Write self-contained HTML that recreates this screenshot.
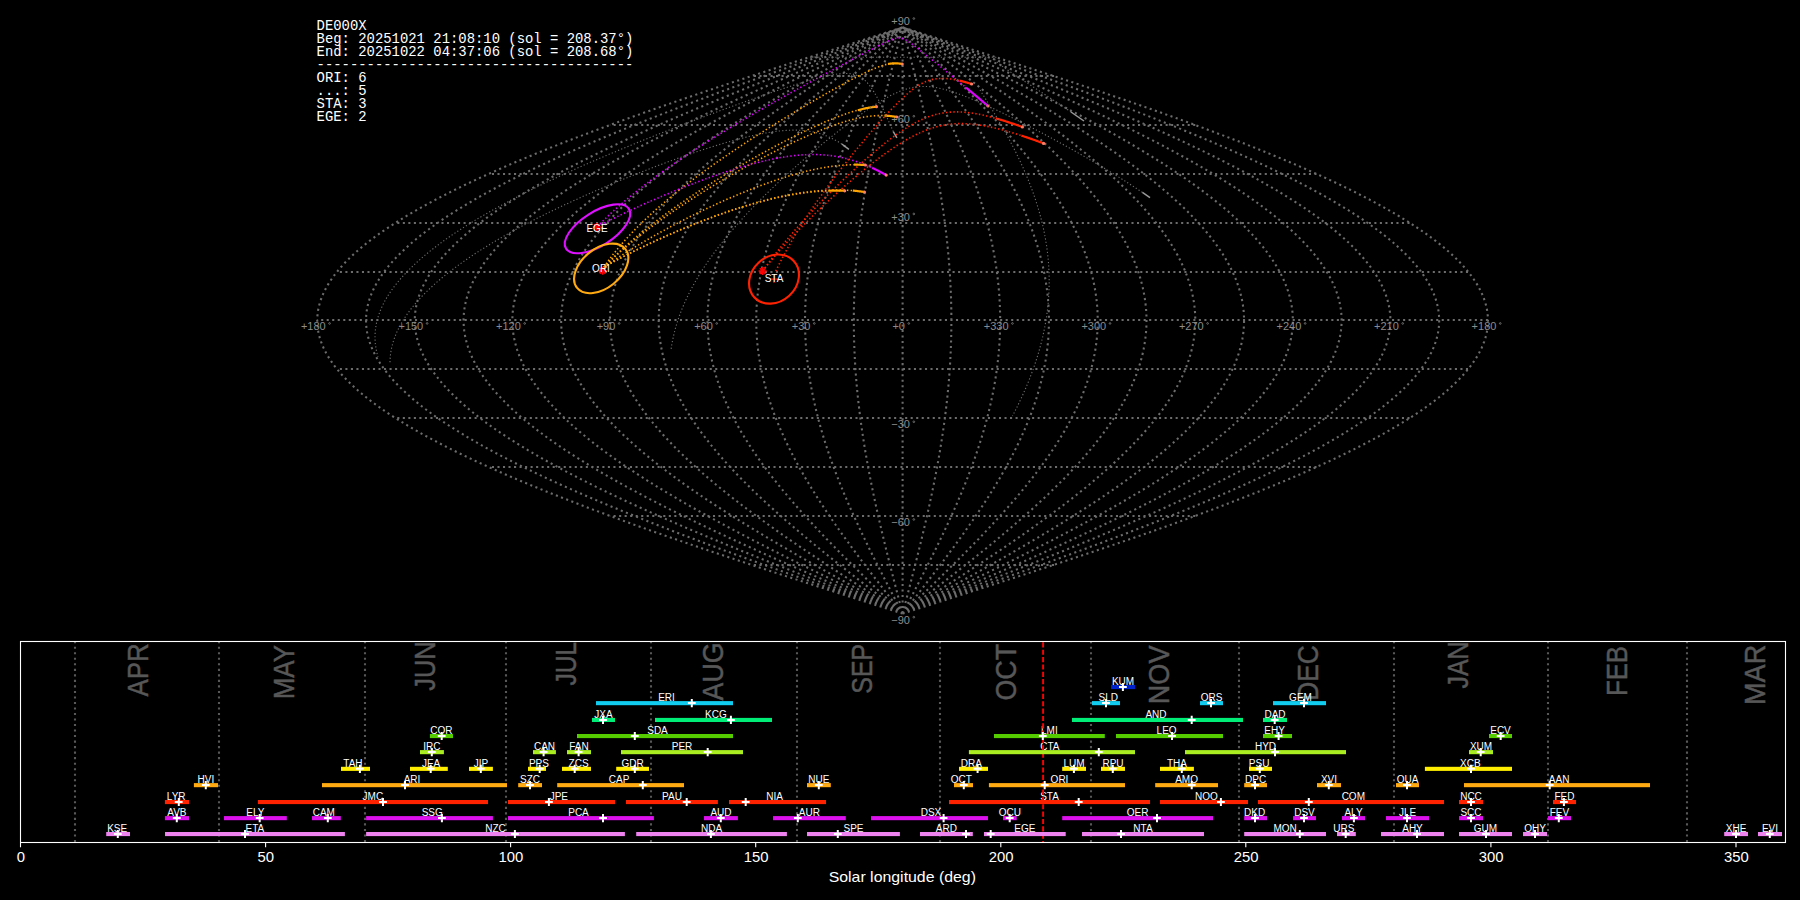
<!DOCTYPE html>
<html><head><meta charset="utf-8"><title>DE000X radiants</title><style>
html,body{margin:0;padding:0;background:#000;width:1800px;height:900px;overflow:hidden}
svg{display:block}
text{font-family:"Liberation Sans",sans-serif}
.hd{font-family:"Liberation Mono",monospace;font-size:13.9px;fill:#fff;white-space:pre}
.gl{font-size:11px;fill:#8c8c8c}
.dg{font-size:6px}
.ml{font-size:10px;fill:#fff;text-anchor:middle}
.mo{font-size:27px;fill:#575757;stroke:#575757;stroke-width:0.45px}
.bl{font-size:10px;fill:#fff;text-anchor:middle}
.tk{font-size:13.9px;fill:#fff;text-anchor:middle}
</style></head>
<body><svg width="1800" height="900" viewBox="0 0 1800 900">
<rect width="1800" height="900" fill="#000"/>
<path d="M1054.10,565.00 L1052.42,565.00 L1050.74,565.00 L1049.05,565.00 L1047.37,565.00 L1045.69,565.00 L1044.00,565.00 L1042.32,565.00 L1040.64,565.00 L1038.95,565.00 L1037.27,565.00 L1035.59,565.00 L1033.90,565.00 L1032.22,565.00 L1030.54,565.00 L1028.85,565.00 L1027.17,565.00 L1025.49,565.00 L1023.80,565.00 L1022.12,565.00 L1020.44,565.00 L1018.75,565.00 L1017.07,565.00 L1015.39,565.00 L1013.70,565.00 L1012.02,565.00 L1010.33,565.00 L1008.65,565.00 L1006.97,565.00 L1005.28,565.00 L1003.60,565.00 L1001.92,565.00 L1000.23,565.00 L998.55,565.00 L996.87,565.00 L995.18,565.00 L993.50,565.00 L991.82,565.00 L990.13,565.00 L988.45,565.00 L986.77,565.00 L985.08,565.00 L983.40,565.00 L981.72,565.00 L980.03,565.00 L978.35,565.00 L976.67,565.00 L974.98,565.00 L973.30,565.00 L971.62,565.00 L969.93,565.00 L968.25,565.00 L966.57,565.00 L964.88,565.00 L963.20,565.00 L961.52,565.00 L959.83,565.00 L958.15,565.00 L956.47,565.00 L954.78,565.00 L953.10,565.00 L951.42,565.00 L949.73,565.00 L948.05,565.00 L946.37,565.00 L944.68,565.00 L943.00,565.00 L941.32,565.00 L939.63,565.00 L937.95,565.00 L936.27,565.00 L934.58,565.00 L932.90,565.00 L931.22,565.00 L929.53,565.00 L927.85,565.00 L926.17,565.00 L924.48,565.00 L922.80,565.00 L921.12,565.00 L919.43,565.00 L917.75,565.00 L916.07,565.00 L914.38,565.00 L912.70,565.00 L911.02,565.00 L909.33,565.00 L907.65,565.00 L905.97,565.00 L904.28,565.00 L902.60,565.00 L900.92,565.00 L899.23,565.00 L897.55,565.00 L895.87,565.00 L894.18,565.00 L892.50,565.00 L890.82,565.00 L889.13,565.00 L887.45,565.00 L885.77,565.00 L884.08,565.00 L882.40,565.00 L880.72,565.00 L879.03,565.00 L877.35,565.00 L875.67,565.00 L873.98,565.00 L872.30,565.00 L870.62,565.00 L868.93,565.00 L867.25,565.00 L865.57,565.00 L863.88,565.00 L862.20,565.00 L860.52,565.00 L858.83,565.00 L857.15,565.00 L855.47,565.00 L853.78,565.00 L852.10,565.00 L850.42,565.00 L848.73,565.00 L847.05,565.00 L845.37,565.00 L843.68,565.00 L842.00,565.00 L840.32,565.00 L838.63,565.00 L836.95,565.00 L835.27,565.00 L833.58,565.00 L831.90,565.00 L830.22,565.00 L828.53,565.00 L826.85,565.00 L825.17,565.00 L823.48,565.00 L821.80,565.00 L820.12,565.00 L818.43,565.00 L816.75,565.00 L815.07,565.00 L813.38,565.00 L811.70,565.00 L810.02,565.00 L808.33,565.00 L806.65,565.00 L804.97,565.00 L803.28,565.00 L801.60,565.00 L799.92,565.00 L798.23,565.00 L796.55,565.00 L794.87,565.00 L793.18,565.00 L791.50,565.00 L789.81,565.00 L788.13,565.00 L786.45,565.00 L784.76,565.00 L783.08,565.00 L781.40,565.00 L779.71,565.00 L778.03,565.00 L776.35,565.00 L774.66,565.00 L772.98,565.00 L771.30,565.00 L769.61,565.00 L767.93,565.00 L766.25,565.00 L764.56,565.00 L762.88,565.00 L761.20,565.00 L759.51,565.00 L757.83,565.00 L756.15,565.00 L754.46,565.00 L752.78,565.00 L751.10,565.00 M1195.28,516.00 L1192.03,516.00 L1188.78,516.00 L1185.52,516.00 L1182.27,516.00 L1179.02,516.00 L1175.77,516.00 L1172.52,516.00 L1169.26,516.00 L1166.01,516.00 L1162.76,516.00 L1159.51,516.00 L1156.26,516.00 L1153.00,516.00 L1149.75,516.00 L1146.50,516.00 L1143.25,516.00 L1140.00,516.00 L1136.74,516.00 L1133.49,516.00 L1130.24,516.00 L1126.99,516.00 L1123.74,516.00 L1120.48,516.00 L1117.23,516.00 L1113.98,516.00 L1110.73,516.00 L1107.48,516.00 L1104.22,516.00 L1100.97,516.00 L1097.72,516.00 L1094.47,516.00 L1091.22,516.00 L1087.96,516.00 L1084.71,516.00 L1081.46,516.00 L1078.21,516.00 L1074.96,516.00 L1071.70,516.00 L1068.45,516.00 L1065.20,516.00 L1061.95,516.00 L1058.70,516.00 L1055.44,516.00 L1052.19,516.00 L1048.94,516.00 L1045.69,516.00 L1042.44,516.00 L1039.18,516.00 L1035.93,516.00 L1032.68,516.00 L1029.43,516.00 L1026.18,516.00 L1022.92,516.00 L1019.67,516.00 L1016.42,516.00 L1013.17,516.00 L1009.92,516.00 L1006.66,516.00 L1003.41,516.00 L1000.16,516.00 L996.91,516.00 L993.66,516.00 L990.40,516.00 L987.15,516.00 L983.90,516.00 L980.65,516.00 L977.40,516.00 L974.14,516.00 L970.89,516.00 L967.64,516.00 L964.39,516.00 L961.14,516.00 L957.88,516.00 L954.63,516.00 L951.38,516.00 L948.13,516.00 L944.88,516.00 L941.62,516.00 L938.37,516.00 L935.12,516.00 L931.87,516.00 L928.62,516.00 L925.36,516.00 L922.11,516.00 L918.86,516.00 L915.61,516.00 L912.36,516.00 L909.10,516.00 L905.85,516.00 L902.60,516.00 L899.35,516.00 L896.10,516.00 L892.84,516.00 L889.59,516.00 L886.34,516.00 L883.09,516.00 L879.84,516.00 L876.58,516.00 L873.33,516.00 L870.08,516.00 L866.83,516.00 L863.58,516.00 L860.32,516.00 L857.07,516.00 L853.82,516.00 L850.57,516.00 L847.32,516.00 L844.06,516.00 L840.81,516.00 L837.56,516.00 L834.31,516.00 L831.06,516.00 L827.80,516.00 L824.55,516.00 L821.30,516.00 L818.05,516.00 L814.80,516.00 L811.54,516.00 L808.29,516.00 L805.04,516.00 L801.79,516.00 L798.54,516.00 L795.28,516.00 L792.03,516.00 L788.78,516.00 L785.53,516.00 L782.28,516.00 L779.02,516.00 L775.77,516.00 L772.52,516.00 L769.27,516.00 L766.02,516.00 L762.76,516.00 L759.51,516.00 L756.26,516.00 L753.01,516.00 L749.76,516.00 L746.50,516.00 L743.25,516.00 L740.00,516.00 L736.75,516.00 L733.50,516.00 L730.24,516.00 L726.99,516.00 L723.74,516.00 L720.49,516.00 L717.24,516.00 L713.98,516.00 L710.73,516.00 L707.48,516.00 L704.23,516.00 L700.98,516.00 L697.72,516.00 L694.47,516.00 L691.22,516.00 L687.97,516.00 L684.72,516.00 L681.46,516.00 L678.21,516.00 L674.96,516.00 L671.71,516.00 L668.46,516.00 L665.20,516.00 L661.95,516.00 L658.70,516.00 L655.45,516.00 L652.20,516.00 L648.94,516.00 L645.69,516.00 L642.44,516.00 L639.19,516.00 L635.94,516.00 L632.68,516.00 L629.43,516.00 L626.18,516.00 L622.93,516.00 L619.68,516.00 L616.42,516.00 L613.17,516.00 L609.92,516.00 M1316.51,467.00 L1311.91,467.00 L1307.31,467.00 L1302.71,467.00 L1298.12,467.00 L1293.52,467.00 L1288.92,467.00 L1284.32,467.00 L1279.72,467.00 L1275.12,467.00 L1270.52,467.00 L1265.92,467.00 L1261.32,467.00 L1256.72,467.00 L1252.13,467.00 L1247.53,467.00 L1242.93,467.00 L1238.33,467.00 L1233.73,467.00 L1229.13,467.00 L1224.53,467.00 L1219.93,467.00 L1215.33,467.00 L1210.73,467.00 L1206.14,467.00 L1201.54,467.00 L1196.94,467.00 L1192.34,467.00 L1187.74,467.00 L1183.14,467.00 L1178.54,467.00 L1173.94,467.00 L1169.34,467.00 L1164.74,467.00 L1160.15,467.00 L1155.55,467.00 L1150.95,467.00 L1146.35,467.00 L1141.75,467.00 L1137.15,467.00 L1132.55,467.00 L1127.95,467.00 L1123.35,467.00 L1118.75,467.00 L1114.16,467.00 L1109.56,467.00 L1104.96,467.00 L1100.36,467.00 L1095.76,467.00 L1091.16,467.00 L1086.56,467.00 L1081.96,467.00 L1077.36,467.00 L1072.76,467.00 L1068.16,467.00 L1063.57,467.00 L1058.97,467.00 L1054.37,467.00 L1049.77,467.00 L1045.17,467.00 L1040.57,467.00 L1035.97,467.00 L1031.37,467.00 L1026.77,467.00 L1022.17,467.00 L1017.58,467.00 L1012.98,467.00 L1008.38,467.00 L1003.78,467.00 L999.18,467.00 L994.58,467.00 L989.98,467.00 L985.38,467.00 L980.78,467.00 L976.18,467.00 L971.59,467.00 L966.99,467.00 L962.39,467.00 L957.79,467.00 L953.19,467.00 L948.59,467.00 L943.99,467.00 L939.39,467.00 L934.79,467.00 L930.19,467.00 L925.60,467.00 L921.00,467.00 L916.40,467.00 L911.80,467.00 L907.20,467.00 L902.60,467.00 L898.00,467.00 L893.40,467.00 L888.80,467.00 L884.20,467.00 L879.60,467.00 L875.01,467.00 L870.41,467.00 L865.81,467.00 L861.21,467.00 L856.61,467.00 L852.01,467.00 L847.41,467.00 L842.81,467.00 L838.21,467.00 L833.61,467.00 L829.02,467.00 L824.42,467.00 L819.82,467.00 L815.22,467.00 L810.62,467.00 L806.02,467.00 L801.42,467.00 L796.82,467.00 L792.22,467.00 L787.62,467.00 L783.03,467.00 L778.43,467.00 L773.83,467.00 L769.23,467.00 L764.63,467.00 L760.03,467.00 L755.43,467.00 L750.83,467.00 L746.23,467.00 L741.63,467.00 L737.04,467.00 L732.44,467.00 L727.84,467.00 L723.24,467.00 L718.64,467.00 L714.04,467.00 L709.44,467.00 L704.84,467.00 L700.24,467.00 L695.64,467.00 L691.04,467.00 L686.45,467.00 L681.85,467.00 L677.25,467.00 L672.65,467.00 L668.05,467.00 L663.45,467.00 L658.85,467.00 L654.25,467.00 L649.65,467.00 L645.05,467.00 L640.46,467.00 L635.86,467.00 L631.26,467.00 L626.66,467.00 L622.06,467.00 L617.46,467.00 L612.86,467.00 L608.26,467.00 L603.66,467.00 L599.06,467.00 L594.47,467.00 L589.87,467.00 L585.27,467.00 L580.67,467.00 L576.07,467.00 L571.47,467.00 L566.87,467.00 L562.27,467.00 L557.67,467.00 L553.07,467.00 L548.48,467.00 L543.88,467.00 L539.28,467.00 L534.68,467.00 L530.08,467.00 L525.48,467.00 L520.88,467.00 L516.28,467.00 L511.68,467.00 L507.08,467.00 L502.49,467.00 L497.89,467.00 L493.29,467.00 L488.69,467.00 M1409.54,418.00 L1403.90,418.00 L1398.27,418.00 L1392.64,418.00 L1387.01,418.00 L1381.37,418.00 L1375.74,418.00 L1370.11,418.00 L1364.48,418.00 L1358.84,418.00 L1353.21,418.00 L1347.58,418.00 L1341.95,418.00 L1336.31,418.00 L1330.68,418.00 L1325.05,418.00 L1319.41,418.00 L1313.78,418.00 L1308.15,418.00 L1302.52,418.00 L1296.88,418.00 L1291.25,418.00 L1285.62,418.00 L1279.99,418.00 L1274.35,418.00 L1268.72,418.00 L1263.09,418.00 L1257.46,418.00 L1251.82,418.00 L1246.19,418.00 L1240.56,418.00 L1234.93,418.00 L1229.29,418.00 L1223.66,418.00 L1218.03,418.00 L1212.39,418.00 L1206.76,418.00 L1201.13,418.00 L1195.50,418.00 L1189.86,418.00 L1184.23,418.00 L1178.60,418.00 L1172.97,418.00 L1167.33,418.00 L1161.70,418.00 L1156.07,418.00 L1150.44,418.00 L1144.80,418.00 L1139.17,418.00 L1133.54,418.00 L1127.91,418.00 L1122.27,418.00 L1116.64,418.00 L1111.01,418.00 L1105.37,418.00 L1099.74,418.00 L1094.11,418.00 L1088.48,418.00 L1082.84,418.00 L1077.21,418.00 L1071.58,418.00 L1065.95,418.00 L1060.31,418.00 L1054.68,418.00 L1049.05,418.00 L1043.42,418.00 L1037.78,418.00 L1032.15,418.00 L1026.52,418.00 L1020.89,418.00 L1015.25,418.00 L1009.62,418.00 L1003.99,418.00 L998.35,418.00 L992.72,418.00 L987.09,418.00 L981.46,418.00 L975.82,418.00 L970.19,418.00 L964.56,418.00 L958.93,418.00 L953.29,418.00 L947.66,418.00 L942.03,418.00 L936.40,418.00 L930.76,418.00 L925.13,418.00 L919.50,418.00 L913.87,418.00 L908.23,418.00 L902.60,418.00 L896.97,418.00 L891.33,418.00 L885.70,418.00 L880.07,418.00 L874.44,418.00 L868.80,418.00 L863.17,418.00 L857.54,418.00 L851.91,418.00 L846.27,418.00 L840.64,418.00 L835.01,418.00 L829.38,418.00 L823.74,418.00 L818.11,418.00 L812.48,418.00 L806.85,418.00 L801.21,418.00 L795.58,418.00 L789.95,418.00 L784.31,418.00 L778.68,418.00 L773.05,418.00 L767.42,418.00 L761.78,418.00 L756.15,418.00 L750.52,418.00 L744.89,418.00 L739.25,418.00 L733.62,418.00 L727.99,418.00 L722.36,418.00 L716.72,418.00 L711.09,418.00 L705.46,418.00 L699.83,418.00 L694.19,418.00 L688.56,418.00 L682.93,418.00 L677.29,418.00 L671.66,418.00 L666.03,418.00 L660.40,418.00 L654.76,418.00 L649.13,418.00 L643.50,418.00 L637.87,418.00 L632.23,418.00 L626.60,418.00 L620.97,418.00 L615.34,418.00 L609.70,418.00 L604.07,418.00 L598.44,418.00 L592.81,418.00 L587.17,418.00 L581.54,418.00 L575.91,418.00 L570.27,418.00 L564.64,418.00 L559.01,418.00 L553.38,418.00 L547.74,418.00 L542.11,418.00 L536.48,418.00 L530.85,418.00 L525.21,418.00 L519.58,418.00 L513.95,418.00 L508.32,418.00 L502.68,418.00 L497.05,418.00 L491.42,418.00 L485.79,418.00 L480.15,418.00 L474.52,418.00 L468.89,418.00 L463.25,418.00 L457.62,418.00 L451.99,418.00 L446.36,418.00 L440.72,418.00 L435.09,418.00 L429.46,418.00 L423.83,418.00 L418.19,418.00 L412.56,418.00 L406.93,418.00 L401.30,418.00 L395.66,418.00 M1468.01,369.00 L1461.73,369.00 L1455.45,369.00 L1449.17,369.00 L1442.88,369.00 L1436.60,369.00 L1430.32,369.00 L1424.04,369.00 L1417.76,369.00 L1411.47,369.00 L1405.19,369.00 L1398.91,369.00 L1392.63,369.00 L1386.34,369.00 L1380.06,369.00 L1373.78,369.00 L1367.50,369.00 L1361.21,369.00 L1354.93,369.00 L1348.65,369.00 L1342.37,369.00 L1336.08,369.00 L1329.80,369.00 L1323.52,369.00 L1317.24,369.00 L1310.95,369.00 L1304.67,369.00 L1298.39,369.00 L1292.11,369.00 L1285.83,369.00 L1279.54,369.00 L1273.26,369.00 L1266.98,369.00 L1260.70,369.00 L1254.41,369.00 L1248.13,369.00 L1241.85,369.00 L1235.57,369.00 L1229.28,369.00 L1223.00,369.00 L1216.72,369.00 L1210.44,369.00 L1204.15,369.00 L1197.87,369.00 L1191.59,369.00 L1185.31,369.00 L1179.02,369.00 L1172.74,369.00 L1166.46,369.00 L1160.18,369.00 L1153.90,369.00 L1147.61,369.00 L1141.33,369.00 L1135.05,369.00 L1128.77,369.00 L1122.48,369.00 L1116.20,369.00 L1109.92,369.00 L1103.64,369.00 L1097.35,369.00 L1091.07,369.00 L1084.79,369.00 L1078.51,369.00 L1072.22,369.00 L1065.94,369.00 L1059.66,369.00 L1053.38,369.00 L1047.09,369.00 L1040.81,369.00 L1034.53,369.00 L1028.25,369.00 L1021.97,369.00 L1015.68,369.00 L1009.40,369.00 L1003.12,369.00 L996.84,369.00 L990.55,369.00 L984.27,369.00 L977.99,369.00 L971.71,369.00 L965.42,369.00 L959.14,369.00 L952.86,369.00 L946.58,369.00 L940.29,369.00 L934.01,369.00 L927.73,369.00 L921.45,369.00 L915.16,369.00 L908.88,369.00 L902.60,369.00 L896.32,369.00 L890.04,369.00 L883.75,369.00 L877.47,369.00 L871.19,369.00 L864.91,369.00 L858.62,369.00 L852.34,369.00 L846.06,369.00 L839.78,369.00 L833.49,369.00 L827.21,369.00 L820.93,369.00 L814.65,369.00 L808.36,369.00 L802.08,369.00 L795.80,369.00 L789.52,369.00 L783.23,369.00 L776.95,369.00 L770.67,369.00 L764.39,369.00 L758.11,369.00 L751.82,369.00 L745.54,369.00 L739.26,369.00 L732.98,369.00 L726.69,369.00 L720.41,369.00 L714.13,369.00 L707.85,369.00 L701.56,369.00 L695.28,369.00 L689.00,369.00 L682.72,369.00 L676.43,369.00 L670.15,369.00 L663.87,369.00 L657.59,369.00 L651.30,369.00 L645.02,369.00 L638.74,369.00 L632.46,369.00 L626.18,369.00 L619.89,369.00 L613.61,369.00 L607.33,369.00 L601.05,369.00 L594.76,369.00 L588.48,369.00 L582.20,369.00 L575.92,369.00 L569.63,369.00 L563.35,369.00 L557.07,369.00 L550.79,369.00 L544.50,369.00 L538.22,369.00 L531.94,369.00 L525.66,369.00 L519.37,369.00 L513.09,369.00 L506.81,369.00 L500.53,369.00 L494.25,369.00 L487.96,369.00 L481.68,369.00 L475.40,369.00 L469.12,369.00 L462.83,369.00 L456.55,369.00 L450.27,369.00 L443.99,369.00 L437.70,369.00 L431.42,369.00 L425.14,369.00 L418.86,369.00 L412.57,369.00 L406.29,369.00 L400.01,369.00 L393.73,369.00 L387.44,369.00 L381.16,369.00 L374.88,369.00 L368.60,369.00 L362.32,369.00 L356.03,369.00 L349.75,369.00 L343.47,369.00 L337.19,369.00 M1487.96,320.00 L1481.46,320.00 L1474.95,320.00 L1468.45,320.00 L1461.94,320.00 L1455.44,320.00 L1448.94,320.00 L1442.43,320.00 L1435.93,320.00 L1429.42,320.00 L1422.92,320.00 L1416.42,320.00 L1409.91,320.00 L1403.41,320.00 L1396.90,320.00 L1390.40,320.00 L1383.90,320.00 L1377.39,320.00 L1370.89,320.00 L1364.38,320.00 L1357.88,320.00 L1351.38,320.00 L1344.87,320.00 L1338.37,320.00 L1331.86,320.00 L1325.36,320.00 L1318.86,320.00 L1312.35,320.00 L1305.85,320.00 L1299.34,320.00 L1292.84,320.00 L1286.34,320.00 L1279.83,320.00 L1273.33,320.00 L1266.82,320.00 L1260.32,320.00 L1253.82,320.00 L1247.31,320.00 L1240.81,320.00 L1234.30,320.00 L1227.80,320.00 L1221.30,320.00 L1214.79,320.00 L1208.29,320.00 L1201.78,320.00 L1195.28,320.00 L1188.78,320.00 L1182.27,320.00 L1175.77,320.00 L1169.26,320.00 L1162.76,320.00 L1156.26,320.00 L1149.75,320.00 L1143.25,320.00 L1136.74,320.00 L1130.24,320.00 L1123.74,320.00 L1117.23,320.00 L1110.73,320.00 L1104.22,320.00 L1097.72,320.00 L1091.22,320.00 L1084.71,320.00 L1078.21,320.00 L1071.70,320.00 L1065.20,320.00 L1058.70,320.00 L1052.19,320.00 L1045.69,320.00 L1039.18,320.00 L1032.68,320.00 L1026.18,320.00 L1019.67,320.00 L1013.17,320.00 L1006.66,320.00 L1000.16,320.00 L993.66,320.00 L987.15,320.00 L980.65,320.00 L974.14,320.00 L967.64,320.00 L961.14,320.00 L954.63,320.00 L948.13,320.00 L941.62,320.00 L935.12,320.00 L928.62,320.00 L922.11,320.00 L915.61,320.00 L909.10,320.00 L902.60,320.00 L896.10,320.00 L889.59,320.00 L883.09,320.00 L876.58,320.00 L870.08,320.00 L863.58,320.00 L857.07,320.00 L850.57,320.00 L844.06,320.00 L837.56,320.00 L831.06,320.00 L824.55,320.00 L818.05,320.00 L811.54,320.00 L805.04,320.00 L798.54,320.00 L792.03,320.00 L785.53,320.00 L779.02,320.00 L772.52,320.00 L766.02,320.00 L759.51,320.00 L753.01,320.00 L746.50,320.00 L740.00,320.00 L733.50,320.00 L726.99,320.00 L720.49,320.00 L713.98,320.00 L707.48,320.00 L700.98,320.00 L694.47,320.00 L687.97,320.00 L681.46,320.00 L674.96,320.00 L668.46,320.00 L661.95,320.00 L655.45,320.00 L648.94,320.00 L642.44,320.00 L635.94,320.00 L629.43,320.00 L622.93,320.00 L616.42,320.00 L609.92,320.00 L603.42,320.00 L596.91,320.00 L590.41,320.00 L583.90,320.00 L577.40,320.00 L570.90,320.00 L564.39,320.00 L557.89,320.00 L551.38,320.00 L544.88,320.00 L538.38,320.00 L531.87,320.00 L525.37,320.00 L518.86,320.00 L512.36,320.00 L505.86,320.00 L499.35,320.00 L492.85,320.00 L486.34,320.00 L479.84,320.00 L473.34,320.00 L466.83,320.00 L460.33,320.00 L453.82,320.00 L447.32,320.00 L440.82,320.00 L434.31,320.00 L427.81,320.00 L421.30,320.00 L414.80,320.00 L408.30,320.00 L401.79,320.00 L395.29,320.00 L388.78,320.00 L382.28,320.00 L375.78,320.00 L369.27,320.00 L362.77,320.00 L356.26,320.00 L349.76,320.00 L343.26,320.00 L336.75,320.00 L330.25,320.00 L323.74,320.00 L317.24,320.00 M1468.01,272.00 L1461.73,272.00 L1455.45,272.00 L1449.17,272.00 L1442.88,272.00 L1436.60,272.00 L1430.32,272.00 L1424.04,272.00 L1417.76,272.00 L1411.47,272.00 L1405.19,272.00 L1398.91,272.00 L1392.63,272.00 L1386.34,272.00 L1380.06,272.00 L1373.78,272.00 L1367.50,272.00 L1361.21,272.00 L1354.93,272.00 L1348.65,272.00 L1342.37,272.00 L1336.08,272.00 L1329.80,272.00 L1323.52,272.00 L1317.24,272.00 L1310.95,272.00 L1304.67,272.00 L1298.39,272.00 L1292.11,272.00 L1285.83,272.00 L1279.54,272.00 L1273.26,272.00 L1266.98,272.00 L1260.70,272.00 L1254.41,272.00 L1248.13,272.00 L1241.85,272.00 L1235.57,272.00 L1229.28,272.00 L1223.00,272.00 L1216.72,272.00 L1210.44,272.00 L1204.15,272.00 L1197.87,272.00 L1191.59,272.00 L1185.31,272.00 L1179.02,272.00 L1172.74,272.00 L1166.46,272.00 L1160.18,272.00 L1153.90,272.00 L1147.61,272.00 L1141.33,272.00 L1135.05,272.00 L1128.77,272.00 L1122.48,272.00 L1116.20,272.00 L1109.92,272.00 L1103.64,272.00 L1097.35,272.00 L1091.07,272.00 L1084.79,272.00 L1078.51,272.00 L1072.22,272.00 L1065.94,272.00 L1059.66,272.00 L1053.38,272.00 L1047.09,272.00 L1040.81,272.00 L1034.53,272.00 L1028.25,272.00 L1021.97,272.00 L1015.68,272.00 L1009.40,272.00 L1003.12,272.00 L996.84,272.00 L990.55,272.00 L984.27,272.00 L977.99,272.00 L971.71,272.00 L965.42,272.00 L959.14,272.00 L952.86,272.00 L946.58,272.00 L940.29,272.00 L934.01,272.00 L927.73,272.00 L921.45,272.00 L915.16,272.00 L908.88,272.00 L902.60,272.00 L896.32,272.00 L890.04,272.00 L883.75,272.00 L877.47,272.00 L871.19,272.00 L864.91,272.00 L858.62,272.00 L852.34,272.00 L846.06,272.00 L839.78,272.00 L833.49,272.00 L827.21,272.00 L820.93,272.00 L814.65,272.00 L808.36,272.00 L802.08,272.00 L795.80,272.00 L789.52,272.00 L783.23,272.00 L776.95,272.00 L770.67,272.00 L764.39,272.00 L758.11,272.00 L751.82,272.00 L745.54,272.00 L739.26,272.00 L732.98,272.00 L726.69,272.00 L720.41,272.00 L714.13,272.00 L707.85,272.00 L701.56,272.00 L695.28,272.00 L689.00,272.00 L682.72,272.00 L676.43,272.00 L670.15,272.00 L663.87,272.00 L657.59,272.00 L651.30,272.00 L645.02,272.00 L638.74,272.00 L632.46,272.00 L626.18,272.00 L619.89,272.00 L613.61,272.00 L607.33,272.00 L601.05,272.00 L594.76,272.00 L588.48,272.00 L582.20,272.00 L575.92,272.00 L569.63,272.00 L563.35,272.00 L557.07,272.00 L550.79,272.00 L544.50,272.00 L538.22,272.00 L531.94,272.00 L525.66,272.00 L519.37,272.00 L513.09,272.00 L506.81,272.00 L500.53,272.00 L494.25,272.00 L487.96,272.00 L481.68,272.00 L475.40,272.00 L469.12,272.00 L462.83,272.00 L456.55,272.00 L450.27,272.00 L443.99,272.00 L437.70,272.00 L431.42,272.00 L425.14,272.00 L418.86,272.00 L412.57,272.00 L406.29,272.00 L400.01,272.00 L393.73,272.00 L387.44,272.00 L381.16,272.00 L374.88,272.00 L368.60,272.00 L362.32,272.00 L356.03,272.00 L349.75,272.00 L343.47,272.00 L337.19,272.00 M1409.54,223.00 L1403.90,223.00 L1398.27,223.00 L1392.64,223.00 L1387.01,223.00 L1381.37,223.00 L1375.74,223.00 L1370.11,223.00 L1364.48,223.00 L1358.84,223.00 L1353.21,223.00 L1347.58,223.00 L1341.95,223.00 L1336.31,223.00 L1330.68,223.00 L1325.05,223.00 L1319.41,223.00 L1313.78,223.00 L1308.15,223.00 L1302.52,223.00 L1296.88,223.00 L1291.25,223.00 L1285.62,223.00 L1279.99,223.00 L1274.35,223.00 L1268.72,223.00 L1263.09,223.00 L1257.46,223.00 L1251.82,223.00 L1246.19,223.00 L1240.56,223.00 L1234.93,223.00 L1229.29,223.00 L1223.66,223.00 L1218.03,223.00 L1212.39,223.00 L1206.76,223.00 L1201.13,223.00 L1195.50,223.00 L1189.86,223.00 L1184.23,223.00 L1178.60,223.00 L1172.97,223.00 L1167.33,223.00 L1161.70,223.00 L1156.07,223.00 L1150.44,223.00 L1144.80,223.00 L1139.17,223.00 L1133.54,223.00 L1127.91,223.00 L1122.27,223.00 L1116.64,223.00 L1111.01,223.00 L1105.37,223.00 L1099.74,223.00 L1094.11,223.00 L1088.48,223.00 L1082.84,223.00 L1077.21,223.00 L1071.58,223.00 L1065.95,223.00 L1060.31,223.00 L1054.68,223.00 L1049.05,223.00 L1043.42,223.00 L1037.78,223.00 L1032.15,223.00 L1026.52,223.00 L1020.89,223.00 L1015.25,223.00 L1009.62,223.00 L1003.99,223.00 L998.35,223.00 L992.72,223.00 L987.09,223.00 L981.46,223.00 L975.82,223.00 L970.19,223.00 L964.56,223.00 L958.93,223.00 L953.29,223.00 L947.66,223.00 L942.03,223.00 L936.40,223.00 L930.76,223.00 L925.13,223.00 L919.50,223.00 L913.87,223.00 L908.23,223.00 L902.60,223.00 L896.97,223.00 L891.33,223.00 L885.70,223.00 L880.07,223.00 L874.44,223.00 L868.80,223.00 L863.17,223.00 L857.54,223.00 L851.91,223.00 L846.27,223.00 L840.64,223.00 L835.01,223.00 L829.38,223.00 L823.74,223.00 L818.11,223.00 L812.48,223.00 L806.85,223.00 L801.21,223.00 L795.58,223.00 L789.95,223.00 L784.31,223.00 L778.68,223.00 L773.05,223.00 L767.42,223.00 L761.78,223.00 L756.15,223.00 L750.52,223.00 L744.89,223.00 L739.25,223.00 L733.62,223.00 L727.99,223.00 L722.36,223.00 L716.72,223.00 L711.09,223.00 L705.46,223.00 L699.83,223.00 L694.19,223.00 L688.56,223.00 L682.93,223.00 L677.29,223.00 L671.66,223.00 L666.03,223.00 L660.40,223.00 L654.76,223.00 L649.13,223.00 L643.50,223.00 L637.87,223.00 L632.23,223.00 L626.60,223.00 L620.97,223.00 L615.34,223.00 L609.70,223.00 L604.07,223.00 L598.44,223.00 L592.81,223.00 L587.17,223.00 L581.54,223.00 L575.91,223.00 L570.27,223.00 L564.64,223.00 L559.01,223.00 L553.38,223.00 L547.74,223.00 L542.11,223.00 L536.48,223.00 L530.85,223.00 L525.21,223.00 L519.58,223.00 L513.95,223.00 L508.32,223.00 L502.68,223.00 L497.05,223.00 L491.42,223.00 L485.79,223.00 L480.15,223.00 L474.52,223.00 L468.89,223.00 L463.25,223.00 L457.62,223.00 L451.99,223.00 L446.36,223.00 L440.72,223.00 L435.09,223.00 L429.46,223.00 L423.83,223.00 L418.19,223.00 L412.56,223.00 L406.93,223.00 L401.30,223.00 L395.66,223.00 M1316.51,174.00 L1311.91,174.00 L1307.31,174.00 L1302.71,174.00 L1298.12,174.00 L1293.52,174.00 L1288.92,174.00 L1284.32,174.00 L1279.72,174.00 L1275.12,174.00 L1270.52,174.00 L1265.92,174.00 L1261.32,174.00 L1256.72,174.00 L1252.13,174.00 L1247.53,174.00 L1242.93,174.00 L1238.33,174.00 L1233.73,174.00 L1229.13,174.00 L1224.53,174.00 L1219.93,174.00 L1215.33,174.00 L1210.73,174.00 L1206.14,174.00 L1201.54,174.00 L1196.94,174.00 L1192.34,174.00 L1187.74,174.00 L1183.14,174.00 L1178.54,174.00 L1173.94,174.00 L1169.34,174.00 L1164.74,174.00 L1160.15,174.00 L1155.55,174.00 L1150.95,174.00 L1146.35,174.00 L1141.75,174.00 L1137.15,174.00 L1132.55,174.00 L1127.95,174.00 L1123.35,174.00 L1118.75,174.00 L1114.16,174.00 L1109.56,174.00 L1104.96,174.00 L1100.36,174.00 L1095.76,174.00 L1091.16,174.00 L1086.56,174.00 L1081.96,174.00 L1077.36,174.00 L1072.76,174.00 L1068.16,174.00 L1063.57,174.00 L1058.97,174.00 L1054.37,174.00 L1049.77,174.00 L1045.17,174.00 L1040.57,174.00 L1035.97,174.00 L1031.37,174.00 L1026.77,174.00 L1022.17,174.00 L1017.58,174.00 L1012.98,174.00 L1008.38,174.00 L1003.78,174.00 L999.18,174.00 L994.58,174.00 L989.98,174.00 L985.38,174.00 L980.78,174.00 L976.18,174.00 L971.59,174.00 L966.99,174.00 L962.39,174.00 L957.79,174.00 L953.19,174.00 L948.59,174.00 L943.99,174.00 L939.39,174.00 L934.79,174.00 L930.19,174.00 L925.60,174.00 L921.00,174.00 L916.40,174.00 L911.80,174.00 L907.20,174.00 L902.60,174.00 L898.00,174.00 L893.40,174.00 L888.80,174.00 L884.20,174.00 L879.60,174.00 L875.01,174.00 L870.41,174.00 L865.81,174.00 L861.21,174.00 L856.61,174.00 L852.01,174.00 L847.41,174.00 L842.81,174.00 L838.21,174.00 L833.61,174.00 L829.02,174.00 L824.42,174.00 L819.82,174.00 L815.22,174.00 L810.62,174.00 L806.02,174.00 L801.42,174.00 L796.82,174.00 L792.22,174.00 L787.62,174.00 L783.03,174.00 L778.43,174.00 L773.83,174.00 L769.23,174.00 L764.63,174.00 L760.03,174.00 L755.43,174.00 L750.83,174.00 L746.23,174.00 L741.63,174.00 L737.04,174.00 L732.44,174.00 L727.84,174.00 L723.24,174.00 L718.64,174.00 L714.04,174.00 L709.44,174.00 L704.84,174.00 L700.24,174.00 L695.64,174.00 L691.04,174.00 L686.45,174.00 L681.85,174.00 L677.25,174.00 L672.65,174.00 L668.05,174.00 L663.45,174.00 L658.85,174.00 L654.25,174.00 L649.65,174.00 L645.05,174.00 L640.46,174.00 L635.86,174.00 L631.26,174.00 L626.66,174.00 L622.06,174.00 L617.46,174.00 L612.86,174.00 L608.26,174.00 L603.66,174.00 L599.06,174.00 L594.47,174.00 L589.87,174.00 L585.27,174.00 L580.67,174.00 L576.07,174.00 L571.47,174.00 L566.87,174.00 L562.27,174.00 L557.67,174.00 L553.07,174.00 L548.48,174.00 L543.88,174.00 L539.28,174.00 L534.68,174.00 L530.08,174.00 L525.48,174.00 L520.88,174.00 L516.28,174.00 L511.68,174.00 L507.08,174.00 L502.49,174.00 L497.89,174.00 L493.29,174.00 L488.69,174.00 M1195.28,125.00 L1192.03,125.00 L1188.78,125.00 L1185.52,125.00 L1182.27,125.00 L1179.02,125.00 L1175.77,125.00 L1172.52,125.00 L1169.26,125.00 L1166.01,125.00 L1162.76,125.00 L1159.51,125.00 L1156.26,125.00 L1153.00,125.00 L1149.75,125.00 L1146.50,125.00 L1143.25,125.00 L1140.00,125.00 L1136.74,125.00 L1133.49,125.00 L1130.24,125.00 L1126.99,125.00 L1123.74,125.00 L1120.48,125.00 L1117.23,125.00 L1113.98,125.00 L1110.73,125.00 L1107.48,125.00 L1104.22,125.00 L1100.97,125.00 L1097.72,125.00 L1094.47,125.00 L1091.22,125.00 L1087.96,125.00 L1084.71,125.00 L1081.46,125.00 L1078.21,125.00 L1074.96,125.00 L1071.70,125.00 L1068.45,125.00 L1065.20,125.00 L1061.95,125.00 L1058.70,125.00 L1055.44,125.00 L1052.19,125.00 L1048.94,125.00 L1045.69,125.00 L1042.44,125.00 L1039.18,125.00 L1035.93,125.00 L1032.68,125.00 L1029.43,125.00 L1026.18,125.00 L1022.92,125.00 L1019.67,125.00 L1016.42,125.00 L1013.17,125.00 L1009.92,125.00 L1006.66,125.00 L1003.41,125.00 L1000.16,125.00 L996.91,125.00 L993.66,125.00 L990.40,125.00 L987.15,125.00 L983.90,125.00 L980.65,125.00 L977.40,125.00 L974.14,125.00 L970.89,125.00 L967.64,125.00 L964.39,125.00 L961.14,125.00 L957.88,125.00 L954.63,125.00 L951.38,125.00 L948.13,125.00 L944.88,125.00 L941.62,125.00 L938.37,125.00 L935.12,125.00 L931.87,125.00 L928.62,125.00 L925.36,125.00 L922.11,125.00 L918.86,125.00 L915.61,125.00 L912.36,125.00 L909.10,125.00 L905.85,125.00 L902.60,125.00 L899.35,125.00 L896.10,125.00 L892.84,125.00 L889.59,125.00 L886.34,125.00 L883.09,125.00 L879.84,125.00 L876.58,125.00 L873.33,125.00 L870.08,125.00 L866.83,125.00 L863.58,125.00 L860.32,125.00 L857.07,125.00 L853.82,125.00 L850.57,125.00 L847.32,125.00 L844.06,125.00 L840.81,125.00 L837.56,125.00 L834.31,125.00 L831.06,125.00 L827.80,125.00 L824.55,125.00 L821.30,125.00 L818.05,125.00 L814.80,125.00 L811.54,125.00 L808.29,125.00 L805.04,125.00 L801.79,125.00 L798.54,125.00 L795.28,125.00 L792.03,125.00 L788.78,125.00 L785.53,125.00 L782.28,125.00 L779.02,125.00 L775.77,125.00 L772.52,125.00 L769.27,125.00 L766.02,125.00 L762.76,125.00 L759.51,125.00 L756.26,125.00 L753.01,125.00 L749.76,125.00 L746.50,125.00 L743.25,125.00 L740.00,125.00 L736.75,125.00 L733.50,125.00 L730.24,125.00 L726.99,125.00 L723.74,125.00 L720.49,125.00 L717.24,125.00 L713.98,125.00 L710.73,125.00 L707.48,125.00 L704.23,125.00 L700.98,125.00 L697.72,125.00 L694.47,125.00 L691.22,125.00 L687.97,125.00 L684.72,125.00 L681.46,125.00 L678.21,125.00 L674.96,125.00 L671.71,125.00 L668.46,125.00 L665.20,125.00 L661.95,125.00 L658.70,125.00 L655.45,125.00 L652.20,125.00 L648.94,125.00 L645.69,125.00 L642.44,125.00 L639.19,125.00 L635.94,125.00 L632.68,125.00 L629.43,125.00 L626.18,125.00 L622.93,125.00 L619.68,125.00 L616.42,125.00 L613.17,125.00 L609.92,125.00 M1054.10,76.00 L1052.42,76.00 L1050.74,76.00 L1049.05,76.00 L1047.37,76.00 L1045.69,76.00 L1044.00,76.00 L1042.32,76.00 L1040.64,76.00 L1038.95,76.00 L1037.27,76.00 L1035.59,76.00 L1033.90,76.00 L1032.22,76.00 L1030.54,76.00 L1028.85,76.00 L1027.17,76.00 L1025.49,76.00 L1023.80,76.00 L1022.12,76.00 L1020.44,76.00 L1018.75,76.00 L1017.07,76.00 L1015.39,76.00 L1013.70,76.00 L1012.02,76.00 L1010.33,76.00 L1008.65,76.00 L1006.97,76.00 L1005.28,76.00 L1003.60,76.00 L1001.92,76.00 L1000.23,76.00 L998.55,76.00 L996.87,76.00 L995.18,76.00 L993.50,76.00 L991.82,76.00 L990.13,76.00 L988.45,76.00 L986.77,76.00 L985.08,76.00 L983.40,76.00 L981.72,76.00 L980.03,76.00 L978.35,76.00 L976.67,76.00 L974.98,76.00 L973.30,76.00 L971.62,76.00 L969.93,76.00 L968.25,76.00 L966.57,76.00 L964.88,76.00 L963.20,76.00 L961.52,76.00 L959.83,76.00 L958.15,76.00 L956.47,76.00 L954.78,76.00 L953.10,76.00 L951.42,76.00 L949.73,76.00 L948.05,76.00 L946.37,76.00 L944.68,76.00 L943.00,76.00 L941.32,76.00 L939.63,76.00 L937.95,76.00 L936.27,76.00 L934.58,76.00 L932.90,76.00 L931.22,76.00 L929.53,76.00 L927.85,76.00 L926.17,76.00 L924.48,76.00 L922.80,76.00 L921.12,76.00 L919.43,76.00 L917.75,76.00 L916.07,76.00 L914.38,76.00 L912.70,76.00 L911.02,76.00 L909.33,76.00 L907.65,76.00 L905.97,76.00 L904.28,76.00 L902.60,76.00 L900.92,76.00 L899.23,76.00 L897.55,76.00 L895.87,76.00 L894.18,76.00 L892.50,76.00 L890.82,76.00 L889.13,76.00 L887.45,76.00 L885.77,76.00 L884.08,76.00 L882.40,76.00 L880.72,76.00 L879.03,76.00 L877.35,76.00 L875.67,76.00 L873.98,76.00 L872.30,76.00 L870.62,76.00 L868.93,76.00 L867.25,76.00 L865.57,76.00 L863.88,76.00 L862.20,76.00 L860.52,76.00 L858.83,76.00 L857.15,76.00 L855.47,76.00 L853.78,76.00 L852.10,76.00 L850.42,76.00 L848.73,76.00 L847.05,76.00 L845.37,76.00 L843.68,76.00 L842.00,76.00 L840.32,76.00 L838.63,76.00 L836.95,76.00 L835.27,76.00 L833.58,76.00 L831.90,76.00 L830.22,76.00 L828.53,76.00 L826.85,76.00 L825.17,76.00 L823.48,76.00 L821.80,76.00 L820.12,76.00 L818.43,76.00 L816.75,76.00 L815.07,76.00 L813.38,76.00 L811.70,76.00 L810.02,76.00 L808.33,76.00 L806.65,76.00 L804.97,76.00 L803.28,76.00 L801.60,76.00 L799.92,76.00 L798.23,76.00 L796.55,76.00 L794.87,76.00 L793.18,76.00 L791.50,76.00 L789.81,76.00 L788.13,76.00 L786.45,76.00 L784.76,76.00 L783.08,76.00 L781.40,76.00 L779.71,76.00 L778.03,76.00 L776.35,76.00 L774.66,76.00 L772.98,76.00 L771.30,76.00 L769.61,76.00 L767.93,76.00 L766.25,76.00 L764.56,76.00 L762.88,76.00 L761.20,76.00 L759.51,76.00 L757.83,76.00 L756.15,76.00 L754.46,76.00 L752.78,76.00 L751.10,76.00 M902.60,613.58 L907.71,611.95 L912.82,610.32 L917.92,608.69 L923.03,607.07 L928.13,605.44 L933.24,603.81 L938.34,602.18 L943.43,600.55 L948.53,598.92 L953.62,597.30 L958.70,595.67 L963.79,594.04 L968.86,592.41 L973.94,590.78 L979.00,589.15 L984.07,587.52 L989.12,585.90 L994.17,584.27 L999.21,582.64 L1004.25,581.01 L1009.27,579.38 L1014.29,577.75 L1019.30,576.12 L1024.30,574.50 L1029.30,572.87 L1034.28,571.24 L1039.25,569.61 L1044.21,567.98 L1049.16,566.35 L1054.10,564.73 L1059.03,563.10 L1063.95,561.47 L1068.85,559.84 L1073.74,558.21 L1078.62,556.58 L1083.49,554.95 L1088.34,553.33 L1093.17,551.70 L1098.00,550.07 L1102.80,548.44 L1107.60,546.81 L1112.37,545.18 L1117.14,543.55 L1121.88,541.93 L1126.61,540.30 L1131.32,538.67 L1136.01,537.04 L1140.69,535.41 L1145.34,533.78 L1149.98,532.15 L1154.60,530.53 L1159.20,528.90 L1163.79,527.27 L1168.35,525.64 L1172.89,524.01 L1177.41,522.38 L1181.91,520.76 L1186.39,519.13 L1190.85,517.50 L1195.28,515.87 L1199.69,514.24 L1204.08,512.61 L1208.45,510.98 L1212.79,509.36 L1217.11,507.73 L1221.41,506.10 L1225.68,504.47 L1229.93,502.84 L1234.15,501.21 L1238.35,499.59 L1242.52,497.96 L1246.67,496.33 L1250.79,494.70 L1254.88,493.07 L1258.94,491.44 L1262.98,489.81 L1267.00,488.19 L1270.98,486.56 L1274.93,484.93 L1278.86,483.30 L1282.76,481.67 L1286.63,480.04 L1290.47,478.41 L1294.28,476.79 L1298.06,475.16 L1301.81,473.53 L1305.54,471.90 L1309.23,470.27 L1312.88,468.64 L1316.51,467.01 L1320.11,465.39 L1323.67,463.76 L1327.21,462.13 L1330.71,460.50 L1334.17,458.87 L1337.61,457.24 L1341.01,455.62 L1344.38,453.99 L1347.71,452.36 L1351.01,450.73 L1354.28,449.10 L1357.51,447.47 L1360.71,445.84 L1363.87,444.22 L1367.00,442.59 L1370.09,440.96 L1373.15,439.33 L1376.17,437.70 L1379.15,436.07 L1382.10,434.44 L1385.01,432.82 L1387.89,431.19 L1390.72,429.56 L1393.52,427.93 L1396.29,426.30 L1399.01,424.67 L1401.70,423.05 L1404.35,421.42 L1406.96,419.79 L1409.54,418.16 L1412.07,416.53 L1414.57,414.90 L1417.02,413.27 L1419.44,411.65 L1421.82,410.02 L1424.16,408.39 L1426.46,406.76 L1428.72,405.13 L1430.94,403.50 L1433.12,401.88 L1435.25,400.25 L1437.35,398.62 L1439.41,396.99 L1441.43,395.36 L1443.40,393.73 L1445.34,392.10 L1447.23,390.48 L1449.08,388.85 L1450.89,387.22 L1452.66,385.59 L1454.38,383.96 L1456.07,382.33 L1457.71,380.70 L1459.31,379.08 L1460.87,377.45 L1462.38,375.82 L1463.85,374.19 L1465.28,372.56 L1466.67,370.93 L1468.01,369.31 L1469.31,367.68 L1470.57,366.05 L1471.79,364.42 L1472.96,362.79 L1474.08,361.16 L1475.17,359.53 L1476.21,357.91 L1477.21,356.28 L1478.16,354.65 L1479.07,353.02 L1479.93,351.39 L1480.75,349.76 L1481.53,348.13 L1482.26,346.51 L1482.95,344.88 L1483.60,343.25 L1484.20,341.62 L1484.75,339.99 L1485.27,338.36 L1485.73,336.74 L1486.16,335.11 L1486.53,333.48 L1486.87,331.85 L1487.16,330.22 L1487.40,328.59 L1487.60,326.96 L1487.76,325.34 L1487.87,323.71 L1487.94,322.08 L1487.96,320.45 L1487.94,318.82 L1487.87,317.19 L1487.76,315.56 L1487.60,313.94 L1487.40,312.31 L1487.16,310.68 L1486.87,309.05 L1486.53,307.42 L1486.16,305.79 L1485.73,304.16 L1485.27,302.54 L1484.75,300.91 L1484.20,299.28 L1483.60,297.65 L1482.95,296.02 L1482.26,294.39 L1481.53,292.77 L1480.75,291.14 L1479.93,289.51 L1479.07,287.88 L1478.16,286.25 L1477.21,284.62 L1476.21,282.99 L1475.17,281.37 L1474.08,279.74 L1472.96,278.11 L1471.79,276.48 L1470.57,274.85 L1469.31,273.22 L1468.01,271.59 L1466.67,269.97 L1465.28,268.34 L1463.85,266.71 L1462.38,265.08 L1460.87,263.45 L1459.31,261.82 L1457.71,260.20 L1456.07,258.57 L1454.38,256.94 L1452.66,255.31 L1450.89,253.68 L1449.08,252.05 L1447.23,250.42 L1445.34,248.80 L1443.40,247.17 L1441.43,245.54 L1439.41,243.91 L1437.35,242.28 L1435.25,240.65 L1433.12,239.02 L1430.94,237.40 L1428.72,235.77 L1426.46,234.14 L1424.16,232.51 L1421.82,230.88 L1419.44,229.25 L1417.02,227.63 L1414.57,226.00 L1412.07,224.37 L1409.54,222.74 L1406.96,221.11 L1404.35,219.48 L1401.70,217.85 L1399.01,216.23 L1396.29,214.60 L1393.52,212.97 L1390.72,211.34 L1387.89,209.71 L1385.01,208.08 L1382.10,206.45 L1379.15,204.83 L1376.17,203.20 L1373.15,201.57 L1370.09,199.94 L1367.00,198.31 L1363.87,196.68 L1360.71,195.06 L1357.51,193.43 L1354.28,191.80 L1351.01,190.17 L1347.71,188.54 L1344.38,186.91 L1341.01,185.28 L1337.61,183.66 L1334.17,182.03 L1330.71,180.40 L1327.21,178.77 L1323.67,177.14 L1320.11,175.51 L1316.51,173.88 L1312.88,172.26 L1309.23,170.63 L1305.54,169.00 L1301.81,167.37 L1298.06,165.74 L1294.28,164.11 L1290.47,162.49 L1286.63,160.86 L1282.76,159.23 L1278.86,157.60 L1274.93,155.97 L1270.98,154.34 L1267.00,152.71 L1262.98,151.09 L1258.94,149.46 L1254.88,147.83 L1250.79,146.20 L1246.67,144.57 L1242.52,142.94 L1238.35,141.31 L1234.15,139.69 L1229.93,138.06 L1225.68,136.43 L1221.41,134.80 L1217.11,133.17 L1212.79,131.54 L1208.45,129.92 L1204.08,128.29 L1199.69,126.66 L1195.28,125.03 L1190.85,123.40 L1186.39,121.77 L1181.91,120.14 L1177.41,118.52 L1172.89,116.89 L1168.35,115.26 L1163.79,113.63 L1159.20,112.00 L1154.60,110.37 L1149.98,108.74 L1145.34,107.12 L1140.69,105.49 L1136.01,103.86 L1131.32,102.23 L1126.61,100.60 L1121.88,98.97 L1117.14,97.35 L1112.37,95.72 L1107.60,94.09 L1102.80,92.46 L1098.00,90.83 L1093.17,89.20 L1088.34,87.57 L1083.49,85.95 L1078.62,84.32 L1073.74,82.69 L1068.85,81.06 L1063.95,79.43 L1059.03,77.80 L1054.10,76.17 L1049.16,74.55 L1044.21,72.92 L1039.25,71.29 L1034.28,69.66 L1029.30,68.03 L1024.30,66.40 L1019.30,64.78 L1014.29,63.15 L1009.27,61.52 L1004.25,59.89 L999.21,58.26 L994.17,56.63 L989.12,55.00 L984.07,53.38 L979.00,51.75 L973.94,50.12 L968.86,48.49 L963.79,46.86 L958.70,45.23 L953.62,43.60 L948.53,41.98 L943.43,40.35 L938.34,38.72 L933.24,37.09 L928.13,35.46 L923.03,33.83 L917.92,32.21 L912.82,30.58 L907.71,28.95 L902.60,27.32 M902.60,613.58 L907.28,611.95 L911.96,610.32 L916.65,608.69 L921.33,607.07 L926.01,605.44 L930.68,603.81 L935.36,602.18 L940.03,600.55 L944.70,598.92 L949.37,597.30 L954.03,595.67 L958.69,594.04 L963.34,592.41 L967.99,590.78 L972.64,589.15 L977.28,587.52 L981.91,585.90 L986.54,584.27 L991.16,582.64 L995.78,581.01 L1000.38,579.38 L1004.98,577.75 L1009.58,576.12 L1014.16,574.50 L1018.74,572.87 L1023.30,571.24 L1027.86,569.61 L1032.41,567.98 L1036.95,566.35 L1041.48,564.73 L1045.99,563.10 L1050.50,561.47 L1055.00,559.84 L1059.48,558.21 L1063.95,556.58 L1068.41,554.95 L1072.86,553.33 L1077.29,551.70 L1081.71,550.07 L1086.12,548.44 L1090.51,546.81 L1094.89,545.18 L1099.26,543.55 L1103.61,541.93 L1107.94,540.30 L1112.26,538.67 L1116.56,537.04 L1120.85,535.41 L1125.12,533.78 L1129.37,532.15 L1133.60,530.53 L1137.82,528.90 L1142.02,527.27 L1146.20,525.64 L1150.37,524.01 L1154.51,522.38 L1158.63,520.76 L1162.74,519.13 L1166.82,517.50 L1170.89,515.87 L1174.93,514.24 L1178.96,512.61 L1182.96,510.98 L1186.94,509.36 L1190.90,507.73 L1194.84,506.10 L1198.76,504.47 L1202.65,502.84 L1206.52,501.21 L1210.37,499.59 L1214.19,497.96 L1217.99,496.33 L1221.77,494.70 L1225.52,493.07 L1229.25,491.44 L1232.95,489.81 L1236.63,488.19 L1240.28,486.56 L1243.91,484.93 L1247.51,483.30 L1251.08,481.67 L1254.63,480.04 L1258.15,478.41 L1261.64,476.79 L1265.11,475.16 L1268.55,473.53 L1271.96,471.90 L1275.34,470.27 L1278.69,468.64 L1282.02,467.01 L1285.32,465.39 L1288.58,463.76 L1291.82,462.13 L1295.03,460.50 L1298.21,458.87 L1301.36,457.24 L1304.47,455.62 L1307.56,453.99 L1310.62,452.36 L1313.64,450.73 L1316.64,449.10 L1319.60,447.47 L1322.53,445.84 L1325.43,444.22 L1328.30,442.59 L1331.13,440.96 L1333.93,439.33 L1336.70,437.70 L1339.44,436.07 L1342.14,434.44 L1344.81,432.82 L1347.44,431.19 L1350.05,429.56 L1352.61,427.93 L1355.15,426.30 L1357.65,424.67 L1360.11,423.05 L1362.54,421.42 L1364.93,419.79 L1367.29,418.16 L1369.62,416.53 L1371.90,414.90 L1374.16,413.27 L1376.37,411.65 L1378.55,410.02 L1380.70,408.39 L1382.80,406.76 L1384.87,405.13 L1386.91,403.50 L1388.91,401.88 L1390.87,400.25 L1392.79,398.62 L1394.68,396.99 L1396.52,395.36 L1398.34,393.73 L1400.11,392.10 L1401.84,390.48 L1403.54,388.85 L1405.20,387.22 L1406.82,385.59 L1408.40,383.96 L1409.95,382.33 L1411.45,380.70 L1412.92,379.08 L1414.35,377.45 L1415.73,375.82 L1417.08,374.19 L1418.39,372.56 L1419.66,370.93 L1420.90,369.31 L1422.09,367.68 L1423.24,366.05 L1424.35,364.42 L1425.43,362.79 L1426.46,361.16 L1427.45,359.53 L1428.41,357.91 L1429.32,356.28 L1430.19,354.65 L1431.03,353.02 L1431.82,351.39 L1432.57,349.76 L1433.29,348.13 L1433.96,346.51 L1434.59,344.88 L1435.18,343.25 L1435.73,341.62 L1436.24,339.99 L1436.71,338.36 L1437.14,336.74 L1437.53,335.11 L1437.87,333.48 L1438.18,331.85 L1438.44,330.22 L1438.67,328.59 L1438.85,326.96 L1439.00,325.34 L1439.10,323.71 L1439.16,322.08 L1439.18,320.45 L1439.16,318.82 L1439.10,317.19 L1439.00,315.56 L1438.85,313.94 L1438.67,312.31 L1438.44,310.68 L1438.18,309.05 L1437.87,307.42 L1437.53,305.79 L1437.14,304.16 L1436.71,302.54 L1436.24,300.91 L1435.73,299.28 L1435.18,297.65 L1434.59,296.02 L1433.96,294.39 L1433.29,292.77 L1432.57,291.14 L1431.82,289.51 L1431.03,287.88 L1430.19,286.25 L1429.32,284.62 L1428.41,282.99 L1427.45,281.37 L1426.46,279.74 L1425.43,278.11 L1424.35,276.48 L1423.24,274.85 L1422.09,273.22 L1420.90,271.59 L1419.66,269.97 L1418.39,268.34 L1417.08,266.71 L1415.73,265.08 L1414.35,263.45 L1412.92,261.82 L1411.45,260.20 L1409.95,258.57 L1408.40,256.94 L1406.82,255.31 L1405.20,253.68 L1403.54,252.05 L1401.84,250.42 L1400.11,248.80 L1398.34,247.17 L1396.52,245.54 L1394.68,243.91 L1392.79,242.28 L1390.87,240.65 L1388.91,239.02 L1386.91,237.40 L1384.87,235.77 L1382.80,234.14 L1380.70,232.51 L1378.55,230.88 L1376.37,229.25 L1374.16,227.63 L1371.90,226.00 L1369.62,224.37 L1367.29,222.74 L1364.93,221.11 L1362.54,219.48 L1360.11,217.85 L1357.65,216.23 L1355.15,214.60 L1352.61,212.97 L1350.05,211.34 L1347.44,209.71 L1344.81,208.08 L1342.14,206.45 L1339.44,204.83 L1336.70,203.20 L1333.93,201.57 L1331.13,199.94 L1328.30,198.31 L1325.43,196.68 L1322.53,195.06 L1319.60,193.43 L1316.64,191.80 L1313.64,190.17 L1310.62,188.54 L1307.56,186.91 L1304.47,185.28 L1301.36,183.66 L1298.21,182.03 L1295.03,180.40 L1291.82,178.77 L1288.58,177.14 L1285.32,175.51 L1282.02,173.88 L1278.69,172.26 L1275.34,170.63 L1271.96,169.00 L1268.55,167.37 L1265.11,165.74 L1261.64,164.11 L1258.15,162.49 L1254.63,160.86 L1251.08,159.23 L1247.51,157.60 L1243.91,155.97 L1240.28,154.34 L1236.63,152.71 L1232.95,151.09 L1229.25,149.46 L1225.52,147.83 L1221.77,146.20 L1217.99,144.57 L1214.19,142.94 L1210.37,141.31 L1206.52,139.69 L1202.65,138.06 L1198.76,136.43 L1194.84,134.80 L1190.90,133.17 L1186.94,131.54 L1182.96,129.92 L1178.96,128.29 L1174.93,126.66 L1170.89,125.03 L1166.82,123.40 L1162.74,121.77 L1158.63,120.14 L1154.51,118.52 L1150.37,116.89 L1146.20,115.26 L1142.02,113.63 L1137.82,112.00 L1133.60,110.37 L1129.37,108.74 L1125.12,107.12 L1120.85,105.49 L1116.56,103.86 L1112.26,102.23 L1107.94,100.60 L1103.61,98.97 L1099.26,97.35 L1094.89,95.72 L1090.51,94.09 L1086.12,92.46 L1081.71,90.83 L1077.29,89.20 L1072.86,87.57 L1068.41,85.95 L1063.95,84.32 L1059.48,82.69 L1055.00,81.06 L1050.50,79.43 L1045.99,77.80 L1041.48,76.17 L1036.95,74.55 L1032.41,72.92 L1027.86,71.29 L1023.30,69.66 L1018.74,68.03 L1014.16,66.40 L1009.58,64.78 L1004.98,63.15 L1000.38,61.52 L995.78,59.89 L991.16,58.26 L986.54,56.63 L981.91,55.00 L977.28,53.38 L972.64,51.75 L967.99,50.12 L963.34,48.49 L958.69,46.86 L954.03,45.23 L949.37,43.60 L944.70,41.98 L940.03,40.35 L935.36,38.72 L930.68,37.09 L926.01,35.46 L921.33,33.83 L916.65,32.21 L911.96,30.58 L907.28,28.95 L902.60,27.32 M902.60,613.58 L906.86,611.95 L911.11,610.32 L915.37,608.69 L919.62,607.07 L923.88,605.44 L928.13,603.81 L932.38,602.18 L936.63,600.55 L940.87,598.92 L945.11,597.30 L949.35,595.67 L953.59,594.04 L957.82,592.41 L962.05,590.78 L966.27,589.15 L970.49,587.52 L974.70,585.90 L978.91,584.27 L983.11,582.64 L987.31,581.01 L991.49,579.38 L995.68,577.75 L999.85,576.12 L1004.02,574.50 L1008.18,572.87 L1012.33,571.24 L1016.47,569.61 L1020.61,567.98 L1024.74,566.35 L1028.85,564.73 L1032.96,563.10 L1037.06,561.47 L1041.14,559.84 L1045.22,558.21 L1049.28,556.58 L1053.34,554.95 L1057.38,553.33 L1061.41,551.70 L1065.43,550.07 L1069.44,548.44 L1073.43,546.81 L1077.41,545.18 L1081.38,543.55 L1085.33,541.93 L1089.27,540.30 L1093.20,538.67 L1097.11,537.04 L1101.01,535.41 L1104.89,533.78 L1108.75,532.15 L1112.60,530.53 L1116.44,528.90 L1120.26,527.27 L1124.06,525.64 L1127.84,524.01 L1131.61,522.38 L1135.36,520.76 L1139.09,519.13 L1142.80,517.50 L1146.50,515.87 L1150.18,514.24 L1153.84,512.61 L1157.47,510.98 L1161.09,509.36 L1164.69,507.73 L1168.27,506.10 L1171.83,504.47 L1175.37,502.84 L1178.89,501.21 L1182.39,499.59 L1185.87,497.96 L1189.32,496.33 L1192.75,494.70 L1196.17,493.07 L1199.55,491.44 L1202.92,489.81 L1206.26,488.19 L1209.58,486.56 L1212.88,484.93 L1216.15,483.30 L1219.40,481.67 L1222.63,480.04 L1225.83,478.41 L1229.00,476.79 L1232.15,475.16 L1235.28,473.53 L1238.38,471.90 L1241.45,470.27 L1244.50,468.64 L1247.53,467.01 L1250.52,465.39 L1253.49,463.76 L1256.44,462.13 L1259.35,460.50 L1262.24,458.87 L1265.11,457.24 L1267.94,455.62 L1270.75,453.99 L1273.53,452.36 L1276.28,450.73 L1279.00,449.10 L1281.69,447.47 L1284.36,445.84 L1286.99,444.22 L1289.60,442.59 L1292.17,440.96 L1294.72,439.33 L1297.24,437.70 L1299.73,436.07 L1302.18,434.44 L1304.61,432.82 L1307.00,431.19 L1309.37,429.56 L1311.70,427.93 L1314.01,426.30 L1316.28,424.67 L1318.52,423.05 L1320.73,421.42 L1322.90,419.79 L1325.05,418.16 L1327.16,416.53 L1329.24,414.90 L1331.29,413.27 L1333.30,411.65 L1335.28,410.02 L1337.23,408.39 L1339.15,406.76 L1341.03,405.13 L1342.88,403.50 L1344.70,401.88 L1346.48,400.25 L1348.23,398.62 L1349.94,396.99 L1351.62,395.36 L1353.27,393.73 L1354.88,392.10 L1356.46,390.48 L1358.00,388.85 L1359.51,387.22 L1360.98,385.59 L1362.42,383.96 L1363.82,382.33 L1365.19,380.70 L1366.53,379.08 L1367.82,377.45 L1369.09,375.82 L1370.31,374.19 L1371.50,372.56 L1372.66,370.93 L1373.78,369.31 L1374.86,367.68 L1375.91,366.05 L1376.92,364.42 L1377.90,362.79 L1378.84,361.16 L1379.74,359.53 L1380.61,357.91 L1381.44,356.28 L1382.23,354.65 L1382.99,353.02 L1383.71,351.39 L1384.39,349.76 L1385.04,348.13 L1385.65,346.51 L1386.23,344.88 L1386.76,343.25 L1387.26,341.62 L1387.73,339.99 L1388.15,338.36 L1388.54,336.74 L1388.90,335.11 L1389.21,333.48 L1389.49,331.85 L1389.73,330.22 L1389.94,328.59 L1390.10,326.96 L1390.23,325.34 L1390.33,323.71 L1390.38,322.08 L1390.40,320.45 L1390.38,318.82 L1390.33,317.19 L1390.23,315.56 L1390.10,313.94 L1389.94,312.31 L1389.73,310.68 L1389.49,309.05 L1389.21,307.42 L1388.90,305.79 L1388.54,304.16 L1388.15,302.54 L1387.73,300.91 L1387.26,299.28 L1386.76,297.65 L1386.23,296.02 L1385.65,294.39 L1385.04,292.77 L1384.39,291.14 L1383.71,289.51 L1382.99,287.88 L1382.23,286.25 L1381.44,284.62 L1380.61,282.99 L1379.74,281.37 L1378.84,279.74 L1377.90,278.11 L1376.92,276.48 L1375.91,274.85 L1374.86,273.22 L1373.78,271.59 L1372.66,269.97 L1371.50,268.34 L1370.31,266.71 L1369.09,265.08 L1367.82,263.45 L1366.53,261.82 L1365.19,260.20 L1363.82,258.57 L1362.42,256.94 L1360.98,255.31 L1359.51,253.68 L1358.00,252.05 L1356.46,250.42 L1354.88,248.80 L1353.27,247.17 L1351.62,245.54 L1349.94,243.91 L1348.23,242.28 L1346.48,240.65 L1344.70,239.02 L1342.88,237.40 L1341.03,235.77 L1339.15,234.14 L1337.23,232.51 L1335.28,230.88 L1333.30,229.25 L1331.29,227.63 L1329.24,226.00 L1327.16,224.37 L1325.05,222.74 L1322.90,221.11 L1320.73,219.48 L1318.52,217.85 L1316.28,216.23 L1314.01,214.60 L1311.70,212.97 L1309.37,211.34 L1307.00,209.71 L1304.61,208.08 L1302.18,206.45 L1299.73,204.83 L1297.24,203.20 L1294.72,201.57 L1292.17,199.94 L1289.60,198.31 L1286.99,196.68 L1284.36,195.06 L1281.69,193.43 L1279.00,191.80 L1276.28,190.17 L1273.53,188.54 L1270.75,186.91 L1267.94,185.28 L1265.11,183.66 L1262.24,182.03 L1259.35,180.40 L1256.44,178.77 L1253.49,177.14 L1250.52,175.51 L1247.53,173.88 L1244.50,172.26 L1241.45,170.63 L1238.38,169.00 L1235.28,167.37 L1232.15,165.74 L1229.00,164.11 L1225.83,162.49 L1222.63,160.86 L1219.40,159.23 L1216.15,157.60 L1212.88,155.97 L1209.58,154.34 L1206.26,152.71 L1202.92,151.09 L1199.55,149.46 L1196.17,147.83 L1192.75,146.20 L1189.32,144.57 L1185.87,142.94 L1182.39,141.31 L1178.89,139.69 L1175.37,138.06 L1171.83,136.43 L1168.27,134.80 L1164.69,133.17 L1161.09,131.54 L1157.47,129.92 L1153.84,128.29 L1150.18,126.66 L1146.50,125.03 L1142.80,123.40 L1139.09,121.77 L1135.36,120.14 L1131.61,118.52 L1127.84,116.89 L1124.06,115.26 L1120.26,113.63 L1116.44,112.00 L1112.60,110.37 L1108.75,108.74 L1104.89,107.12 L1101.01,105.49 L1097.11,103.86 L1093.20,102.23 L1089.27,100.60 L1085.33,98.97 L1081.38,97.35 L1077.41,95.72 L1073.43,94.09 L1069.44,92.46 L1065.43,90.83 L1061.41,89.20 L1057.38,87.57 L1053.34,85.95 L1049.28,84.32 L1045.22,82.69 L1041.14,81.06 L1037.06,79.43 L1032.96,77.80 L1028.85,76.17 L1024.74,74.55 L1020.61,72.92 L1016.47,71.29 L1012.33,69.66 L1008.18,68.03 L1004.02,66.40 L999.85,64.78 L995.68,63.15 L991.49,61.52 L987.31,59.89 L983.11,58.26 L978.91,56.63 L974.70,55.00 L970.49,53.38 L966.27,51.75 L962.05,50.12 L957.82,48.49 L953.59,46.86 L949.35,45.23 L945.11,43.60 L940.87,41.98 L936.63,40.35 L932.38,38.72 L928.13,37.09 L923.88,35.46 L919.62,33.83 L915.37,32.21 L911.11,30.58 L906.86,28.95 L902.60,27.32 M902.60,613.58 L906.43,611.95 L910.26,610.32 L914.09,608.69 L917.92,607.07 L921.75,605.44 L925.58,603.81 L929.40,602.18 L933.22,600.55 L937.05,598.92 L940.86,597.30 L944.68,595.67 L948.49,594.04 L952.30,592.41 L956.10,590.78 L959.90,589.15 L963.70,587.52 L967.49,585.90 L971.28,584.27 L975.06,582.64 L978.84,581.01 L982.61,579.38 L986.37,577.75 L990.13,576.12 L993.88,574.50 L997.62,572.87 L1001.36,571.24 L1005.09,569.61 L1008.81,567.98 L1012.52,566.35 L1016.23,564.73 L1019.92,563.10 L1023.61,561.47 L1027.29,559.84 L1030.96,558.21 L1034.62,556.58 L1038.26,554.95 L1041.90,553.33 L1045.53,551.70 L1049.15,550.07 L1052.75,548.44 L1056.35,546.81 L1059.93,545.18 L1063.50,543.55 L1067.06,541.93 L1070.61,540.30 L1074.14,538.67 L1077.66,537.04 L1081.17,535.41 L1084.66,533.78 L1088.14,532.15 L1091.60,530.53 L1095.05,528.90 L1098.49,527.27 L1101.91,525.64 L1105.32,524.01 L1108.71,522.38 L1112.08,520.76 L1115.44,519.13 L1118.78,517.50 L1122.11,515.87 L1125.42,514.24 L1128.71,512.61 L1131.99,510.98 L1135.25,509.36 L1138.49,507.73 L1141.71,506.10 L1144.91,504.47 L1148.10,502.84 L1151.26,501.21 L1154.41,499.59 L1157.54,497.96 L1160.65,496.33 L1163.74,494.70 L1166.81,493.07 L1169.86,491.44 L1172.89,489.81 L1175.90,488.19 L1178.88,486.56 L1181.85,484.93 L1184.80,483.30 L1187.72,481.67 L1190.62,480.04 L1193.50,478.41 L1196.36,476.79 L1199.20,475.16 L1202.01,473.53 L1204.80,471.90 L1207.57,470.27 L1210.31,468.64 L1213.03,467.01 L1215.73,465.39 L1218.40,463.76 L1221.05,462.13 L1223.68,460.50 L1226.28,458.87 L1228.86,457.24 L1231.41,455.62 L1233.93,453.99 L1236.43,452.36 L1238.91,450.73 L1241.36,449.10 L1243.78,447.47 L1246.18,445.84 L1248.55,444.22 L1250.90,442.59 L1253.22,440.96 L1255.51,439.33 L1257.77,437.70 L1260.01,436.07 L1262.22,434.44 L1264.41,432.82 L1266.56,431.19 L1268.69,429.56 L1270.79,427.93 L1272.87,426.30 L1274.91,424.67 L1276.93,423.05 L1278.91,421.42 L1280.87,419.79 L1282.80,418.16 L1284.70,416.53 L1286.58,414.90 L1288.42,413.27 L1290.23,411.65 L1292.02,410.02 L1293.77,408.39 L1295.49,406.76 L1297.19,405.13 L1298.85,403.50 L1300.49,401.88 L1302.09,400.25 L1303.66,398.62 L1305.21,396.99 L1306.72,395.36 L1308.20,393.73 L1309.65,392.10 L1311.07,390.48 L1312.46,388.85 L1313.82,387.22 L1315.14,385.59 L1316.44,383.96 L1317.70,382.33 L1318.93,380.70 L1320.13,379.08 L1321.30,377.45 L1322.44,375.82 L1323.54,374.19 L1324.61,372.56 L1325.65,370.93 L1326.66,369.31 L1327.64,367.68 L1328.58,366.05 L1329.49,364.42 L1330.37,362.79 L1331.21,361.16 L1332.03,359.53 L1332.81,357.91 L1333.55,356.28 L1334.27,354.65 L1334.95,353.02 L1335.60,351.39 L1336.21,349.76 L1336.80,348.13 L1337.35,346.51 L1337.86,344.88 L1338.35,343.25 L1338.80,341.62 L1339.22,339.99 L1339.60,338.36 L1339.95,336.74 L1340.27,335.11 L1340.55,333.48 L1340.80,331.85 L1341.02,330.22 L1341.20,328.59 L1341.35,326.96 L1341.47,325.34 L1341.55,323.71 L1341.60,322.08 L1341.62,320.45 L1341.60,318.82 L1341.55,317.19 L1341.47,315.56 L1341.35,313.94 L1341.20,312.31 L1341.02,310.68 L1340.80,309.05 L1340.55,307.42 L1340.27,305.79 L1339.95,304.16 L1339.60,302.54 L1339.22,300.91 L1338.80,299.28 L1338.35,297.65 L1337.86,296.02 L1337.35,294.39 L1336.80,292.77 L1336.21,291.14 L1335.60,289.51 L1334.95,287.88 L1334.27,286.25 L1333.55,284.62 L1332.81,282.99 L1332.03,281.37 L1331.21,279.74 L1330.37,278.11 L1329.49,276.48 L1328.58,274.85 L1327.64,273.22 L1326.66,271.59 L1325.65,269.97 L1324.61,268.34 L1323.54,266.71 L1322.44,265.08 L1321.30,263.45 L1320.13,261.82 L1318.93,260.20 L1317.70,258.57 L1316.44,256.94 L1315.14,255.31 L1313.82,253.68 L1312.46,252.05 L1311.07,250.42 L1309.65,248.80 L1308.20,247.17 L1306.72,245.54 L1305.21,243.91 L1303.66,242.28 L1302.09,240.65 L1300.49,239.02 L1298.85,237.40 L1297.19,235.77 L1295.49,234.14 L1293.77,232.51 L1292.02,230.88 L1290.23,229.25 L1288.42,227.63 L1286.58,226.00 L1284.70,224.37 L1282.80,222.74 L1280.87,221.11 L1278.91,219.48 L1276.93,217.85 L1274.91,216.23 L1272.87,214.60 L1270.79,212.97 L1268.69,211.34 L1266.56,209.71 L1264.41,208.08 L1262.22,206.45 L1260.01,204.83 L1257.77,203.20 L1255.51,201.57 L1253.22,199.94 L1250.90,198.31 L1248.55,196.68 L1246.18,195.06 L1243.78,193.43 L1241.36,191.80 L1238.91,190.17 L1236.43,188.54 L1233.93,186.91 L1231.41,185.28 L1228.86,183.66 L1226.28,182.03 L1223.68,180.40 L1221.05,178.77 L1218.40,177.14 L1215.73,175.51 L1213.03,173.88 L1210.31,172.26 L1207.57,170.63 L1204.80,169.00 L1202.01,167.37 L1199.20,165.74 L1196.36,164.11 L1193.50,162.49 L1190.62,160.86 L1187.72,159.23 L1184.80,157.60 L1181.85,155.97 L1178.88,154.34 L1175.90,152.71 L1172.89,151.09 L1169.86,149.46 L1166.81,147.83 L1163.74,146.20 L1160.65,144.57 L1157.54,142.94 L1154.41,141.31 L1151.26,139.69 L1148.10,138.06 L1144.91,136.43 L1141.71,134.80 L1138.49,133.17 L1135.25,131.54 L1131.99,129.92 L1128.71,128.29 L1125.42,126.66 L1122.11,125.03 L1118.78,123.40 L1115.44,121.77 L1112.08,120.14 L1108.71,118.52 L1105.32,116.89 L1101.91,115.26 L1098.49,113.63 L1095.05,112.00 L1091.60,110.37 L1088.14,108.74 L1084.66,107.12 L1081.17,105.49 L1077.66,103.86 L1074.14,102.23 L1070.61,100.60 L1067.06,98.97 L1063.50,97.35 L1059.93,95.72 L1056.35,94.09 L1052.75,92.46 L1049.15,90.83 L1045.53,89.20 L1041.90,87.57 L1038.26,85.95 L1034.62,84.32 L1030.96,82.69 L1027.29,81.06 L1023.61,79.43 L1019.92,77.80 L1016.23,76.17 L1012.52,74.55 L1008.81,72.92 L1005.09,71.29 L1001.36,69.66 L997.62,68.03 L993.88,66.40 L990.13,64.78 L986.37,63.15 L982.61,61.52 L978.84,59.89 L975.06,58.26 L971.28,56.63 L967.49,55.00 L963.70,53.38 L959.90,51.75 L956.10,50.12 L952.30,48.49 L948.49,46.86 L944.68,45.23 L940.86,43.60 L937.05,41.98 L933.22,40.35 L929.40,38.72 L925.58,37.09 L921.75,35.46 L917.92,33.83 L914.09,32.21 L910.26,30.58 L906.43,28.95 L902.60,27.32 M902.60,613.58 L906.01,611.95 L909.41,610.32 L912.82,608.69 L916.22,607.07 L919.62,605.44 L923.02,603.81 L926.42,602.18 L929.82,600.55 L933.22,598.92 L936.61,597.30 L940.00,595.67 L943.39,594.04 L946.78,592.41 L950.16,590.78 L953.54,589.15 L956.91,587.52 L960.28,585.90 L963.65,584.27 L967.01,582.64 L970.36,581.01 L973.72,579.38 L977.06,577.75 L980.40,576.12 L983.74,574.50 L987.06,572.87 L990.38,571.24 L993.70,569.61 L997.01,567.98 L1000.31,566.35 L1003.60,564.73 L1006.89,563.10 L1010.16,561.47 L1013.43,559.84 L1016.70,558.21 L1019.95,556.58 L1023.19,554.95 L1026.42,553.33 L1029.65,551.70 L1032.86,550.07 L1036.07,548.44 L1039.26,546.81 L1042.45,545.18 L1045.62,543.55 L1048.79,541.93 L1051.94,540.30 L1055.08,538.67 L1058.21,537.04 L1061.32,535.41 L1064.43,533.78 L1067.52,532.15 L1070.60,530.53 L1073.67,528.90 L1076.72,527.27 L1079.77,525.64 L1082.79,524.01 L1085.81,522.38 L1088.81,520.76 L1091.79,519.13 L1094.76,517.50 L1097.72,515.87 L1100.66,514.24 L1103.59,512.61 L1106.50,510.98 L1109.40,509.36 L1112.28,507.73 L1115.14,506.10 L1117.99,504.47 L1120.82,502.84 L1123.63,501.21 L1126.43,499.59 L1129.21,497.96 L1131.98,496.33 L1134.72,494.70 L1137.45,493.07 L1140.16,491.44 L1142.86,489.81 L1145.53,488.19 L1148.19,486.56 L1150.82,484.93 L1153.44,483.30 L1156.04,481.67 L1158.62,480.04 L1161.18,478.41 L1163.72,476.79 L1166.24,475.16 L1168.74,473.53 L1171.22,471.90 L1173.68,470.27 L1176.12,468.64 L1178.54,467.01 L1180.94,465.39 L1183.32,463.76 L1185.67,462.13 L1188.00,460.50 L1190.32,458.87 L1192.60,457.24 L1194.87,455.62 L1197.12,453.99 L1199.34,452.36 L1201.54,450.73 L1203.72,449.10 L1205.87,447.47 L1208.01,445.84 L1210.11,444.22 L1212.20,442.59 L1214.26,440.96 L1216.30,439.33 L1218.31,437.70 L1220.30,436.07 L1222.27,434.44 L1224.21,432.82 L1226.12,431.19 L1228.02,429.56 L1229.88,427.93 L1231.73,426.30 L1233.54,424.67 L1235.33,423.05 L1237.10,421.42 L1238.84,419.79 L1240.56,418.16 L1242.25,416.53 L1243.91,414.90 L1245.55,413.27 L1247.16,411.65 L1248.75,410.02 L1250.31,408.39 L1251.84,406.76 L1253.35,405.13 L1254.82,403.50 L1256.28,401.88 L1257.70,400.25 L1259.10,398.62 L1260.47,396.99 L1261.82,395.36 L1263.13,393.73 L1264.42,392.10 L1265.69,390.48 L1266.92,388.85 L1268.13,387.22 L1269.31,385.59 L1270.46,383.96 L1271.58,382.33 L1272.67,380.70 L1273.74,379.08 L1274.78,377.45 L1275.79,375.82 L1276.77,374.19 L1277.72,372.56 L1278.65,370.93 L1279.54,369.31 L1280.41,367.68 L1281.25,366.05 L1282.06,364.42 L1282.84,362.79 L1283.59,361.16 L1284.31,359.53 L1285.01,357.91 L1285.67,356.28 L1286.31,354.65 L1286.91,353.02 L1287.49,351.39 L1288.04,349.76 L1288.55,348.13 L1289.04,346.51 L1289.50,344.88 L1289.93,343.25 L1290.33,341.62 L1290.70,339.99 L1291.04,338.36 L1291.36,336.74 L1291.64,335.11 L1291.89,333.48 L1292.11,331.85 L1292.31,330.22 L1292.47,328.59 L1292.60,326.96 L1292.71,325.34 L1292.78,323.71 L1292.83,322.08 L1292.84,320.45 L1292.83,318.82 L1292.78,317.19 L1292.71,315.56 L1292.60,313.94 L1292.47,312.31 L1292.31,310.68 L1292.11,309.05 L1291.89,307.42 L1291.64,305.79 L1291.36,304.16 L1291.04,302.54 L1290.70,300.91 L1290.33,299.28 L1289.93,297.65 L1289.50,296.02 L1289.04,294.39 L1288.55,292.77 L1288.04,291.14 L1287.49,289.51 L1286.91,287.88 L1286.31,286.25 L1285.67,284.62 L1285.01,282.99 L1284.31,281.37 L1283.59,279.74 L1282.84,278.11 L1282.06,276.48 L1281.25,274.85 L1280.41,273.22 L1279.54,271.59 L1278.65,269.97 L1277.72,268.34 L1276.77,266.71 L1275.79,265.08 L1274.78,263.45 L1273.74,261.82 L1272.67,260.20 L1271.58,258.57 L1270.46,256.94 L1269.31,255.31 L1268.13,253.68 L1266.92,252.05 L1265.69,250.42 L1264.42,248.80 L1263.13,247.17 L1261.82,245.54 L1260.47,243.91 L1259.10,242.28 L1257.70,240.65 L1256.28,239.02 L1254.82,237.40 L1253.35,235.77 L1251.84,234.14 L1250.31,232.51 L1248.75,230.88 L1247.16,229.25 L1245.55,227.63 L1243.91,226.00 L1242.25,224.37 L1240.56,222.74 L1238.84,221.11 L1237.10,219.48 L1235.33,217.85 L1233.54,216.23 L1231.73,214.60 L1229.88,212.97 L1228.02,211.34 L1226.12,209.71 L1224.21,208.08 L1222.27,206.45 L1220.30,204.83 L1218.31,203.20 L1216.30,201.57 L1214.26,199.94 L1212.20,198.31 L1210.11,196.68 L1208.01,195.06 L1205.87,193.43 L1203.72,191.80 L1201.54,190.17 L1199.34,188.54 L1197.12,186.91 L1194.87,185.28 L1192.60,183.66 L1190.32,182.03 L1188.00,180.40 L1185.67,178.77 L1183.32,177.14 L1180.94,175.51 L1178.54,173.88 L1176.12,172.26 L1173.68,170.63 L1171.22,169.00 L1168.74,167.37 L1166.24,165.74 L1163.72,164.11 L1161.18,162.49 L1158.62,160.86 L1156.04,159.23 L1153.44,157.60 L1150.82,155.97 L1148.19,154.34 L1145.53,152.71 L1142.86,151.09 L1140.16,149.46 L1137.45,147.83 L1134.72,146.20 L1131.98,144.57 L1129.21,142.94 L1126.43,141.31 L1123.63,139.69 L1120.82,138.06 L1117.99,136.43 L1115.14,134.80 L1112.28,133.17 L1109.40,131.54 L1106.50,129.92 L1103.59,128.29 L1100.66,126.66 L1097.72,125.03 L1094.76,123.40 L1091.79,121.77 L1088.81,120.14 L1085.81,118.52 L1082.79,116.89 L1079.77,115.26 L1076.72,113.63 L1073.67,112.00 L1070.60,110.37 L1067.52,108.74 L1064.43,107.12 L1061.32,105.49 L1058.21,103.86 L1055.08,102.23 L1051.94,100.60 L1048.79,98.97 L1045.62,97.35 L1042.45,95.72 L1039.26,94.09 L1036.07,92.46 L1032.86,90.83 L1029.65,89.20 L1026.42,87.57 L1023.19,85.95 L1019.95,84.32 L1016.70,82.69 L1013.43,81.06 L1010.16,79.43 L1006.89,77.80 L1003.60,76.17 L1000.31,74.55 L997.01,72.92 L993.70,71.29 L990.38,69.66 L987.06,68.03 L983.74,66.40 L980.40,64.78 L977.06,63.15 L973.72,61.52 L970.36,59.89 L967.01,58.26 L963.65,56.63 L960.28,55.00 L956.91,53.38 L953.54,51.75 L950.16,50.12 L946.78,48.49 L943.39,46.86 L940.00,45.23 L936.61,43.60 L933.22,41.98 L929.82,40.35 L926.42,38.72 L923.02,37.09 L919.62,35.46 L916.22,33.83 L912.82,32.21 L909.41,30.58 L906.01,28.95 L902.60,27.32 M902.60,613.58 L905.58,611.95 L908.56,610.32 L911.54,608.69 L914.52,607.07 L917.49,605.44 L920.47,603.81 L923.45,602.18 L926.42,600.55 L929.39,598.92 L932.36,597.30 L935.33,595.67 L938.29,594.04 L941.25,592.41 L944.21,590.78 L947.17,589.15 L950.12,587.52 L953.07,585.90 L956.02,584.27 L958.96,582.64 L961.89,581.01 L964.83,579.38 L967.75,577.75 L970.68,576.12 L973.59,574.50 L976.51,572.87 L979.41,571.24 L982.31,569.61 L985.21,567.98 L988.09,566.35 L990.98,564.73 L993.85,563.10 L996.72,561.47 L999.58,559.84 L1002.43,558.21 L1005.28,556.58 L1008.12,554.95 L1010.95,553.33 L1013.77,551.70 L1016.58,550.07 L1019.39,548.44 L1022.18,546.81 L1024.97,545.18 L1027.75,543.55 L1030.51,541.93 L1033.27,540.30 L1036.02,538.67 L1038.76,537.04 L1041.48,535.41 L1044.20,533.78 L1046.91,532.15 L1049.60,530.53 L1052.29,528.90 L1054.96,527.27 L1057.62,525.64 L1060.27,524.01 L1062.91,522.38 L1065.53,520.76 L1068.14,519.13 L1070.74,517.50 L1073.33,515.87 L1075.90,514.24 L1078.46,512.61 L1081.01,510.98 L1083.55,509.36 L1086.07,507.73 L1088.57,506.10 L1091.06,504.47 L1093.54,502.84 L1096.01,501.21 L1098.45,499.59 L1100.89,497.96 L1103.31,496.33 L1105.71,494.70 L1108.10,493.07 L1110.47,491.44 L1112.82,489.81 L1115.16,488.19 L1117.49,486.56 L1119.80,484.93 L1122.09,483.30 L1124.36,481.67 L1126.62,480.04 L1128.86,478.41 L1131.08,476.79 L1133.29,475.16 L1135.48,473.53 L1137.65,471.90 L1139.80,470.27 L1141.93,468.64 L1144.05,467.01 L1146.15,465.39 L1148.23,463.76 L1150.29,462.13 L1152.33,460.50 L1154.35,458.87 L1156.35,457.24 L1158.34,455.62 L1160.30,453.99 L1162.25,452.36 L1164.17,450.73 L1166.08,449.10 L1167.96,447.47 L1169.83,445.84 L1171.67,444.22 L1173.50,442.59 L1175.30,440.96 L1177.08,439.33 L1178.85,437.70 L1180.59,436.07 L1182.31,434.44 L1184.01,432.82 L1185.68,431.19 L1187.34,429.56 L1188.97,427.93 L1190.58,426.30 L1192.17,424.67 L1193.74,423.05 L1195.29,421.42 L1196.81,419.79 L1198.31,418.16 L1199.79,416.53 L1201.25,414.90 L1202.68,413.27 L1204.09,411.65 L1205.48,410.02 L1206.84,408.39 L1208.18,406.76 L1209.50,405.13 L1210.80,403.50 L1212.07,401.88 L1213.32,400.25 L1214.54,398.62 L1215.74,396.99 L1216.92,395.36 L1218.07,393.73 L1219.20,392.10 L1220.30,390.48 L1221.38,388.85 L1222.44,387.22 L1223.47,385.59 L1224.47,383.96 L1225.46,382.33 L1226.41,380.70 L1227.35,379.08 L1228.26,377.45 L1229.14,375.82 L1230.00,374.19 L1230.83,372.56 L1231.64,370.93 L1232.43,369.31 L1233.18,367.68 L1233.92,366.05 L1234.63,364.42 L1235.31,362.79 L1235.97,361.16 L1236.60,359.53 L1237.21,357.91 L1237.79,356.28 L1238.34,354.65 L1238.87,353.02 L1239.38,351.39 L1239.86,349.76 L1240.31,348.13 L1240.74,346.51 L1241.14,344.88 L1241.51,343.25 L1241.87,341.62 L1242.19,339.99 L1242.49,338.36 L1242.76,336.74 L1243.01,335.11 L1243.23,333.48 L1243.42,331.85 L1243.59,330.22 L1243.74,328.59 L1243.85,326.96 L1243.94,325.34 L1244.01,323.71 L1244.05,322.08 L1244.06,320.45 L1244.05,318.82 L1244.01,317.19 L1243.94,315.56 L1243.85,313.94 L1243.74,312.31 L1243.59,310.68 L1243.42,309.05 L1243.23,307.42 L1243.01,305.79 L1242.76,304.16 L1242.49,302.54 L1242.19,300.91 L1241.87,299.28 L1241.51,297.65 L1241.14,296.02 L1240.74,294.39 L1240.31,292.77 L1239.86,291.14 L1239.38,289.51 L1238.87,287.88 L1238.34,286.25 L1237.79,284.62 L1237.21,282.99 L1236.60,281.37 L1235.97,279.74 L1235.31,278.11 L1234.63,276.48 L1233.92,274.85 L1233.18,273.22 L1232.43,271.59 L1231.64,269.97 L1230.83,268.34 L1230.00,266.71 L1229.14,265.08 L1228.26,263.45 L1227.35,261.82 L1226.41,260.20 L1225.46,258.57 L1224.47,256.94 L1223.47,255.31 L1222.44,253.68 L1221.38,252.05 L1220.30,250.42 L1219.20,248.80 L1218.07,247.17 L1216.92,245.54 L1215.74,243.91 L1214.54,242.28 L1213.32,240.65 L1212.07,239.02 L1210.80,237.40 L1209.50,235.77 L1208.18,234.14 L1206.84,232.51 L1205.48,230.88 L1204.09,229.25 L1202.68,227.63 L1201.25,226.00 L1199.79,224.37 L1198.31,222.74 L1196.81,221.11 L1195.29,219.48 L1193.74,217.85 L1192.17,216.23 L1190.58,214.60 L1188.97,212.97 L1187.34,211.34 L1185.68,209.71 L1184.01,208.08 L1182.31,206.45 L1180.59,204.83 L1178.85,203.20 L1177.08,201.57 L1175.30,199.94 L1173.50,198.31 L1171.67,196.68 L1169.83,195.06 L1167.96,193.43 L1166.08,191.80 L1164.17,190.17 L1162.25,188.54 L1160.30,186.91 L1158.34,185.28 L1156.35,183.66 L1154.35,182.03 L1152.33,180.40 L1150.29,178.77 L1148.23,177.14 L1146.15,175.51 L1144.05,173.88 L1141.93,172.26 L1139.80,170.63 L1137.65,169.00 L1135.48,167.37 L1133.29,165.74 L1131.08,164.11 L1128.86,162.49 L1126.62,160.86 L1124.36,159.23 L1122.09,157.60 L1119.80,155.97 L1117.49,154.34 L1115.16,152.71 L1112.82,151.09 L1110.47,149.46 L1108.10,147.83 L1105.71,146.20 L1103.31,144.57 L1100.89,142.94 L1098.45,141.31 L1096.01,139.69 L1093.54,138.06 L1091.06,136.43 L1088.57,134.80 L1086.07,133.17 L1083.55,131.54 L1081.01,129.92 L1078.46,128.29 L1075.90,126.66 L1073.33,125.03 L1070.74,123.40 L1068.14,121.77 L1065.53,120.14 L1062.91,118.52 L1060.27,116.89 L1057.62,115.26 L1054.96,113.63 L1052.29,112.00 L1049.60,110.37 L1046.91,108.74 L1044.20,107.12 L1041.48,105.49 L1038.76,103.86 L1036.02,102.23 L1033.27,100.60 L1030.51,98.97 L1027.75,97.35 L1024.97,95.72 L1022.18,94.09 L1019.39,92.46 L1016.58,90.83 L1013.77,89.20 L1010.95,87.57 L1008.12,85.95 L1005.28,84.32 L1002.43,82.69 L999.58,81.06 L996.72,79.43 L993.85,77.80 L990.98,76.17 L988.09,74.55 L985.21,72.92 L982.31,71.29 L979.41,69.66 L976.51,68.03 L973.59,66.40 L970.68,64.78 L967.75,63.15 L964.83,61.52 L961.89,59.89 L958.96,58.26 L956.02,56.63 L953.07,55.00 L950.12,53.38 L947.17,51.75 L944.21,50.12 L941.25,48.49 L938.29,46.86 L935.33,45.23 L932.36,43.60 L929.39,41.98 L926.42,40.35 L923.45,38.72 L920.47,37.09 L917.49,35.46 L914.52,33.83 L911.54,32.21 L908.56,30.58 L905.58,28.95 L902.60,27.32 M902.60,613.58 L905.15,611.95 L907.71,610.32 L910.26,608.69 L912.81,607.07 L915.37,605.44 L917.92,603.81 L920.47,602.18 L923.02,600.55 L925.56,598.92 L928.11,597.30 L930.65,595.67 L933.19,594.04 L935.73,592.41 L938.27,590.78 L940.80,589.15 L943.33,587.52 L945.86,585.90 L948.39,584.27 L950.91,582.64 L953.42,581.01 L955.94,579.38 L958.45,577.75 L960.95,576.12 L963.45,574.50 L965.95,572.87 L968.44,571.24 L970.92,569.61 L973.41,567.98 L975.88,566.35 L978.35,564.73 L980.82,563.10 L983.27,561.47 L985.73,559.84 L988.17,558.21 L990.61,556.58 L993.04,554.95 L995.47,553.33 L997.89,551.70 L1000.30,550.07 L1002.70,548.44 L1005.10,546.81 L1007.49,545.18 L1009.87,543.55 L1012.24,541.93 L1014.60,540.30 L1016.96,538.67 L1019.31,537.04 L1021.64,535.41 L1023.97,533.78 L1026.29,532.15 L1028.60,530.53 L1030.90,528.90 L1033.19,527.27 L1035.47,525.64 L1037.74,524.01 L1040.00,522.38 L1042.25,520.76 L1044.49,519.13 L1046.72,517.50 L1048.94,515.87 L1051.15,514.24 L1053.34,512.61 L1055.52,510.98 L1057.70,509.36 L1059.86,507.73 L1062.00,506.10 L1064.14,504.47 L1066.26,502.84 L1068.38,501.21 L1070.47,499.59 L1072.56,497.96 L1074.63,496.33 L1076.69,494.70 L1078.74,493.07 L1080.77,491.44 L1082.79,489.81 L1084.80,488.19 L1086.79,486.56 L1088.77,484.93 L1090.73,483.30 L1092.68,481.67 L1094.62,480.04 L1096.54,478.41 L1098.44,476.79 L1100.33,475.16 L1102.21,473.53 L1104.07,471.90 L1105.91,470.27 L1107.74,468.64 L1109.56,467.01 L1111.35,465.39 L1113.14,463.76 L1114.90,462.13 L1116.65,460.50 L1118.39,458.87 L1120.10,457.24 L1121.80,455.62 L1123.49,453.99 L1125.16,452.36 L1126.81,450.73 L1128.44,449.10 L1130.06,447.47 L1131.65,445.84 L1133.23,444.22 L1134.80,442.59 L1136.34,440.96 L1137.87,439.33 L1139.38,437.70 L1140.88,436.07 L1142.35,434.44 L1143.81,432.82 L1145.24,431.19 L1146.66,429.56 L1148.06,427.93 L1149.44,426.30 L1150.81,424.67 L1152.15,423.05 L1153.48,421.42 L1154.78,419.79 L1156.07,418.16 L1157.34,416.53 L1158.58,414.90 L1159.81,413.27 L1161.02,411.65 L1162.21,410.02 L1163.38,408.39 L1164.53,406.76 L1165.66,405.13 L1166.77,403.50 L1167.86,401.88 L1168.93,400.25 L1169.98,398.62 L1171.01,396.99 L1172.01,395.36 L1173.00,393.73 L1173.97,392.10 L1174.91,390.48 L1175.84,388.85 L1176.75,387.22 L1177.63,385.59 L1178.49,383.96 L1179.33,382.33 L1180.16,380.70 L1180.96,379.08 L1181.73,377.45 L1182.49,375.82 L1183.23,374.19 L1183.94,372.56 L1184.64,370.93 L1185.31,369.31 L1185.96,367.68 L1186.59,366.05 L1187.19,364.42 L1187.78,362.79 L1188.34,361.16 L1188.88,359.53 L1189.40,357.91 L1189.90,356.28 L1190.38,354.65 L1190.83,353.02 L1191.27,351.39 L1191.68,349.76 L1192.07,348.13 L1192.43,346.51 L1192.78,344.88 L1193.10,343.25 L1193.40,341.62 L1193.68,339.99 L1193.93,338.36 L1194.17,336.74 L1194.38,335.11 L1194.57,333.48 L1194.73,331.85 L1194.88,330.22 L1195.00,328.59 L1195.10,326.96 L1195.18,325.34 L1195.24,323.71 L1195.27,322.08 L1195.28,320.45 L1195.27,318.82 L1195.24,317.19 L1195.18,315.56 L1195.10,313.94 L1195.00,312.31 L1194.88,310.68 L1194.73,309.05 L1194.57,307.42 L1194.38,305.79 L1194.17,304.16 L1193.93,302.54 L1193.68,300.91 L1193.40,299.28 L1193.10,297.65 L1192.78,296.02 L1192.43,294.39 L1192.07,292.77 L1191.68,291.14 L1191.27,289.51 L1190.83,287.88 L1190.38,286.25 L1189.90,284.62 L1189.40,282.99 L1188.88,281.37 L1188.34,279.74 L1187.78,278.11 L1187.19,276.48 L1186.59,274.85 L1185.96,273.22 L1185.31,271.59 L1184.64,269.97 L1183.94,268.34 L1183.23,266.71 L1182.49,265.08 L1181.73,263.45 L1180.96,261.82 L1180.16,260.20 L1179.33,258.57 L1178.49,256.94 L1177.63,255.31 L1176.75,253.68 L1175.84,252.05 L1174.91,250.42 L1173.97,248.80 L1173.00,247.17 L1172.01,245.54 L1171.01,243.91 L1169.98,242.28 L1168.93,240.65 L1167.86,239.02 L1166.77,237.40 L1165.66,235.77 L1164.53,234.14 L1163.38,232.51 L1162.21,230.88 L1161.02,229.25 L1159.81,227.63 L1158.58,226.00 L1157.34,224.37 L1156.07,222.74 L1154.78,221.11 L1153.48,219.48 L1152.15,217.85 L1150.81,216.23 L1149.44,214.60 L1148.06,212.97 L1146.66,211.34 L1145.24,209.71 L1143.81,208.08 L1142.35,206.45 L1140.88,204.83 L1139.38,203.20 L1137.87,201.57 L1136.34,199.94 L1134.80,198.31 L1133.23,196.68 L1131.65,195.06 L1130.06,193.43 L1128.44,191.80 L1126.81,190.17 L1125.16,188.54 L1123.49,186.91 L1121.80,185.28 L1120.10,183.66 L1118.39,182.03 L1116.65,180.40 L1114.90,178.77 L1113.14,177.14 L1111.35,175.51 L1109.56,173.88 L1107.74,172.26 L1105.91,170.63 L1104.07,169.00 L1102.21,167.37 L1100.33,165.74 L1098.44,164.11 L1096.54,162.49 L1094.62,160.86 L1092.68,159.23 L1090.73,157.60 L1088.77,155.97 L1086.79,154.34 L1084.80,152.71 L1082.79,151.09 L1080.77,149.46 L1078.74,147.83 L1076.69,146.20 L1074.63,144.57 L1072.56,142.94 L1070.47,141.31 L1068.38,139.69 L1066.26,138.06 L1064.14,136.43 L1062.00,134.80 L1059.86,133.17 L1057.70,131.54 L1055.52,129.92 L1053.34,128.29 L1051.15,126.66 L1048.94,125.03 L1046.72,123.40 L1044.49,121.77 L1042.25,120.14 L1040.00,118.52 L1037.74,116.89 L1035.47,115.26 L1033.19,113.63 L1030.90,112.00 L1028.60,110.37 L1026.29,108.74 L1023.97,107.12 L1021.64,105.49 L1019.31,103.86 L1016.96,102.23 L1014.60,100.60 L1012.24,98.97 L1009.87,97.35 L1007.49,95.72 L1005.10,94.09 L1002.70,92.46 L1000.30,90.83 L997.89,89.20 L995.47,87.57 L993.04,85.95 L990.61,84.32 L988.17,82.69 L985.73,81.06 L983.27,79.43 L980.82,77.80 L978.35,76.17 L975.88,74.55 L973.41,72.92 L970.92,71.29 L968.44,69.66 L965.95,68.03 L963.45,66.40 L960.95,64.78 L958.45,63.15 L955.94,61.52 L953.42,59.89 L950.91,58.26 L948.39,56.63 L945.86,55.00 L943.33,53.38 L940.80,51.75 L938.27,50.12 L935.73,48.49 L933.19,46.86 L930.65,45.23 L928.11,43.60 L925.56,41.98 L923.02,40.35 L920.47,38.72 L917.92,37.09 L915.37,35.46 L912.81,33.83 L910.26,32.21 L907.71,30.58 L905.15,28.95 L902.60,27.32 M902.60,613.58 L904.73,611.95 L906.86,610.32 L908.98,608.69 L911.11,607.07 L913.24,605.44 L915.36,603.81 L917.49,602.18 L919.61,600.55 L921.74,598.92 L923.86,597.30 L925.98,595.67 L928.09,594.04 L930.21,592.41 L932.32,590.78 L934.44,589.15 L936.54,587.52 L938.65,585.90 L940.75,584.27 L942.86,582.64 L944.95,581.01 L947.05,579.38 L949.14,577.75 L951.23,576.12 L953.31,574.50 L955.39,572.87 L957.47,571.24 L959.54,569.61 L961.60,567.98 L963.67,566.35 L965.73,564.73 L967.78,563.10 L969.83,561.47 L971.87,559.84 L973.91,558.21 L975.94,556.58 L977.97,554.95 L979.99,553.33 L982.01,551.70 L984.02,550.07 L986.02,548.44 L988.02,546.81 L990.01,545.18 L991.99,543.55 L993.97,541.93 L995.94,540.30 L997.90,538.67 L999.85,537.04 L1001.80,535.41 L1003.74,533.78 L1005.68,532.15 L1007.60,530.53 L1009.52,528.90 L1011.43,527.27 L1013.33,525.64 L1015.22,524.01 L1017.10,522.38 L1018.98,520.76 L1020.85,519.13 L1022.70,517.50 L1024.55,515.87 L1026.39,514.24 L1028.22,512.61 L1030.04,510.98 L1031.85,509.36 L1033.65,507.73 L1035.44,506.10 L1037.22,504.47 L1038.99,502.84 L1040.75,501.21 L1042.50,499.59 L1044.23,497.96 L1045.96,496.33 L1047.68,494.70 L1049.38,493.07 L1051.08,491.44 L1052.76,489.81 L1054.43,488.19 L1056.09,486.56 L1057.74,484.93 L1059.38,483.30 L1061.00,481.67 L1062.61,480.04 L1064.21,478.41 L1065.80,476.79 L1067.38,475.16 L1068.94,473.53 L1070.49,471.90 L1072.03,470.27 L1073.55,468.64 L1075.06,467.01 L1076.56,465.39 L1078.05,463.76 L1079.52,462.13 L1080.98,460.50 L1082.42,458.87 L1083.85,457.24 L1085.27,455.62 L1086.67,453.99 L1088.06,452.36 L1089.44,450.73 L1090.80,449.10 L1092.15,447.47 L1093.48,445.84 L1094.80,444.22 L1096.10,442.59 L1097.39,440.96 L1098.66,439.33 L1099.92,437.70 L1101.16,436.07 L1102.39,434.44 L1103.60,432.82 L1104.80,431.19 L1105.98,429.56 L1107.15,427.93 L1108.30,426.30 L1109.44,424.67 L1110.56,423.05 L1111.66,421.42 L1112.75,419.79 L1113.82,418.16 L1114.88,416.53 L1115.92,414.90 L1116.94,413.27 L1117.95,411.65 L1118.94,410.02 L1119.92,408.39 L1120.87,406.76 L1121.82,405.13 L1122.74,403.50 L1123.65,401.88 L1124.54,400.25 L1125.41,398.62 L1126.27,396.99 L1127.11,395.36 L1127.93,393.73 L1128.74,392.10 L1129.53,390.48 L1130.30,388.85 L1131.05,387.22 L1131.79,385.59 L1132.51,383.96 L1133.21,382.33 L1133.90,380.70 L1134.56,379.08 L1135.21,377.45 L1135.84,375.82 L1136.46,374.19 L1137.05,372.56 L1137.63,370.93 L1138.19,369.31 L1138.73,367.68 L1139.26,366.05 L1139.76,364.42 L1140.25,362.79 L1140.72,361.16 L1141.17,359.53 L1141.60,357.91 L1142.02,356.28 L1142.42,354.65 L1142.79,353.02 L1143.16,351.39 L1143.50,349.76 L1143.82,348.13 L1144.13,346.51 L1144.41,344.88 L1144.68,343.25 L1144.93,341.62 L1145.16,339.99 L1145.38,338.36 L1145.57,336.74 L1145.75,335.11 L1145.91,333.48 L1146.05,331.85 L1146.17,330.22 L1146.27,328.59 L1146.35,326.96 L1146.42,325.34 L1146.46,323.71 L1146.49,322.08 L1146.50,320.45 L1146.49,318.82 L1146.46,317.19 L1146.42,315.56 L1146.35,313.94 L1146.27,312.31 L1146.17,310.68 L1146.05,309.05 L1145.91,307.42 L1145.75,305.79 L1145.57,304.16 L1145.38,302.54 L1145.16,300.91 L1144.93,299.28 L1144.68,297.65 L1144.41,296.02 L1144.13,294.39 L1143.82,292.77 L1143.50,291.14 L1143.16,289.51 L1142.79,287.88 L1142.42,286.25 L1142.02,284.62 L1141.60,282.99 L1141.17,281.37 L1140.72,279.74 L1140.25,278.11 L1139.76,276.48 L1139.26,274.85 L1138.73,273.22 L1138.19,271.59 L1137.63,269.97 L1137.05,268.34 L1136.46,266.71 L1135.84,265.08 L1135.21,263.45 L1134.56,261.82 L1133.90,260.20 L1133.21,258.57 L1132.51,256.94 L1131.79,255.31 L1131.05,253.68 L1130.30,252.05 L1129.53,250.42 L1128.74,248.80 L1127.93,247.17 L1127.11,245.54 L1126.27,243.91 L1125.41,242.28 L1124.54,240.65 L1123.65,239.02 L1122.74,237.40 L1121.82,235.77 L1120.87,234.14 L1119.92,232.51 L1118.94,230.88 L1117.95,229.25 L1116.94,227.63 L1115.92,226.00 L1114.88,224.37 L1113.82,222.74 L1112.75,221.11 L1111.66,219.48 L1110.56,217.85 L1109.44,216.23 L1108.30,214.60 L1107.15,212.97 L1105.98,211.34 L1104.80,209.71 L1103.60,208.08 L1102.39,206.45 L1101.16,204.83 L1099.92,203.20 L1098.66,201.57 L1097.39,199.94 L1096.10,198.31 L1094.80,196.68 L1093.48,195.06 L1092.15,193.43 L1090.80,191.80 L1089.44,190.17 L1088.06,188.54 L1086.67,186.91 L1085.27,185.28 L1083.85,183.66 L1082.42,182.03 L1080.98,180.40 L1079.52,178.77 L1078.05,177.14 L1076.56,175.51 L1075.06,173.88 L1073.55,172.26 L1072.03,170.63 L1070.49,169.00 L1068.94,167.37 L1067.38,165.74 L1065.80,164.11 L1064.21,162.49 L1062.61,160.86 L1061.00,159.23 L1059.38,157.60 L1057.74,155.97 L1056.09,154.34 L1054.43,152.71 L1052.76,151.09 L1051.08,149.46 L1049.38,147.83 L1047.68,146.20 L1045.96,144.57 L1044.23,142.94 L1042.50,141.31 L1040.75,139.69 L1038.99,138.06 L1037.22,136.43 L1035.44,134.80 L1033.65,133.17 L1031.85,131.54 L1030.04,129.92 L1028.22,128.29 L1026.39,126.66 L1024.55,125.03 L1022.70,123.40 L1020.85,121.77 L1018.98,120.14 L1017.10,118.52 L1015.22,116.89 L1013.33,115.26 L1011.43,113.63 L1009.52,112.00 L1007.60,110.37 L1005.68,108.74 L1003.74,107.12 L1001.80,105.49 L999.85,103.86 L997.90,102.23 L995.94,100.60 L993.97,98.97 L991.99,97.35 L990.01,95.72 L988.02,94.09 L986.02,92.46 L984.02,90.83 L982.01,89.20 L979.99,87.57 L977.97,85.95 L975.94,84.32 L973.91,82.69 L971.87,81.06 L969.83,79.43 L967.78,77.80 L965.73,76.17 L963.67,74.55 L961.60,72.92 L959.54,71.29 L957.47,69.66 L955.39,68.03 L953.31,66.40 L951.23,64.78 L949.14,63.15 L947.05,61.52 L944.95,59.89 L942.86,58.26 L940.75,56.63 L938.65,55.00 L936.54,53.38 L934.44,51.75 L932.32,50.12 L930.21,48.49 L928.09,46.86 L925.98,45.23 L923.86,43.60 L921.74,41.98 L919.61,40.35 L917.49,38.72 L915.36,37.09 L913.24,35.46 L911.11,33.83 L908.98,32.21 L906.86,30.58 L904.73,28.95 L902.60,27.32 M902.60,613.58 L904.30,611.95 L906.01,610.32 L907.71,608.69 L909.41,607.07 L911.11,605.44 L912.81,603.81 L914.51,602.18 L916.21,600.55 L917.91,598.92 L919.61,597.30 L921.30,595.67 L923.00,594.04 L924.69,592.41 L926.38,590.78 L928.07,589.15 L929.76,587.52 L931.44,585.90 L933.12,584.27 L934.80,582.64 L936.48,581.01 L938.16,579.38 L939.83,577.75 L941.50,576.12 L943.17,574.50 L944.83,572.87 L946.49,571.24 L948.15,569.61 L949.80,567.98 L951.45,566.35 L953.10,564.73 L954.74,563.10 L956.38,561.47 L958.02,559.84 L959.65,558.21 L961.27,556.58 L962.90,554.95 L964.51,553.33 L966.12,551.70 L967.73,550.07 L969.33,548.44 L970.93,546.81 L972.52,545.18 L974.11,543.55 L975.69,541.93 L977.27,540.30 L978.84,538.67 L980.40,537.04 L981.96,535.41 L983.51,533.78 L985.06,532.15 L986.60,530.53 L988.13,528.90 L989.66,527.27 L991.18,525.64 L992.70,524.01 L994.20,522.38 L995.70,520.76 L997.20,519.13 L998.68,517.50 L1000.16,515.87 L1001.63,514.24 L1003.09,512.61 L1004.55,510.98 L1006.00,509.36 L1007.44,507.73 L1008.87,506.10 L1010.29,504.47 L1011.71,502.84 L1013.12,501.21 L1014.52,499.59 L1015.91,497.96 L1017.29,496.33 L1018.66,494.70 L1020.03,493.07 L1021.38,491.44 L1022.73,489.81 L1024.07,488.19 L1025.39,486.56 L1026.71,484.93 L1028.02,483.30 L1029.32,481.67 L1030.61,480.04 L1031.89,478.41 L1033.16,476.79 L1034.42,475.16 L1035.67,473.53 L1036.91,471.90 L1038.14,470.27 L1039.36,468.64 L1040.57,467.01 L1041.77,465.39 L1042.96,463.76 L1044.14,462.13 L1045.30,460.50 L1046.46,458.87 L1047.60,457.24 L1048.74,455.62 L1049.86,453.99 L1050.97,452.36 L1052.07,450.73 L1053.16,449.10 L1054.24,447.47 L1055.30,445.84 L1056.36,444.22 L1057.40,442.59 L1058.43,440.96 L1059.45,439.33 L1060.46,437.70 L1061.45,436.07 L1062.43,434.44 L1063.40,432.82 L1064.36,431.19 L1065.31,429.56 L1066.24,427.93 L1067.16,426.30 L1068.07,424.67 L1068.97,423.05 L1069.85,421.42 L1070.72,419.79 L1071.58,418.16 L1072.42,416.53 L1073.26,414.90 L1074.07,413.27 L1074.88,411.65 L1075.67,410.02 L1076.45,408.39 L1077.22,406.76 L1077.97,405.13 L1078.71,403.50 L1079.44,401.88 L1080.15,400.25 L1080.85,398.62 L1081.54,396.99 L1082.21,395.36 L1082.87,393.73 L1083.51,392.10 L1084.14,390.48 L1084.76,388.85 L1085.36,387.22 L1085.95,385.59 L1086.53,383.96 L1087.09,382.33 L1087.64,380.70 L1088.17,379.08 L1088.69,377.45 L1089.19,375.82 L1089.68,374.19 L1090.16,372.56 L1090.62,370.93 L1091.07,369.31 L1091.50,367.68 L1091.92,366.05 L1092.33,364.42 L1092.72,362.79 L1093.09,361.16 L1093.46,359.53 L1093.80,357.91 L1094.14,356.28 L1094.45,354.65 L1094.76,353.02 L1095.04,351.39 L1095.32,349.76 L1095.58,348.13 L1095.82,346.51 L1096.05,344.88 L1096.27,343.25 L1096.47,341.62 L1096.65,339.99 L1096.82,338.36 L1096.98,336.74 L1097.12,335.11 L1097.24,333.48 L1097.36,331.85 L1097.45,330.22 L1097.53,328.59 L1097.60,326.96 L1097.65,325.34 L1097.69,323.71 L1097.71,322.08 L1097.72,320.45 L1097.71,318.82 L1097.69,317.19 L1097.65,315.56 L1097.60,313.94 L1097.53,312.31 L1097.45,310.68 L1097.36,309.05 L1097.24,307.42 L1097.12,305.79 L1096.98,304.16 L1096.82,302.54 L1096.65,300.91 L1096.47,299.28 L1096.27,297.65 L1096.05,296.02 L1095.82,294.39 L1095.58,292.77 L1095.32,291.14 L1095.04,289.51 L1094.76,287.88 L1094.45,286.25 L1094.14,284.62 L1093.80,282.99 L1093.46,281.37 L1093.09,279.74 L1092.72,278.11 L1092.33,276.48 L1091.92,274.85 L1091.50,273.22 L1091.07,271.59 L1090.62,269.97 L1090.16,268.34 L1089.68,266.71 L1089.19,265.08 L1088.69,263.45 L1088.17,261.82 L1087.64,260.20 L1087.09,258.57 L1086.53,256.94 L1085.95,255.31 L1085.36,253.68 L1084.76,252.05 L1084.14,250.42 L1083.51,248.80 L1082.87,247.17 L1082.21,245.54 L1081.54,243.91 L1080.85,242.28 L1080.15,240.65 L1079.44,239.02 L1078.71,237.40 L1077.97,235.77 L1077.22,234.14 L1076.45,232.51 L1075.67,230.88 L1074.88,229.25 L1074.07,227.63 L1073.26,226.00 L1072.42,224.37 L1071.58,222.74 L1070.72,221.11 L1069.85,219.48 L1068.97,217.85 L1068.07,216.23 L1067.16,214.60 L1066.24,212.97 L1065.31,211.34 L1064.36,209.71 L1063.40,208.08 L1062.43,206.45 L1061.45,204.83 L1060.46,203.20 L1059.45,201.57 L1058.43,199.94 L1057.40,198.31 L1056.36,196.68 L1055.30,195.06 L1054.24,193.43 L1053.16,191.80 L1052.07,190.17 L1050.97,188.54 L1049.86,186.91 L1048.74,185.28 L1047.60,183.66 L1046.46,182.03 L1045.30,180.40 L1044.14,178.77 L1042.96,177.14 L1041.77,175.51 L1040.57,173.88 L1039.36,172.26 L1038.14,170.63 L1036.91,169.00 L1035.67,167.37 L1034.42,165.74 L1033.16,164.11 L1031.89,162.49 L1030.61,160.86 L1029.32,159.23 L1028.02,157.60 L1026.71,155.97 L1025.39,154.34 L1024.07,152.71 L1022.73,151.09 L1021.38,149.46 L1020.03,147.83 L1018.66,146.20 L1017.29,144.57 L1015.91,142.94 L1014.52,141.31 L1013.12,139.69 L1011.71,138.06 L1010.29,136.43 L1008.87,134.80 L1007.44,133.17 L1006.00,131.54 L1004.55,129.92 L1003.09,128.29 L1001.63,126.66 L1000.16,125.03 L998.68,123.40 L997.20,121.77 L995.70,120.14 L994.20,118.52 L992.70,116.89 L991.18,115.26 L989.66,113.63 L988.13,112.00 L986.60,110.37 L985.06,108.74 L983.51,107.12 L981.96,105.49 L980.40,103.86 L978.84,102.23 L977.27,100.60 L975.69,98.97 L974.11,97.35 L972.52,95.72 L970.93,94.09 L969.33,92.46 L967.73,90.83 L966.12,89.20 L964.51,87.57 L962.90,85.95 L961.27,84.32 L959.65,82.69 L958.02,81.06 L956.38,79.43 L954.74,77.80 L953.10,76.17 L951.45,74.55 L949.80,72.92 L948.15,71.29 L946.49,69.66 L944.83,68.03 L943.17,66.40 L941.50,64.78 L939.83,63.15 L938.16,61.52 L936.48,59.89 L934.80,58.26 L933.12,56.63 L931.44,55.00 L929.76,53.38 L928.07,51.75 L926.38,50.12 L924.69,48.49 L923.00,46.86 L921.30,45.23 L919.61,43.60 L917.91,41.98 L916.21,40.35 L914.51,38.72 L912.81,37.09 L911.11,35.46 L909.41,33.83 L907.71,32.21 L906.01,30.58 L904.30,28.95 L902.60,27.32 M902.60,613.58 L903.88,611.95 L905.15,610.32 L906.43,608.69 L907.71,607.07 L908.98,605.44 L910.26,603.81 L911.53,602.18 L912.81,600.55 L914.08,598.92 L915.35,597.30 L916.63,595.67 L917.90,594.04 L919.17,592.41 L920.43,590.78 L921.70,589.15 L922.97,587.52 L924.23,585.90 L925.49,584.27 L926.75,582.64 L928.01,581.01 L929.27,579.38 L930.52,577.75 L931.78,576.12 L933.03,574.50 L934.27,572.87 L935.52,571.24 L936.76,569.61 L938.00,567.98 L939.24,566.35 L940.48,564.73 L941.71,563.10 L942.94,561.47 L944.16,559.84 L945.39,558.21 L946.61,556.58 L947.82,554.95 L949.03,553.33 L950.24,551.70 L951.45,550.07 L952.65,548.44 L953.85,546.81 L955.04,545.18 L956.23,543.55 L957.42,541.93 L958.60,540.30 L959.78,538.67 L960.95,537.04 L962.12,535.41 L963.29,533.78 L964.45,532.15 L965.60,530.53 L966.75,528.90 L967.90,527.27 L969.04,525.64 L970.17,524.01 L971.30,522.38 L972.43,520.76 L973.55,519.13 L974.66,517.50 L975.77,515.87 L976.87,514.24 L977.97,512.61 L979.06,510.98 L980.15,509.36 L981.23,507.73 L982.30,506.10 L983.37,504.47 L984.43,502.84 L985.49,501.21 L986.54,499.59 L987.58,497.96 L988.62,496.33 L989.65,494.70 L990.67,493.07 L991.69,491.44 L992.70,489.81 L993.70,488.19 L994.69,486.56 L995.68,484.93 L996.67,483.30 L997.64,481.67 L998.61,480.04 L999.57,478.41 L1000.52,476.79 L1001.47,475.16 L1002.40,473.53 L1003.33,471.90 L1004.26,470.27 L1005.17,468.64 L1006.08,467.01 L1006.98,465.39 L1007.87,463.76 L1008.75,462.13 L1009.63,460.50 L1010.49,458.87 L1011.35,457.24 L1012.20,455.62 L1013.04,453.99 L1013.88,452.36 L1014.70,450.73 L1015.52,449.10 L1016.33,447.47 L1017.13,445.84 L1017.92,444.22 L1018.70,442.59 L1019.47,440.96 L1020.24,439.33 L1020.99,437.70 L1021.74,436.07 L1022.47,434.44 L1023.20,432.82 L1023.92,431.19 L1024.63,429.56 L1025.33,427.93 L1026.02,426.30 L1026.70,424.67 L1027.38,423.05 L1028.04,421.42 L1028.69,419.79 L1029.33,418.16 L1029.97,416.53 L1030.59,414.90 L1031.21,413.27 L1031.81,411.65 L1032.41,410.02 L1032.99,408.39 L1033.56,406.76 L1034.13,405.13 L1034.68,403.50 L1035.23,401.88 L1035.76,400.25 L1036.29,398.62 L1036.80,396.99 L1037.31,395.36 L1037.80,393.73 L1038.28,392.10 L1038.76,390.48 L1039.22,388.85 L1039.67,387.22 L1040.11,385.59 L1040.55,383.96 L1040.97,382.33 L1041.38,380.70 L1041.78,379.08 L1042.17,377.45 L1042.55,375.82 L1042.91,374.19 L1043.27,372.56 L1043.62,370.93 L1043.95,369.31 L1044.28,367.68 L1044.59,366.05 L1044.90,364.42 L1045.19,362.79 L1045.47,361.16 L1045.74,359.53 L1046.00,357.91 L1046.25,356.28 L1046.49,354.65 L1046.72,353.02 L1046.93,351.39 L1047.14,349.76 L1047.33,348.13 L1047.52,346.51 L1047.69,344.88 L1047.85,343.25 L1048.00,341.62 L1048.14,339.99 L1048.27,338.36 L1048.38,336.74 L1048.49,335.11 L1048.58,333.48 L1048.67,331.85 L1048.74,330.22 L1048.80,328.59 L1048.85,326.96 L1048.89,325.34 L1048.92,323.71 L1048.93,322.08 L1048.94,320.45 L1048.93,318.82 L1048.92,317.19 L1048.89,315.56 L1048.85,313.94 L1048.80,312.31 L1048.74,310.68 L1048.67,309.05 L1048.58,307.42 L1048.49,305.79 L1048.38,304.16 L1048.27,302.54 L1048.14,300.91 L1048.00,299.28 L1047.85,297.65 L1047.69,296.02 L1047.52,294.39 L1047.33,292.77 L1047.14,291.14 L1046.93,289.51 L1046.72,287.88 L1046.49,286.25 L1046.25,284.62 L1046.00,282.99 L1045.74,281.37 L1045.47,279.74 L1045.19,278.11 L1044.90,276.48 L1044.59,274.85 L1044.28,273.22 L1043.95,271.59 L1043.62,269.97 L1043.27,268.34 L1042.91,266.71 L1042.55,265.08 L1042.17,263.45 L1041.78,261.82 L1041.38,260.20 L1040.97,258.57 L1040.55,256.94 L1040.11,255.31 L1039.67,253.68 L1039.22,252.05 L1038.76,250.42 L1038.28,248.80 L1037.80,247.17 L1037.31,245.54 L1036.80,243.91 L1036.29,242.28 L1035.76,240.65 L1035.23,239.02 L1034.68,237.40 L1034.13,235.77 L1033.56,234.14 L1032.99,232.51 L1032.41,230.88 L1031.81,229.25 L1031.21,227.63 L1030.59,226.00 L1029.97,224.37 L1029.33,222.74 L1028.69,221.11 L1028.04,219.48 L1027.38,217.85 L1026.70,216.23 L1026.02,214.60 L1025.33,212.97 L1024.63,211.34 L1023.92,209.71 L1023.20,208.08 L1022.47,206.45 L1021.74,204.83 L1020.99,203.20 L1020.24,201.57 L1019.47,199.94 L1018.70,198.31 L1017.92,196.68 L1017.13,195.06 L1016.33,193.43 L1015.52,191.80 L1014.70,190.17 L1013.88,188.54 L1013.04,186.91 L1012.20,185.28 L1011.35,183.66 L1010.49,182.03 L1009.63,180.40 L1008.75,178.77 L1007.87,177.14 L1006.98,175.51 L1006.08,173.88 L1005.17,172.26 L1004.26,170.63 L1003.33,169.00 L1002.40,167.37 L1001.47,165.74 L1000.52,164.11 L999.57,162.49 L998.61,160.86 L997.64,159.23 L996.67,157.60 L995.68,155.97 L994.69,154.34 L993.70,152.71 L992.70,151.09 L991.69,149.46 L990.67,147.83 L989.65,146.20 L988.62,144.57 L987.58,142.94 L986.54,141.31 L985.49,139.69 L984.43,138.06 L983.37,136.43 L982.30,134.80 L981.23,133.17 L980.15,131.54 L979.06,129.92 L977.97,128.29 L976.87,126.66 L975.77,125.03 L974.66,123.40 L973.55,121.77 L972.43,120.14 L971.30,118.52 L970.17,116.89 L969.04,115.26 L967.90,113.63 L966.75,112.00 L965.60,110.37 L964.45,108.74 L963.29,107.12 L962.12,105.49 L960.95,103.86 L959.78,102.23 L958.60,100.60 L957.42,98.97 L956.23,97.35 L955.04,95.72 L953.85,94.09 L952.65,92.46 L951.45,90.83 L950.24,89.20 L949.03,87.57 L947.82,85.95 L946.61,84.32 L945.39,82.69 L944.16,81.06 L942.94,79.43 L941.71,77.80 L940.48,76.17 L939.24,74.55 L938.00,72.92 L936.76,71.29 L935.52,69.66 L934.27,68.03 L933.03,66.40 L931.78,64.78 L930.52,63.15 L929.27,61.52 L928.01,59.89 L926.75,58.26 L925.49,56.63 L924.23,55.00 L922.97,53.38 L921.70,51.75 L920.43,50.12 L919.17,48.49 L917.90,46.86 L916.63,45.23 L915.35,43.60 L914.08,41.98 L912.81,40.35 L911.53,38.72 L910.26,37.09 L908.98,35.46 L907.71,33.83 L906.43,32.21 L905.15,30.58 L903.88,28.95 L902.60,27.32 M902.60,613.58 L903.45,611.95 L904.30,610.32 L905.15,608.69 L906.00,607.07 L906.86,605.44 L907.71,603.81 L908.56,602.18 L909.41,600.55 L910.25,598.92 L911.10,597.30 L911.95,595.67 L912.80,594.04 L913.64,592.41 L914.49,590.78 L915.33,589.15 L916.18,587.52 L917.02,585.90 L917.86,584.27 L918.70,582.64 L919.54,581.01 L920.38,579.38 L921.22,577.75 L922.05,576.12 L922.88,574.50 L923.72,572.87 L924.55,571.24 L925.37,569.61 L926.20,567.98 L927.03,566.35 L927.85,564.73 L928.67,563.10 L929.49,561.47 L930.31,559.84 L931.12,558.21 L931.94,556.58 L932.75,554.95 L933.56,553.33 L934.36,551.70 L935.17,550.07 L935.97,548.44 L936.77,546.81 L937.56,545.18 L938.36,543.55 L939.15,541.93 L939.93,540.30 L940.72,538.67 L941.50,537.04 L942.28,535.41 L943.06,533.78 L943.83,532.15 L944.60,530.53 L945.37,528.90 L946.13,527.27 L946.89,525.64 L947.65,524.01 L948.40,522.38 L949.15,520.76 L949.90,519.13 L950.64,517.50 L951.38,515.87 L952.12,514.24 L952.85,512.61 L953.57,510.98 L954.30,509.36 L955.02,507.73 L955.73,506.10 L956.45,504.47 L957.15,502.84 L957.86,501.21 L958.56,499.59 L959.25,497.96 L959.94,496.33 L960.63,494.70 L961.31,493.07 L961.99,491.44 L962.66,489.81 L963.33,488.19 L964.00,486.56 L964.66,484.93 L965.31,483.30 L965.96,481.67 L966.61,480.04 L967.25,478.41 L967.88,476.79 L968.51,475.16 L969.14,473.53 L969.76,471.90 L970.37,470.27 L970.98,468.64 L971.59,467.01 L972.18,465.39 L972.78,463.76 L973.37,462.13 L973.95,460.50 L974.53,458.87 L975.10,457.24 L975.67,455.62 L976.23,453.99 L976.79,452.36 L977.34,450.73 L977.88,449.10 L978.42,447.47 L978.95,445.84 L979.48,444.22 L980.00,442.59 L980.51,440.96 L981.02,439.33 L981.53,437.70 L982.03,436.07 L982.52,434.44 L983.00,432.82 L983.48,431.19 L983.95,429.56 L984.42,427.93 L984.88,426.30 L985.34,424.67 L985.78,423.05 L986.23,421.42 L986.66,419.79 L987.09,418.16 L987.51,416.53 L987.93,414.90 L988.34,413.27 L988.74,411.65 L989.14,410.02 L989.53,408.39 L989.91,406.76 L990.29,405.13 L990.66,403.50 L991.02,401.88 L991.38,400.25 L991.73,398.62 L992.07,396.99 L992.40,395.36 L992.73,393.73 L993.06,392.10 L993.37,390.48 L993.68,388.85 L993.98,387.22 L994.28,385.59 L994.56,383.96 L994.84,382.33 L995.12,380.70 L995.39,379.08 L995.64,377.45 L995.90,375.82 L996.14,374.19 L996.38,372.56 L996.61,370.93 L996.84,369.31 L997.05,367.68 L997.26,366.05 L997.46,364.42 L997.66,362.79 L997.85,361.16 L998.03,359.53 L998.20,357.91 L998.37,356.28 L998.53,354.65 L998.68,353.02 L998.82,351.39 L998.96,349.76 L999.09,348.13 L999.21,346.51 L999.33,344.88 L999.43,343.25 L999.53,341.62 L999.63,339.99 L999.71,338.36 L999.79,336.74 L999.86,335.11 L999.92,333.48 L999.98,331.85 L1000.03,330.22 L1000.07,328.59 L1000.10,326.96 L1000.13,325.34 L1000.15,323.71 L1000.16,322.08 L1000.16,320.45 L1000.16,318.82 L1000.15,317.19 L1000.13,315.56 L1000.10,313.94 L1000.07,312.31 L1000.03,310.68 L999.98,309.05 L999.92,307.42 L999.86,305.79 L999.79,304.16 L999.71,302.54 L999.63,300.91 L999.53,299.28 L999.43,297.65 L999.33,296.02 L999.21,294.39 L999.09,292.77 L998.96,291.14 L998.82,289.51 L998.68,287.88 L998.53,286.25 L998.37,284.62 L998.20,282.99 L998.03,281.37 L997.85,279.74 L997.66,278.11 L997.46,276.48 L997.26,274.85 L997.05,273.22 L996.84,271.59 L996.61,269.97 L996.38,268.34 L996.14,266.71 L995.90,265.08 L995.64,263.45 L995.39,261.82 L995.12,260.20 L994.84,258.57 L994.56,256.94 L994.28,255.31 L993.98,253.68 L993.68,252.05 L993.37,250.42 L993.06,248.80 L992.73,247.17 L992.40,245.54 L992.07,243.91 L991.73,242.28 L991.38,240.65 L991.02,239.02 L990.66,237.40 L990.29,235.77 L989.91,234.14 L989.53,232.51 L989.14,230.88 L988.74,229.25 L988.34,227.63 L987.93,226.00 L987.51,224.37 L987.09,222.74 L986.66,221.11 L986.23,219.48 L985.78,217.85 L985.34,216.23 L984.88,214.60 L984.42,212.97 L983.95,211.34 L983.48,209.71 L983.00,208.08 L982.52,206.45 L982.03,204.83 L981.53,203.20 L981.02,201.57 L980.51,199.94 L980.00,198.31 L979.48,196.68 L978.95,195.06 L978.42,193.43 L977.88,191.80 L977.34,190.17 L976.79,188.54 L976.23,186.91 L975.67,185.28 L975.10,183.66 L974.53,182.03 L973.95,180.40 L973.37,178.77 L972.78,177.14 L972.18,175.51 L971.59,173.88 L970.98,172.26 L970.37,170.63 L969.76,169.00 L969.14,167.37 L968.51,165.74 L967.88,164.11 L967.25,162.49 L966.61,160.86 L965.96,159.23 L965.31,157.60 L964.66,155.97 L964.00,154.34 L963.33,152.71 L962.66,151.09 L961.99,149.46 L961.31,147.83 L960.63,146.20 L959.94,144.57 L959.25,142.94 L958.56,141.31 L957.86,139.69 L957.15,138.06 L956.45,136.43 L955.73,134.80 L955.02,133.17 L954.30,131.54 L953.57,129.92 L952.85,128.29 L952.12,126.66 L951.38,125.03 L950.64,123.40 L949.90,121.77 L949.15,120.14 L948.40,118.52 L947.65,116.89 L946.89,115.26 L946.13,113.63 L945.37,112.00 L944.60,110.37 L943.83,108.74 L943.06,107.12 L942.28,105.49 L941.50,103.86 L940.72,102.23 L939.93,100.60 L939.15,98.97 L938.36,97.35 L937.56,95.72 L936.77,94.09 L935.97,92.46 L935.17,90.83 L934.36,89.20 L933.56,87.57 L932.75,85.95 L931.94,84.32 L931.12,82.69 L930.31,81.06 L929.49,79.43 L928.67,77.80 L927.85,76.17 L927.03,74.55 L926.20,72.92 L925.37,71.29 L924.55,69.66 L923.72,68.03 L922.88,66.40 L922.05,64.78 L921.22,63.15 L920.38,61.52 L919.54,59.89 L918.70,58.26 L917.86,56.63 L917.02,55.00 L916.18,53.38 L915.33,51.75 L914.49,50.12 L913.64,48.49 L912.80,46.86 L911.95,45.23 L911.10,43.60 L910.25,41.98 L909.41,40.35 L908.56,38.72 L907.71,37.09 L906.86,35.46 L906.00,33.83 L905.15,32.21 L904.30,30.58 L903.45,28.95 L902.60,27.32 M902.60,613.58 L903.03,611.95 L903.45,610.32 L903.88,608.69 L904.30,607.07 L904.73,605.44 L905.15,603.81 L905.58,602.18 L906.00,600.55 L906.43,598.92 L906.85,597.30 L907.28,595.67 L907.70,594.04 L908.12,592.41 L908.54,590.78 L908.97,589.15 L909.39,587.52 L909.81,585.90 L910.23,584.27 L910.65,582.64 L911.07,581.01 L911.49,579.38 L911.91,577.75 L912.33,576.12 L912.74,574.50 L913.16,572.87 L913.57,571.24 L913.99,569.61 L914.40,567.98 L914.81,566.35 L915.23,564.73 L915.64,563.10 L916.05,561.47 L916.45,559.84 L916.86,558.21 L917.27,556.58 L917.67,554.95 L918.08,553.33 L918.48,551.70 L918.88,550.07 L919.28,548.44 L919.68,546.81 L920.08,545.18 L920.48,543.55 L920.87,541.93 L921.27,540.30 L921.66,538.67 L922.05,537.04 L922.44,535.41 L922.83,533.78 L923.22,532.15 L923.60,530.53 L923.98,528.90 L924.37,527.27 L924.75,525.64 L925.12,524.01 L925.50,522.38 L925.88,520.76 L926.25,519.13 L926.62,517.50 L926.99,515.87 L927.36,514.24 L927.72,512.61 L928.09,510.98 L928.45,509.36 L928.81,507.73 L929.17,506.10 L929.52,504.47 L929.88,502.84 L930.23,501.21 L930.58,499.59 L930.93,497.96 L931.27,496.33 L931.62,494.70 L931.96,493.07 L932.30,491.44 L932.63,489.81 L932.97,488.19 L933.30,486.56 L933.63,484.93 L933.96,483.30 L934.28,481.67 L934.60,480.04 L934.92,478.41 L935.24,476.79 L935.56,475.16 L935.87,473.53 L936.18,471.90 L936.49,470.27 L936.79,468.64 L937.09,467.01 L937.39,465.39 L937.69,463.76 L937.98,462.13 L938.28,460.50 L938.56,458.87 L938.85,457.24 L939.13,455.62 L939.41,453.99 L939.69,452.36 L939.97,450.73 L940.24,449.10 L940.51,447.47 L940.78,445.84 L941.04,444.22 L941.30,442.59 L941.56,440.96 L941.81,439.33 L942.06,437.70 L942.31,436.07 L942.56,434.44 L942.80,432.82 L943.04,431.19 L943.28,429.56 L943.51,427.93 L943.74,426.30 L943.97,424.67 L944.19,423.05 L944.41,421.42 L944.63,419.79 L944.84,418.16 L945.06,416.53 L945.26,414.90 L945.47,413.27 L945.67,411.65 L945.87,410.02 L946.06,408.39 L946.25,406.76 L946.44,405.13 L946.63,403.50 L946.81,401.88 L946.99,400.25 L947.16,398.62 L947.33,396.99 L947.50,395.36 L947.67,393.73 L947.83,392.10 L947.99,390.48 L948.14,388.85 L948.29,387.22 L948.44,385.59 L948.58,383.96 L948.72,382.33 L948.86,380.70 L948.99,379.08 L949.12,377.45 L949.25,375.82 L949.37,374.19 L949.49,372.56 L949.61,370.93 L949.72,369.31 L949.83,367.68 L949.93,366.05 L950.03,364.42 L950.13,362.79 L950.22,361.16 L950.31,359.53 L950.40,357.91 L950.48,356.28 L950.56,354.65 L950.64,353.02 L950.71,351.39 L950.78,349.76 L950.84,348.13 L950.91,346.51 L950.96,344.88 L951.02,343.25 L951.07,341.62 L951.11,339.99 L951.16,338.36 L951.19,336.74 L951.23,335.11 L951.26,333.48 L951.29,331.85 L951.31,330.22 L951.33,328.59 L951.35,326.96 L951.36,325.34 L951.37,323.71 L951.38,322.08 L951.38,320.45 L951.38,318.82 L951.37,317.19 L951.36,315.56 L951.35,313.94 L951.33,312.31 L951.31,310.68 L951.29,309.05 L951.26,307.42 L951.23,305.79 L951.19,304.16 L951.16,302.54 L951.11,300.91 L951.07,299.28 L951.02,297.65 L950.96,296.02 L950.91,294.39 L950.84,292.77 L950.78,291.14 L950.71,289.51 L950.64,287.88 L950.56,286.25 L950.48,284.62 L950.40,282.99 L950.31,281.37 L950.22,279.74 L950.13,278.11 L950.03,276.48 L949.93,274.85 L949.83,273.22 L949.72,271.59 L949.61,269.97 L949.49,268.34 L949.37,266.71 L949.25,265.08 L949.12,263.45 L948.99,261.82 L948.86,260.20 L948.72,258.57 L948.58,256.94 L948.44,255.31 L948.29,253.68 L948.14,252.05 L947.99,250.42 L947.83,248.80 L947.67,247.17 L947.50,245.54 L947.33,243.91 L947.16,242.28 L946.99,240.65 L946.81,239.02 L946.63,237.40 L946.44,235.77 L946.25,234.14 L946.06,232.51 L945.87,230.88 L945.67,229.25 L945.47,227.63 L945.26,226.00 L945.06,224.37 L944.84,222.74 L944.63,221.11 L944.41,219.48 L944.19,217.85 L943.97,216.23 L943.74,214.60 L943.51,212.97 L943.28,211.34 L943.04,209.71 L942.80,208.08 L942.56,206.45 L942.31,204.83 L942.06,203.20 L941.81,201.57 L941.56,199.94 L941.30,198.31 L941.04,196.68 L940.78,195.06 L940.51,193.43 L940.24,191.80 L939.97,190.17 L939.69,188.54 L939.41,186.91 L939.13,185.28 L938.85,183.66 L938.56,182.03 L938.28,180.40 L937.98,178.77 L937.69,177.14 L937.39,175.51 L937.09,173.88 L936.79,172.26 L936.49,170.63 L936.18,169.00 L935.87,167.37 L935.56,165.74 L935.24,164.11 L934.92,162.49 L934.60,160.86 L934.28,159.23 L933.96,157.60 L933.63,155.97 L933.30,154.34 L932.97,152.71 L932.63,151.09 L932.30,149.46 L931.96,147.83 L931.62,146.20 L931.27,144.57 L930.93,142.94 L930.58,141.31 L930.23,139.69 L929.88,138.06 L929.52,136.43 L929.17,134.80 L928.81,133.17 L928.45,131.54 L928.09,129.92 L927.72,128.29 L927.36,126.66 L926.99,125.03 L926.62,123.40 L926.25,121.77 L925.88,120.14 L925.50,118.52 L925.12,116.89 L924.75,115.26 L924.37,113.63 L923.98,112.00 L923.60,110.37 L923.22,108.74 L922.83,107.12 L922.44,105.49 L922.05,103.86 L921.66,102.23 L921.27,100.60 L920.87,98.97 L920.48,97.35 L920.08,95.72 L919.68,94.09 L919.28,92.46 L918.88,90.83 L918.48,89.20 L918.08,87.57 L917.67,85.95 L917.27,84.32 L916.86,82.69 L916.45,81.06 L916.05,79.43 L915.64,77.80 L915.23,76.17 L914.81,74.55 L914.40,72.92 L913.99,71.29 L913.57,69.66 L913.16,68.03 L912.74,66.40 L912.33,64.78 L911.91,63.15 L911.49,61.52 L911.07,59.89 L910.65,58.26 L910.23,56.63 L909.81,55.00 L909.39,53.38 L908.97,51.75 L908.54,50.12 L908.12,48.49 L907.70,46.86 L907.28,45.23 L906.85,43.60 L906.43,41.98 L906.00,40.35 L905.58,38.72 L905.15,37.09 L904.73,35.46 L904.30,33.83 L903.88,32.21 L903.45,30.58 L903.03,28.95 L902.60,27.32 M902.60,613.58 L902.60,611.95 L902.60,610.32 L902.60,608.69 L902.60,607.07 L902.60,605.44 L902.60,603.81 L902.60,602.18 L902.60,600.55 L902.60,598.92 L902.60,597.30 L902.60,595.67 L902.60,594.04 L902.60,592.41 L902.60,590.78 L902.60,589.15 L902.60,587.52 L902.60,585.90 L902.60,584.27 L902.60,582.64 L902.60,581.01 L902.60,579.38 L902.60,577.75 L902.60,576.12 L902.60,574.50 L902.60,572.87 L902.60,571.24 L902.60,569.61 L902.60,567.98 L902.60,566.35 L902.60,564.73 L902.60,563.10 L902.60,561.47 L902.60,559.84 L902.60,558.21 L902.60,556.58 L902.60,554.95 L902.60,553.33 L902.60,551.70 L902.60,550.07 L902.60,548.44 L902.60,546.81 L902.60,545.18 L902.60,543.55 L902.60,541.93 L902.60,540.30 L902.60,538.67 L902.60,537.04 L902.60,535.41 L902.60,533.78 L902.60,532.15 L902.60,530.53 L902.60,528.90 L902.60,527.27 L902.60,525.64 L902.60,524.01 L902.60,522.38 L902.60,520.76 L902.60,519.13 L902.60,517.50 L902.60,515.87 L902.60,514.24 L902.60,512.61 L902.60,510.98 L902.60,509.36 L902.60,507.73 L902.60,506.10 L902.60,504.47 L902.60,502.84 L902.60,501.21 L902.60,499.59 L902.60,497.96 L902.60,496.33 L902.60,494.70 L902.60,493.07 L902.60,491.44 L902.60,489.81 L902.60,488.19 L902.60,486.56 L902.60,484.93 L902.60,483.30 L902.60,481.67 L902.60,480.04 L902.60,478.41 L902.60,476.79 L902.60,475.16 L902.60,473.53 L902.60,471.90 L902.60,470.27 L902.60,468.64 L902.60,467.01 L902.60,465.39 L902.60,463.76 L902.60,462.13 L902.60,460.50 L902.60,458.87 L902.60,457.24 L902.60,455.62 L902.60,453.99 L902.60,452.36 L902.60,450.73 L902.60,449.10 L902.60,447.47 L902.60,445.84 L902.60,444.22 L902.60,442.59 L902.60,440.96 L902.60,439.33 L902.60,437.70 L902.60,436.07 L902.60,434.44 L902.60,432.82 L902.60,431.19 L902.60,429.56 L902.60,427.93 L902.60,426.30 L902.60,424.67 L902.60,423.05 L902.60,421.42 L902.60,419.79 L902.60,418.16 L902.60,416.53 L902.60,414.90 L902.60,413.27 L902.60,411.65 L902.60,410.02 L902.60,408.39 L902.60,406.76 L902.60,405.13 L902.60,403.50 L902.60,401.88 L902.60,400.25 L902.60,398.62 L902.60,396.99 L902.60,395.36 L902.60,393.73 L902.60,392.10 L902.60,390.48 L902.60,388.85 L902.60,387.22 L902.60,385.59 L902.60,383.96 L902.60,382.33 L902.60,380.70 L902.60,379.08 L902.60,377.45 L902.60,375.82 L902.60,374.19 L902.60,372.56 L902.60,370.93 L902.60,369.31 L902.60,367.68 L902.60,366.05 L902.60,364.42 L902.60,362.79 L902.60,361.16 L902.60,359.53 L902.60,357.91 L902.60,356.28 L902.60,354.65 L902.60,353.02 L902.60,351.39 L902.60,349.76 L902.60,348.13 L902.60,346.51 L902.60,344.88 L902.60,343.25 L902.60,341.62 L902.60,339.99 L902.60,338.36 L902.60,336.74 L902.60,335.11 L902.60,333.48 L902.60,331.85 L902.60,330.22 L902.60,328.59 L902.60,326.96 L902.60,325.34 L902.60,323.71 L902.60,322.08 L902.60,320.45 L902.60,318.82 L902.60,317.19 L902.60,315.56 L902.60,313.94 L902.60,312.31 L902.60,310.68 L902.60,309.05 L902.60,307.42 L902.60,305.79 L902.60,304.16 L902.60,302.54 L902.60,300.91 L902.60,299.28 L902.60,297.65 L902.60,296.02 L902.60,294.39 L902.60,292.77 L902.60,291.14 L902.60,289.51 L902.60,287.88 L902.60,286.25 L902.60,284.62 L902.60,282.99 L902.60,281.37 L902.60,279.74 L902.60,278.11 L902.60,276.48 L902.60,274.85 L902.60,273.22 L902.60,271.59 L902.60,269.97 L902.60,268.34 L902.60,266.71 L902.60,265.08 L902.60,263.45 L902.60,261.82 L902.60,260.20 L902.60,258.57 L902.60,256.94 L902.60,255.31 L902.60,253.68 L902.60,252.05 L902.60,250.42 L902.60,248.80 L902.60,247.17 L902.60,245.54 L902.60,243.91 L902.60,242.28 L902.60,240.65 L902.60,239.02 L902.60,237.40 L902.60,235.77 L902.60,234.14 L902.60,232.51 L902.60,230.88 L902.60,229.25 L902.60,227.63 L902.60,226.00 L902.60,224.37 L902.60,222.74 L902.60,221.11 L902.60,219.48 L902.60,217.85 L902.60,216.23 L902.60,214.60 L902.60,212.97 L902.60,211.34 L902.60,209.71 L902.60,208.08 L902.60,206.45 L902.60,204.83 L902.60,203.20 L902.60,201.57 L902.60,199.94 L902.60,198.31 L902.60,196.68 L902.60,195.06 L902.60,193.43 L902.60,191.80 L902.60,190.17 L902.60,188.54 L902.60,186.91 L902.60,185.28 L902.60,183.66 L902.60,182.03 L902.60,180.40 L902.60,178.77 L902.60,177.14 L902.60,175.51 L902.60,173.88 L902.60,172.26 L902.60,170.63 L902.60,169.00 L902.60,167.37 L902.60,165.74 L902.60,164.11 L902.60,162.49 L902.60,160.86 L902.60,159.23 L902.60,157.60 L902.60,155.97 L902.60,154.34 L902.60,152.71 L902.60,151.09 L902.60,149.46 L902.60,147.83 L902.60,146.20 L902.60,144.57 L902.60,142.94 L902.60,141.31 L902.60,139.69 L902.60,138.06 L902.60,136.43 L902.60,134.80 L902.60,133.17 L902.60,131.54 L902.60,129.92 L902.60,128.29 L902.60,126.66 L902.60,125.03 L902.60,123.40 L902.60,121.77 L902.60,120.14 L902.60,118.52 L902.60,116.89 L902.60,115.26 L902.60,113.63 L902.60,112.00 L902.60,110.37 L902.60,108.74 L902.60,107.12 L902.60,105.49 L902.60,103.86 L902.60,102.23 L902.60,100.60 L902.60,98.97 L902.60,97.35 L902.60,95.72 L902.60,94.09 L902.60,92.46 L902.60,90.83 L902.60,89.20 L902.60,87.57 L902.60,85.95 L902.60,84.32 L902.60,82.69 L902.60,81.06 L902.60,79.43 L902.60,77.80 L902.60,76.17 L902.60,74.55 L902.60,72.92 L902.60,71.29 L902.60,69.66 L902.60,68.03 L902.60,66.40 L902.60,64.78 L902.60,63.15 L902.60,61.52 L902.60,59.89 L902.60,58.26 L902.60,56.63 L902.60,55.00 L902.60,53.38 L902.60,51.75 L902.60,50.12 L902.60,48.49 L902.60,46.86 L902.60,45.23 L902.60,43.60 L902.60,41.98 L902.60,40.35 L902.60,38.72 L902.60,37.09 L902.60,35.46 L902.60,33.83 L902.60,32.21 L902.60,30.58 L902.60,28.95 L902.60,27.32 M902.60,613.58 L902.17,611.95 L901.75,610.32 L901.32,608.69 L900.90,607.07 L900.47,605.44 L900.05,603.81 L899.62,602.18 L899.20,600.55 L898.77,598.92 L898.35,597.30 L897.92,595.67 L897.50,594.04 L897.08,592.41 L896.66,590.78 L896.23,589.15 L895.81,587.52 L895.39,585.90 L894.97,584.27 L894.55,582.64 L894.13,581.01 L893.71,579.38 L893.29,577.75 L892.87,576.12 L892.46,574.50 L892.04,572.87 L891.63,571.24 L891.21,569.61 L890.80,567.98 L890.39,566.35 L889.97,564.73 L889.56,563.10 L889.15,561.47 L888.75,559.84 L888.34,558.21 L887.93,556.58 L887.53,554.95 L887.12,553.33 L886.72,551.70 L886.32,550.07 L885.92,548.44 L885.52,546.81 L885.12,545.18 L884.72,543.55 L884.33,541.93 L883.93,540.30 L883.54,538.67 L883.15,537.04 L882.76,535.41 L882.37,533.78 L881.98,532.15 L881.60,530.53 L881.22,528.90 L880.83,527.27 L880.45,525.64 L880.08,524.01 L879.70,522.38 L879.32,520.76 L878.95,519.13 L878.58,517.50 L878.21,515.87 L877.84,514.24 L877.48,512.61 L877.11,510.98 L876.75,509.36 L876.39,507.73 L876.03,506.10 L875.68,504.47 L875.32,502.84 L874.97,501.21 L874.62,499.59 L874.27,497.96 L873.93,496.33 L873.58,494.70 L873.24,493.07 L872.90,491.44 L872.57,489.81 L872.23,488.19 L871.90,486.56 L871.57,484.93 L871.24,483.30 L870.92,481.67 L870.60,480.04 L870.28,478.41 L869.96,476.79 L869.64,475.16 L869.33,473.53 L869.02,471.90 L868.71,470.27 L868.41,468.64 L868.11,467.01 L867.81,465.39 L867.51,463.76 L867.22,462.13 L866.92,460.50 L866.64,458.87 L866.35,457.24 L866.07,455.62 L865.79,453.99 L865.51,452.36 L865.23,450.73 L864.96,449.10 L864.69,447.47 L864.42,445.84 L864.16,444.22 L863.90,442.59 L863.64,440.96 L863.39,439.33 L863.14,437.70 L862.89,436.07 L862.64,434.44 L862.40,432.82 L862.16,431.19 L861.92,429.56 L861.69,427.93 L861.46,426.30 L861.23,424.67 L861.01,423.05 L860.79,421.42 L860.57,419.79 L860.36,418.16 L860.14,416.53 L859.94,414.90 L859.73,413.27 L859.53,411.65 L859.33,410.02 L859.14,408.39 L858.95,406.76 L858.76,405.13 L858.57,403.50 L858.39,401.88 L858.21,400.25 L858.04,398.62 L857.87,396.99 L857.70,395.36 L857.53,393.73 L857.37,392.10 L857.21,390.48 L857.06,388.85 L856.91,387.22 L856.76,385.59 L856.62,383.96 L856.48,382.33 L856.34,380.70 L856.21,379.08 L856.08,377.45 L855.95,375.82 L855.83,374.19 L855.71,372.56 L855.59,370.93 L855.48,369.31 L855.37,367.68 L855.27,366.05 L855.17,364.42 L855.07,362.79 L854.98,361.16 L854.89,359.53 L854.80,357.91 L854.72,356.28 L854.64,354.65 L854.56,353.02 L854.49,351.39 L854.42,349.76 L854.36,348.13 L854.29,346.51 L854.24,344.88 L854.18,343.25 L854.13,341.62 L854.09,339.99 L854.04,338.36 L854.01,336.74 L853.97,335.11 L853.94,333.48 L853.91,331.85 L853.89,330.22 L853.87,328.59 L853.85,326.96 L853.84,325.34 L853.83,323.71 L853.82,322.08 L853.82,320.45 L853.82,318.82 L853.83,317.19 L853.84,315.56 L853.85,313.94 L853.87,312.31 L853.89,310.68 L853.91,309.05 L853.94,307.42 L853.97,305.79 L854.01,304.16 L854.04,302.54 L854.09,300.91 L854.13,299.28 L854.18,297.65 L854.24,296.02 L854.29,294.39 L854.36,292.77 L854.42,291.14 L854.49,289.51 L854.56,287.88 L854.64,286.25 L854.72,284.62 L854.80,282.99 L854.89,281.37 L854.98,279.74 L855.07,278.11 L855.17,276.48 L855.27,274.85 L855.37,273.22 L855.48,271.59 L855.59,269.97 L855.71,268.34 L855.83,266.71 L855.95,265.08 L856.08,263.45 L856.21,261.82 L856.34,260.20 L856.48,258.57 L856.62,256.94 L856.76,255.31 L856.91,253.68 L857.06,252.05 L857.21,250.42 L857.37,248.80 L857.53,247.17 L857.70,245.54 L857.87,243.91 L858.04,242.28 L858.21,240.65 L858.39,239.02 L858.57,237.40 L858.76,235.77 L858.95,234.14 L859.14,232.51 L859.33,230.88 L859.53,229.25 L859.73,227.63 L859.94,226.00 L860.14,224.37 L860.36,222.74 L860.57,221.11 L860.79,219.48 L861.01,217.85 L861.23,216.23 L861.46,214.60 L861.69,212.97 L861.92,211.34 L862.16,209.71 L862.40,208.08 L862.64,206.45 L862.89,204.83 L863.14,203.20 L863.39,201.57 L863.64,199.94 L863.90,198.31 L864.16,196.68 L864.42,195.06 L864.69,193.43 L864.96,191.80 L865.23,190.17 L865.51,188.54 L865.79,186.91 L866.07,185.28 L866.35,183.66 L866.64,182.03 L866.92,180.40 L867.22,178.77 L867.51,177.14 L867.81,175.51 L868.11,173.88 L868.41,172.26 L868.71,170.63 L869.02,169.00 L869.33,167.37 L869.64,165.74 L869.96,164.11 L870.28,162.49 L870.60,160.86 L870.92,159.23 L871.24,157.60 L871.57,155.97 L871.90,154.34 L872.23,152.71 L872.57,151.09 L872.90,149.46 L873.24,147.83 L873.58,146.20 L873.93,144.57 L874.27,142.94 L874.62,141.31 L874.97,139.69 L875.32,138.06 L875.68,136.43 L876.03,134.80 L876.39,133.17 L876.75,131.54 L877.11,129.92 L877.48,128.29 L877.84,126.66 L878.21,125.03 L878.58,123.40 L878.95,121.77 L879.32,120.14 L879.70,118.52 L880.08,116.89 L880.45,115.26 L880.83,113.63 L881.22,112.00 L881.60,110.37 L881.98,108.74 L882.37,107.12 L882.76,105.49 L883.15,103.86 L883.54,102.23 L883.93,100.60 L884.33,98.97 L884.72,97.35 L885.12,95.72 L885.52,94.09 L885.92,92.46 L886.32,90.83 L886.72,89.20 L887.12,87.57 L887.53,85.95 L887.93,84.32 L888.34,82.69 L888.75,81.06 L889.15,79.43 L889.56,77.80 L889.97,76.17 L890.39,74.55 L890.80,72.92 L891.21,71.29 L891.63,69.66 L892.04,68.03 L892.46,66.40 L892.87,64.78 L893.29,63.15 L893.71,61.52 L894.13,59.89 L894.55,58.26 L894.97,56.63 L895.39,55.00 L895.81,53.38 L896.23,51.75 L896.66,50.12 L897.08,48.49 L897.50,46.86 L897.92,45.23 L898.35,43.60 L898.77,41.98 L899.20,40.35 L899.62,38.72 L900.05,37.09 L900.47,35.46 L900.90,33.83 L901.32,32.21 L901.75,30.58 L902.17,28.95 L902.60,27.32 M902.60,613.58 L901.75,611.95 L900.90,610.32 L900.05,608.69 L899.20,607.07 L898.34,605.44 L897.49,603.81 L896.64,602.18 L895.79,600.55 L894.95,598.92 L894.10,597.30 L893.25,595.67 L892.40,594.04 L891.56,592.41 L890.71,590.78 L889.87,589.15 L889.02,587.52 L888.18,585.90 L887.34,584.27 L886.50,582.64 L885.66,581.01 L884.82,579.38 L883.98,577.75 L883.15,576.12 L882.32,574.50 L881.48,572.87 L880.65,571.24 L879.83,569.61 L879.00,567.98 L878.17,566.35 L877.35,564.73 L876.53,563.10 L875.71,561.47 L874.89,559.84 L874.08,558.21 L873.26,556.58 L872.45,554.95 L871.64,553.33 L870.84,551.70 L870.03,550.07 L869.23,548.44 L868.43,546.81 L867.64,545.18 L866.84,543.55 L866.05,541.93 L865.27,540.30 L864.48,538.67 L863.70,537.04 L862.92,535.41 L862.14,533.78 L861.37,532.15 L860.60,530.53 L859.83,528.90 L859.07,527.27 L858.31,525.64 L857.55,524.01 L856.80,522.38 L856.05,520.76 L855.30,519.13 L854.56,517.50 L853.82,515.87 L853.08,514.24 L852.35,512.61 L851.63,510.98 L850.90,509.36 L850.18,507.73 L849.47,506.10 L848.75,504.47 L848.05,502.84 L847.34,501.21 L846.64,499.59 L845.95,497.96 L845.26,496.33 L844.57,494.70 L843.89,493.07 L843.21,491.44 L842.54,489.81 L841.87,488.19 L841.20,486.56 L840.54,484.93 L839.89,483.30 L839.24,481.67 L838.59,480.04 L837.95,478.41 L837.32,476.79 L836.69,475.16 L836.06,473.53 L835.44,471.90 L834.83,470.27 L834.22,468.64 L833.61,467.01 L833.02,465.39 L832.42,463.76 L831.83,462.13 L831.25,460.50 L830.67,458.87 L830.10,457.24 L829.53,455.62 L828.97,453.99 L828.41,452.36 L827.86,450.73 L827.32,449.10 L826.78,447.47 L826.25,445.84 L825.72,444.22 L825.20,442.59 L824.69,440.96 L824.18,439.33 L823.67,437.70 L823.17,436.07 L822.68,434.44 L822.20,432.82 L821.72,431.19 L821.25,429.56 L820.78,427.93 L820.32,426.30 L819.86,424.67 L819.42,423.05 L818.97,421.42 L818.54,419.79 L818.11,418.16 L817.69,416.53 L817.27,414.90 L816.86,413.27 L816.46,411.65 L816.06,410.02 L815.67,408.39 L815.29,406.76 L814.91,405.13 L814.54,403.50 L814.18,401.88 L813.82,400.25 L813.47,398.62 L813.13,396.99 L812.80,395.36 L812.47,393.73 L812.14,392.10 L811.83,390.48 L811.52,388.85 L811.22,387.22 L810.92,385.59 L810.64,383.96 L810.36,382.33 L810.08,380.70 L809.81,379.08 L809.56,377.45 L809.30,375.82 L809.06,374.19 L808.82,372.56 L808.59,370.93 L808.36,369.31 L808.15,367.68 L807.94,366.05 L807.74,364.42 L807.54,362.79 L807.35,361.16 L807.17,359.53 L807.00,357.91 L806.83,356.28 L806.67,354.65 L806.52,353.02 L806.38,351.39 L806.24,349.76 L806.11,348.13 L805.99,346.51 L805.87,344.88 L805.77,343.25 L805.67,341.62 L805.57,339.99 L805.49,338.36 L805.41,336.74 L805.34,335.11 L805.28,333.48 L805.22,331.85 L805.17,330.22 L805.13,328.59 L805.10,326.96 L805.07,325.34 L805.05,323.71 L805.04,322.08 L805.04,320.45 L805.04,318.82 L805.05,317.19 L805.07,315.56 L805.10,313.94 L805.13,312.31 L805.17,310.68 L805.22,309.05 L805.28,307.42 L805.34,305.79 L805.41,304.16 L805.49,302.54 L805.57,300.91 L805.67,299.28 L805.77,297.65 L805.87,296.02 L805.99,294.39 L806.11,292.77 L806.24,291.14 L806.38,289.51 L806.52,287.88 L806.67,286.25 L806.83,284.62 L807.00,282.99 L807.17,281.37 L807.35,279.74 L807.54,278.11 L807.74,276.48 L807.94,274.85 L808.15,273.22 L808.36,271.59 L808.59,269.97 L808.82,268.34 L809.06,266.71 L809.30,265.08 L809.56,263.45 L809.81,261.82 L810.08,260.20 L810.36,258.57 L810.64,256.94 L810.92,255.31 L811.22,253.68 L811.52,252.05 L811.83,250.42 L812.14,248.80 L812.47,247.17 L812.80,245.54 L813.13,243.91 L813.47,242.28 L813.82,240.65 L814.18,239.02 L814.54,237.40 L814.91,235.77 L815.29,234.14 L815.67,232.51 L816.06,230.88 L816.46,229.25 L816.86,227.63 L817.27,226.00 L817.69,224.37 L818.11,222.74 L818.54,221.11 L818.97,219.48 L819.42,217.85 L819.86,216.23 L820.32,214.60 L820.78,212.97 L821.25,211.34 L821.72,209.71 L822.20,208.08 L822.68,206.45 L823.17,204.83 L823.67,203.20 L824.18,201.57 L824.69,199.94 L825.20,198.31 L825.72,196.68 L826.25,195.06 L826.78,193.43 L827.32,191.80 L827.86,190.17 L828.41,188.54 L828.97,186.91 L829.53,185.28 L830.10,183.66 L830.67,182.03 L831.25,180.40 L831.83,178.77 L832.42,177.14 L833.02,175.51 L833.61,173.88 L834.22,172.26 L834.83,170.63 L835.44,169.00 L836.06,167.37 L836.69,165.74 L837.32,164.11 L837.95,162.49 L838.59,160.86 L839.24,159.23 L839.89,157.60 L840.54,155.97 L841.20,154.34 L841.87,152.71 L842.54,151.09 L843.21,149.46 L843.89,147.83 L844.57,146.20 L845.26,144.57 L845.95,142.94 L846.64,141.31 L847.34,139.69 L848.05,138.06 L848.75,136.43 L849.47,134.80 L850.18,133.17 L850.90,131.54 L851.63,129.92 L852.35,128.29 L853.08,126.66 L853.82,125.03 L854.56,123.40 L855.30,121.77 L856.05,120.14 L856.80,118.52 L857.55,116.89 L858.31,115.26 L859.07,113.63 L859.83,112.00 L860.60,110.37 L861.37,108.74 L862.14,107.12 L862.92,105.49 L863.70,103.86 L864.48,102.23 L865.27,100.60 L866.05,98.97 L866.84,97.35 L867.64,95.72 L868.43,94.09 L869.23,92.46 L870.03,90.83 L870.84,89.20 L871.64,87.57 L872.45,85.95 L873.26,84.32 L874.08,82.69 L874.89,81.06 L875.71,79.43 L876.53,77.80 L877.35,76.17 L878.17,74.55 L879.00,72.92 L879.83,71.29 L880.65,69.66 L881.48,68.03 L882.32,66.40 L883.15,64.78 L883.98,63.15 L884.82,61.52 L885.66,59.89 L886.50,58.26 L887.34,56.63 L888.18,55.00 L889.02,53.38 L889.87,51.75 L890.71,50.12 L891.56,48.49 L892.40,46.86 L893.25,45.23 L894.10,43.60 L894.95,41.98 L895.79,40.35 L896.64,38.72 L897.49,37.09 L898.34,35.46 L899.20,33.83 L900.05,32.21 L900.90,30.58 L901.75,28.95 L902.60,27.32 M902.60,613.58 L901.32,611.95 L900.05,610.32 L898.77,608.69 L897.49,607.07 L896.22,605.44 L894.94,603.81 L893.67,602.18 L892.39,600.55 L891.12,598.92 L889.85,597.30 L888.57,595.67 L887.30,594.04 L886.03,592.41 L884.77,590.78 L883.50,589.15 L882.23,587.52 L880.97,585.90 L879.71,584.27 L878.45,582.64 L877.19,581.01 L875.93,579.38 L874.68,577.75 L873.42,576.12 L872.17,574.50 L870.93,572.87 L869.68,571.24 L868.44,569.61 L867.20,567.98 L865.96,566.35 L864.72,564.73 L863.49,563.10 L862.26,561.47 L861.04,559.84 L859.81,558.21 L858.59,556.58 L857.38,554.95 L856.17,553.33 L854.96,551.70 L853.75,550.07 L852.55,548.44 L851.35,546.81 L850.16,545.18 L848.97,543.55 L847.78,541.93 L846.60,540.30 L845.42,538.67 L844.25,537.04 L843.08,535.41 L841.91,533.78 L840.75,532.15 L839.60,530.53 L838.45,528.90 L837.30,527.27 L836.16,525.64 L835.03,524.01 L833.90,522.38 L832.77,520.76 L831.65,519.13 L830.54,517.50 L829.43,515.87 L828.33,514.24 L827.23,512.61 L826.14,510.98 L825.05,509.36 L823.97,507.73 L822.90,506.10 L821.83,504.47 L820.77,502.84 L819.71,501.21 L818.66,499.59 L817.62,497.96 L816.58,496.33 L815.55,494.70 L814.53,493.07 L813.51,491.44 L812.50,489.81 L811.50,488.19 L810.51,486.56 L809.52,484.93 L808.53,483.30 L807.56,481.67 L806.59,480.04 L805.63,478.41 L804.68,476.79 L803.73,475.16 L802.80,473.53 L801.87,471.90 L800.94,470.27 L800.03,468.64 L799.12,467.01 L798.22,465.39 L797.33,463.76 L796.45,462.13 L795.57,460.50 L794.71,458.87 L793.85,457.24 L793.00,455.62 L792.16,453.99 L791.32,452.36 L790.50,450.73 L789.68,449.10 L788.87,447.47 L788.07,445.84 L787.28,444.22 L786.50,442.59 L785.73,440.96 L784.96,439.33 L784.21,437.70 L783.46,436.07 L782.73,434.44 L782.00,432.82 L781.28,431.19 L780.57,429.56 L779.87,427.93 L779.18,426.30 L778.50,424.67 L777.82,423.05 L777.16,421.42 L776.51,419.79 L775.87,418.16 L775.23,416.53 L774.61,414.90 L773.99,413.27 L773.39,411.65 L772.79,410.02 L772.21,408.39 L771.64,406.76 L771.07,405.13 L770.52,403.50 L769.97,401.88 L769.44,400.25 L768.91,398.62 L768.40,396.99 L767.89,395.36 L767.40,393.73 L766.92,392.10 L766.44,390.48 L765.98,388.85 L765.53,387.22 L765.09,385.59 L764.65,383.96 L764.23,382.33 L763.82,380.70 L763.42,379.08 L763.03,377.45 L762.65,375.82 L762.29,374.19 L761.93,372.56 L761.58,370.93 L761.25,369.31 L760.92,367.68 L760.61,366.05 L760.30,364.42 L760.01,362.79 L759.73,361.16 L759.46,359.53 L759.20,357.91 L758.95,356.28 L758.71,354.65 L758.48,353.02 L758.27,351.39 L758.06,349.76 L757.87,348.13 L757.68,346.51 L757.51,344.88 L757.35,343.25 L757.20,341.62 L757.06,339.99 L756.93,338.36 L756.82,336.74 L756.71,335.11 L756.62,333.48 L756.53,331.85 L756.46,330.22 L756.40,328.59 L756.35,326.96 L756.31,325.34 L756.28,323.71 L756.27,322.08 L756.26,320.45 L756.27,318.82 L756.28,317.19 L756.31,315.56 L756.35,313.94 L756.40,312.31 L756.46,310.68 L756.53,309.05 L756.62,307.42 L756.71,305.79 L756.82,304.16 L756.93,302.54 L757.06,300.91 L757.20,299.28 L757.35,297.65 L757.51,296.02 L757.68,294.39 L757.87,292.77 L758.06,291.14 L758.27,289.51 L758.48,287.88 L758.71,286.25 L758.95,284.62 L759.20,282.99 L759.46,281.37 L759.73,279.74 L760.01,278.11 L760.30,276.48 L760.61,274.85 L760.92,273.22 L761.25,271.59 L761.58,269.97 L761.93,268.34 L762.29,266.71 L762.65,265.08 L763.03,263.45 L763.42,261.82 L763.82,260.20 L764.23,258.57 L764.65,256.94 L765.09,255.31 L765.53,253.68 L765.98,252.05 L766.44,250.42 L766.92,248.80 L767.40,247.17 L767.89,245.54 L768.40,243.91 L768.91,242.28 L769.44,240.65 L769.97,239.02 L770.52,237.40 L771.07,235.77 L771.64,234.14 L772.21,232.51 L772.79,230.88 L773.39,229.25 L773.99,227.63 L774.61,226.00 L775.23,224.37 L775.87,222.74 L776.51,221.11 L777.16,219.48 L777.82,217.85 L778.50,216.23 L779.18,214.60 L779.87,212.97 L780.57,211.34 L781.28,209.71 L782.00,208.08 L782.73,206.45 L783.46,204.83 L784.21,203.20 L784.96,201.57 L785.73,199.94 L786.50,198.31 L787.28,196.68 L788.07,195.06 L788.87,193.43 L789.68,191.80 L790.50,190.17 L791.32,188.54 L792.16,186.91 L793.00,185.28 L793.85,183.66 L794.71,182.03 L795.57,180.40 L796.45,178.77 L797.33,177.14 L798.22,175.51 L799.12,173.88 L800.03,172.26 L800.94,170.63 L801.87,169.00 L802.80,167.37 L803.73,165.74 L804.68,164.11 L805.63,162.49 L806.59,160.86 L807.56,159.23 L808.53,157.60 L809.52,155.97 L810.51,154.34 L811.50,152.71 L812.50,151.09 L813.51,149.46 L814.53,147.83 L815.55,146.20 L816.58,144.57 L817.62,142.94 L818.66,141.31 L819.71,139.69 L820.77,138.06 L821.83,136.43 L822.90,134.80 L823.97,133.17 L825.05,131.54 L826.14,129.92 L827.23,128.29 L828.33,126.66 L829.43,125.03 L830.54,123.40 L831.65,121.77 L832.77,120.14 L833.90,118.52 L835.03,116.89 L836.16,115.26 L837.30,113.63 L838.45,112.00 L839.60,110.37 L840.75,108.74 L841.91,107.12 L843.08,105.49 L844.25,103.86 L845.42,102.23 L846.60,100.60 L847.78,98.97 L848.97,97.35 L850.16,95.72 L851.35,94.09 L852.55,92.46 L853.75,90.83 L854.96,89.20 L856.17,87.57 L857.38,85.95 L858.59,84.32 L859.81,82.69 L861.04,81.06 L862.26,79.43 L863.49,77.80 L864.72,76.17 L865.96,74.55 L867.20,72.92 L868.44,71.29 L869.68,69.66 L870.93,68.03 L872.17,66.40 L873.42,64.78 L874.68,63.15 L875.93,61.52 L877.19,59.89 L878.45,58.26 L879.71,56.63 L880.97,55.00 L882.23,53.38 L883.50,51.75 L884.77,50.12 L886.03,48.49 L887.30,46.86 L888.57,45.23 L889.85,43.60 L891.12,41.98 L892.39,40.35 L893.67,38.72 L894.94,37.09 L896.22,35.46 L897.49,33.83 L898.77,32.21 L900.05,30.58 L901.32,28.95 L902.60,27.32 M902.60,613.58 L900.90,611.95 L899.19,610.32 L897.49,608.69 L895.79,607.07 L894.09,605.44 L892.39,603.81 L890.69,602.18 L888.99,600.55 L887.29,598.92 L885.59,597.30 L883.90,595.67 L882.20,594.04 L880.51,592.41 L878.82,590.78 L877.13,589.15 L875.44,587.52 L873.76,585.90 L872.08,584.27 L870.40,582.64 L868.72,581.01 L867.04,579.38 L865.37,577.75 L863.70,576.12 L862.03,574.50 L860.37,572.87 L858.71,571.24 L857.05,569.61 L855.40,567.98 L853.75,566.35 L852.10,564.73 L850.46,563.10 L848.82,561.47 L847.18,559.84 L845.55,558.21 L843.93,556.58 L842.30,554.95 L840.69,553.33 L839.08,551.70 L837.47,550.07 L835.87,548.44 L834.27,546.81 L832.68,545.18 L831.09,543.55 L829.51,541.93 L827.93,540.30 L826.36,538.67 L824.80,537.04 L823.24,535.41 L821.69,533.78 L820.14,532.15 L818.60,530.53 L817.07,528.90 L815.54,527.27 L814.02,525.64 L812.50,524.01 L811.00,522.38 L809.50,520.76 L808.00,519.13 L806.52,517.50 L805.04,515.87 L803.57,514.24 L802.11,512.61 L800.65,510.98 L799.20,509.36 L797.76,507.73 L796.33,506.10 L794.91,504.47 L793.49,502.84 L792.08,501.21 L790.68,499.59 L789.29,497.96 L787.91,496.33 L786.54,494.70 L785.17,493.07 L783.82,491.44 L782.47,489.81 L781.13,488.19 L779.81,486.56 L778.49,484.93 L777.18,483.30 L775.88,481.67 L774.59,480.04 L773.31,478.41 L772.04,476.79 L770.78,475.16 L769.53,473.53 L768.29,471.90 L767.06,470.27 L765.84,468.64 L764.63,467.01 L763.43,465.39 L762.24,463.76 L761.06,462.13 L759.90,460.50 L758.74,458.87 L757.60,457.24 L756.46,455.62 L755.34,453.99 L754.23,452.36 L753.13,450.73 L752.04,449.10 L750.96,447.47 L749.90,445.84 L748.84,444.22 L747.80,442.59 L746.77,440.96 L745.75,439.33 L744.74,437.70 L743.75,436.07 L742.77,434.44 L741.80,432.82 L740.84,431.19 L739.89,429.56 L738.96,427.93 L738.04,426.30 L737.13,424.67 L736.23,423.05 L735.35,421.42 L734.48,419.79 L733.62,418.16 L732.78,416.53 L731.94,414.90 L731.13,413.27 L730.32,411.65 L729.53,410.02 L728.75,408.39 L727.98,406.76 L727.23,405.13 L726.49,403.50 L725.76,401.88 L725.05,400.25 L724.35,398.62 L723.66,396.99 L722.99,395.36 L722.33,393.73 L721.69,392.10 L721.06,390.48 L720.44,388.85 L719.84,387.22 L719.25,385.59 L718.67,383.96 L718.11,382.33 L717.56,380.70 L717.03,379.08 L716.51,377.45 L716.01,375.82 L715.52,374.19 L715.04,372.56 L714.58,370.93 L714.13,369.31 L713.70,367.68 L713.28,366.05 L712.87,364.42 L712.48,362.79 L712.11,361.16 L711.74,359.53 L711.40,357.91 L711.06,356.28 L710.75,354.65 L710.44,353.02 L710.16,351.39 L709.88,349.76 L709.62,348.13 L709.38,346.51 L709.15,344.88 L708.93,343.25 L708.73,341.62 L708.55,339.99 L708.38,338.36 L708.22,336.74 L708.08,335.11 L707.96,333.48 L707.84,331.85 L707.75,330.22 L707.67,328.59 L707.60,326.96 L707.55,325.34 L707.51,323.71 L707.49,322.08 L707.48,320.45 L707.49,318.82 L707.51,317.19 L707.55,315.56 L707.60,313.94 L707.67,312.31 L707.75,310.68 L707.84,309.05 L707.96,307.42 L708.08,305.79 L708.22,304.16 L708.38,302.54 L708.55,300.91 L708.73,299.28 L708.93,297.65 L709.15,296.02 L709.38,294.39 L709.62,292.77 L709.88,291.14 L710.16,289.51 L710.44,287.88 L710.75,286.25 L711.06,284.62 L711.40,282.99 L711.74,281.37 L712.11,279.74 L712.48,278.11 L712.87,276.48 L713.28,274.85 L713.70,273.22 L714.13,271.59 L714.58,269.97 L715.04,268.34 L715.52,266.71 L716.01,265.08 L716.51,263.45 L717.03,261.82 L717.56,260.20 L718.11,258.57 L718.67,256.94 L719.25,255.31 L719.84,253.68 L720.44,252.05 L721.06,250.42 L721.69,248.80 L722.33,247.17 L722.99,245.54 L723.66,243.91 L724.35,242.28 L725.05,240.65 L725.76,239.02 L726.49,237.40 L727.23,235.77 L727.98,234.14 L728.75,232.51 L729.53,230.88 L730.32,229.25 L731.13,227.63 L731.94,226.00 L732.78,224.37 L733.62,222.74 L734.48,221.11 L735.35,219.48 L736.23,217.85 L737.13,216.23 L738.04,214.60 L738.96,212.97 L739.89,211.34 L740.84,209.71 L741.80,208.08 L742.77,206.45 L743.75,204.83 L744.74,203.20 L745.75,201.57 L746.77,199.94 L747.80,198.31 L748.84,196.68 L749.90,195.06 L750.96,193.43 L752.04,191.80 L753.13,190.17 L754.23,188.54 L755.34,186.91 L756.46,185.28 L757.60,183.66 L758.74,182.03 L759.90,180.40 L761.06,178.77 L762.24,177.14 L763.43,175.51 L764.63,173.88 L765.84,172.26 L767.06,170.63 L768.29,169.00 L769.53,167.37 L770.78,165.74 L772.04,164.11 L773.31,162.49 L774.59,160.86 L775.88,159.23 L777.18,157.60 L778.49,155.97 L779.81,154.34 L781.13,152.71 L782.47,151.09 L783.82,149.46 L785.17,147.83 L786.54,146.20 L787.91,144.57 L789.29,142.94 L790.68,141.31 L792.08,139.69 L793.49,138.06 L794.91,136.43 L796.33,134.80 L797.76,133.17 L799.20,131.54 L800.65,129.92 L802.11,128.29 L803.57,126.66 L805.04,125.03 L806.52,123.40 L808.00,121.77 L809.50,120.14 L811.00,118.52 L812.50,116.89 L814.02,115.26 L815.54,113.63 L817.07,112.00 L818.60,110.37 L820.14,108.74 L821.69,107.12 L823.24,105.49 L824.80,103.86 L826.36,102.23 L827.93,100.60 L829.51,98.97 L831.09,97.35 L832.68,95.72 L834.27,94.09 L835.87,92.46 L837.47,90.83 L839.08,89.20 L840.69,87.57 L842.30,85.95 L843.93,84.32 L845.55,82.69 L847.18,81.06 L848.82,79.43 L850.46,77.80 L852.10,76.17 L853.75,74.55 L855.40,72.92 L857.05,71.29 L858.71,69.66 L860.37,68.03 L862.03,66.40 L863.70,64.78 L865.37,63.15 L867.04,61.52 L868.72,59.89 L870.40,58.26 L872.08,56.63 L873.76,55.00 L875.44,53.38 L877.13,51.75 L878.82,50.12 L880.51,48.49 L882.20,46.86 L883.90,45.23 L885.59,43.60 L887.29,41.98 L888.99,40.35 L890.69,38.72 L892.39,37.09 L894.09,35.46 L895.79,33.83 L897.49,32.21 L899.19,30.58 L900.90,28.95 L902.60,27.32 M902.60,613.58 L900.47,611.95 L898.34,610.32 L896.22,608.69 L894.09,607.07 L891.96,605.44 L889.84,603.81 L887.71,602.18 L885.59,600.55 L883.46,598.92 L881.34,597.30 L879.22,595.67 L877.11,594.04 L874.99,592.41 L872.88,590.78 L870.76,589.15 L868.66,587.52 L866.55,585.90 L864.45,584.27 L862.34,582.64 L860.25,581.01 L858.15,579.38 L856.06,577.75 L853.97,576.12 L851.89,574.50 L849.81,572.87 L847.73,571.24 L845.66,569.61 L843.60,567.98 L841.53,566.35 L839.47,564.73 L837.42,563.10 L835.37,561.47 L833.33,559.84 L831.29,558.21 L829.26,556.58 L827.23,554.95 L825.21,553.33 L823.19,551.70 L821.18,550.07 L819.18,548.44 L817.18,546.81 L815.19,545.18 L813.21,543.55 L811.23,541.93 L809.26,540.30 L807.30,538.67 L805.35,537.04 L803.40,535.41 L801.46,533.78 L799.52,532.15 L797.60,530.53 L795.68,528.90 L793.77,527.27 L791.87,525.64 L789.98,524.01 L788.10,522.38 L786.22,520.76 L784.35,519.13 L782.50,517.50 L780.65,515.87 L778.81,514.24 L776.98,512.61 L775.16,510.98 L773.35,509.36 L771.55,507.73 L769.76,506.10 L767.98,504.47 L766.21,502.84 L764.45,501.21 L762.70,499.59 L760.97,497.96 L759.24,496.33 L757.52,494.70 L755.82,493.07 L754.12,491.44 L752.44,489.81 L750.77,488.19 L749.11,486.56 L747.46,484.93 L745.82,483.30 L744.20,481.67 L742.59,480.04 L740.99,478.41 L739.40,476.79 L737.82,475.16 L736.26,473.53 L734.71,471.90 L733.17,470.27 L731.65,468.64 L730.14,467.01 L728.64,465.39 L727.15,463.76 L725.68,462.13 L724.22,460.50 L722.78,458.87 L721.35,457.24 L719.93,455.62 L718.53,453.99 L717.14,452.36 L715.76,450.73 L714.40,449.10 L713.05,447.47 L711.72,445.84 L710.40,444.22 L709.10,442.59 L707.81,440.96 L706.54,439.33 L705.28,437.70 L704.04,436.07 L702.81,434.44 L701.60,432.82 L700.40,431.19 L699.22,429.56 L698.05,427.93 L696.90,426.30 L695.76,424.67 L694.64,423.05 L693.54,421.42 L692.45,419.79 L691.38,418.16 L690.32,416.53 L689.28,414.90 L688.26,413.27 L687.25,411.65 L686.26,410.02 L685.28,408.39 L684.33,406.76 L683.38,405.13 L682.46,403.50 L681.55,401.88 L680.66,400.25 L679.79,398.62 L678.93,396.99 L678.09,395.36 L677.27,393.73 L676.46,392.10 L675.67,390.48 L674.90,388.85 L674.15,387.22 L673.41,385.59 L672.69,383.96 L671.99,382.33 L671.30,380.70 L670.64,379.08 L669.99,377.45 L669.36,375.82 L668.74,374.19 L668.15,372.56 L667.57,370.93 L667.01,369.31 L666.47,367.68 L665.94,366.05 L665.44,364.42 L664.95,362.79 L664.48,361.16 L664.03,359.53 L663.60,357.91 L663.18,356.28 L662.78,354.65 L662.41,353.02 L662.04,351.39 L661.70,349.76 L661.38,348.13 L661.07,346.51 L660.79,344.88 L660.52,343.25 L660.27,341.62 L660.04,339.99 L659.82,338.36 L659.63,336.74 L659.45,335.11 L659.29,333.48 L659.15,331.85 L659.03,330.22 L658.93,328.59 L658.85,326.96 L658.78,325.34 L658.74,323.71 L658.71,322.08 L658.70,320.45 L658.71,318.82 L658.74,317.19 L658.78,315.56 L658.85,313.94 L658.93,312.31 L659.03,310.68 L659.15,309.05 L659.29,307.42 L659.45,305.79 L659.63,304.16 L659.82,302.54 L660.04,300.91 L660.27,299.28 L660.52,297.65 L660.79,296.02 L661.07,294.39 L661.38,292.77 L661.70,291.14 L662.04,289.51 L662.41,287.88 L662.78,286.25 L663.18,284.62 L663.60,282.99 L664.03,281.37 L664.48,279.74 L664.95,278.11 L665.44,276.48 L665.94,274.85 L666.47,273.22 L667.01,271.59 L667.57,269.97 L668.15,268.34 L668.74,266.71 L669.36,265.08 L669.99,263.45 L670.64,261.82 L671.30,260.20 L671.99,258.57 L672.69,256.94 L673.41,255.31 L674.15,253.68 L674.90,252.05 L675.67,250.42 L676.46,248.80 L677.27,247.17 L678.09,245.54 L678.93,243.91 L679.79,242.28 L680.66,240.65 L681.55,239.02 L682.46,237.40 L683.38,235.77 L684.33,234.14 L685.28,232.51 L686.26,230.88 L687.25,229.25 L688.26,227.63 L689.28,226.00 L690.32,224.37 L691.38,222.74 L692.45,221.11 L693.54,219.48 L694.64,217.85 L695.76,216.23 L696.90,214.60 L698.05,212.97 L699.22,211.34 L700.40,209.71 L701.60,208.08 L702.81,206.45 L704.04,204.83 L705.28,203.20 L706.54,201.57 L707.81,199.94 L709.10,198.31 L710.40,196.68 L711.72,195.06 L713.05,193.43 L714.40,191.80 L715.76,190.17 L717.14,188.54 L718.53,186.91 L719.93,185.28 L721.35,183.66 L722.78,182.03 L724.22,180.40 L725.68,178.77 L727.15,177.14 L728.64,175.51 L730.14,173.88 L731.65,172.26 L733.17,170.63 L734.71,169.00 L736.26,167.37 L737.82,165.74 L739.40,164.11 L740.99,162.49 L742.59,160.86 L744.20,159.23 L745.82,157.60 L747.46,155.97 L749.11,154.34 L750.77,152.71 L752.44,151.09 L754.12,149.46 L755.82,147.83 L757.52,146.20 L759.24,144.57 L760.97,142.94 L762.70,141.31 L764.45,139.69 L766.21,138.06 L767.98,136.43 L769.76,134.80 L771.55,133.17 L773.35,131.54 L775.16,129.92 L776.98,128.29 L778.81,126.66 L780.65,125.03 L782.50,123.40 L784.35,121.77 L786.22,120.14 L788.10,118.52 L789.98,116.89 L791.87,115.26 L793.77,113.63 L795.68,112.00 L797.60,110.37 L799.52,108.74 L801.46,107.12 L803.40,105.49 L805.35,103.86 L807.30,102.23 L809.26,100.60 L811.23,98.97 L813.21,97.35 L815.19,95.72 L817.18,94.09 L819.18,92.46 L821.18,90.83 L823.19,89.20 L825.21,87.57 L827.23,85.95 L829.26,84.32 L831.29,82.69 L833.33,81.06 L835.37,79.43 L837.42,77.80 L839.47,76.17 L841.53,74.55 L843.60,72.92 L845.66,71.29 L847.73,69.66 L849.81,68.03 L851.89,66.40 L853.97,64.78 L856.06,63.15 L858.15,61.52 L860.25,59.89 L862.34,58.26 L864.45,56.63 L866.55,55.00 L868.66,53.38 L870.76,51.75 L872.88,50.12 L874.99,48.49 L877.11,46.86 L879.22,45.23 L881.34,43.60 L883.46,41.98 L885.59,40.35 L887.71,38.72 L889.84,37.09 L891.96,35.46 L894.09,33.83 L896.22,32.21 L898.34,30.58 L900.47,28.95 L902.60,27.32 M902.60,613.58 L900.05,611.95 L897.49,610.32 L894.94,608.69 L892.39,607.07 L889.83,605.44 L887.28,603.81 L884.73,602.18 L882.18,600.55 L879.64,598.92 L877.09,597.30 L874.55,595.67 L872.01,594.04 L869.47,592.41 L866.93,590.78 L864.40,589.15 L861.87,587.52 L859.34,585.90 L856.81,584.27 L854.29,582.64 L851.78,581.01 L849.26,579.38 L846.75,577.75 L844.25,576.12 L841.75,574.50 L839.25,572.87 L836.76,571.24 L834.28,569.61 L831.79,567.98 L829.32,566.35 L826.85,564.73 L824.38,563.10 L821.93,561.47 L819.47,559.84 L817.03,558.21 L814.59,556.58 L812.16,554.95 L809.73,553.33 L807.31,551.70 L804.90,550.07 L802.50,548.44 L800.10,546.81 L797.71,545.18 L795.33,543.55 L792.96,541.93 L790.60,540.30 L788.24,538.67 L785.89,537.04 L783.56,535.41 L781.23,533.78 L778.91,532.15 L776.60,530.53 L774.30,528.90 L772.01,527.27 L769.73,525.64 L767.46,524.01 L765.20,522.38 L762.95,520.76 L760.71,519.13 L758.48,517.50 L756.26,515.87 L754.05,514.24 L751.86,512.61 L749.68,510.98 L747.50,509.36 L745.34,507.73 L743.20,506.10 L741.06,504.47 L738.94,502.84 L736.82,501.21 L734.73,499.59 L732.64,497.96 L730.57,496.33 L728.51,494.70 L726.46,493.07 L724.43,491.44 L722.41,489.81 L720.40,488.19 L718.41,486.56 L716.43,484.93 L714.47,483.30 L712.52,481.67 L710.58,480.04 L708.66,478.41 L706.76,476.79 L704.87,475.16 L702.99,473.53 L701.13,471.90 L699.29,470.27 L697.46,468.64 L695.64,467.01 L693.85,465.39 L692.06,463.76 L690.30,462.13 L688.55,460.50 L686.81,458.87 L685.10,457.24 L683.40,455.62 L681.71,453.99 L680.04,452.36 L678.39,450.73 L676.76,449.10 L675.14,447.47 L673.55,445.84 L671.97,444.22 L670.40,442.59 L668.86,440.96 L667.33,439.33 L665.82,437.70 L664.32,436.07 L662.85,434.44 L661.39,432.82 L659.96,431.19 L658.54,429.56 L657.14,427.93 L655.76,426.30 L654.39,424.67 L653.05,423.05 L651.72,421.42 L650.42,419.79 L649.13,418.16 L647.86,416.53 L646.62,414.90 L645.39,413.27 L644.18,411.65 L642.99,410.02 L641.82,408.39 L640.67,406.76 L639.54,405.13 L638.43,403.50 L637.34,401.88 L636.27,400.25 L635.22,398.62 L634.19,396.99 L633.19,395.36 L632.20,393.73 L631.23,392.10 L630.29,390.48 L629.36,388.85 L628.45,387.22 L627.57,385.59 L626.71,383.96 L625.87,382.33 L625.04,380.70 L624.24,379.08 L623.47,377.45 L622.71,375.82 L621.97,374.19 L621.26,372.56 L620.56,370.93 L619.89,369.31 L619.24,367.68 L618.61,366.05 L618.01,364.42 L617.42,362.79 L616.86,361.16 L616.32,359.53 L615.80,357.91 L615.30,356.28 L614.82,354.65 L614.37,353.02 L613.93,351.39 L613.52,349.76 L613.13,348.13 L612.77,346.51 L612.42,344.88 L612.10,343.25 L611.80,341.62 L611.52,339.99 L611.27,338.36 L611.03,336.74 L610.82,335.11 L610.63,333.48 L610.47,331.85 L610.32,330.22 L610.20,328.59 L610.10,326.96 L610.02,325.34 L609.96,323.71 L609.93,322.08 L609.92,320.45 L609.93,318.82 L609.96,317.19 L610.02,315.56 L610.10,313.94 L610.20,312.31 L610.32,310.68 L610.47,309.05 L610.63,307.42 L610.82,305.79 L611.03,304.16 L611.27,302.54 L611.52,300.91 L611.80,299.28 L612.10,297.65 L612.42,296.02 L612.77,294.39 L613.13,292.77 L613.52,291.14 L613.93,289.51 L614.37,287.88 L614.82,286.25 L615.30,284.62 L615.80,282.99 L616.32,281.37 L616.86,279.74 L617.42,278.11 L618.01,276.48 L618.61,274.85 L619.24,273.22 L619.89,271.59 L620.56,269.97 L621.26,268.34 L621.97,266.71 L622.71,265.08 L623.47,263.45 L624.24,261.82 L625.04,260.20 L625.87,258.57 L626.71,256.94 L627.57,255.31 L628.45,253.68 L629.36,252.05 L630.29,250.42 L631.23,248.80 L632.20,247.17 L633.19,245.54 L634.19,243.91 L635.22,242.28 L636.27,240.65 L637.34,239.02 L638.43,237.40 L639.54,235.77 L640.67,234.14 L641.82,232.51 L642.99,230.88 L644.18,229.25 L645.39,227.63 L646.62,226.00 L647.86,224.37 L649.13,222.74 L650.42,221.11 L651.72,219.48 L653.05,217.85 L654.39,216.23 L655.76,214.60 L657.14,212.97 L658.54,211.34 L659.96,209.71 L661.39,208.08 L662.85,206.45 L664.32,204.83 L665.82,203.20 L667.33,201.57 L668.86,199.94 L670.40,198.31 L671.97,196.68 L673.55,195.06 L675.14,193.43 L676.76,191.80 L678.39,190.17 L680.04,188.54 L681.71,186.91 L683.40,185.28 L685.10,183.66 L686.81,182.03 L688.55,180.40 L690.30,178.77 L692.06,177.14 L693.85,175.51 L695.64,173.88 L697.46,172.26 L699.29,170.63 L701.13,169.00 L702.99,167.37 L704.87,165.74 L706.76,164.11 L708.66,162.49 L710.58,160.86 L712.52,159.23 L714.47,157.60 L716.43,155.97 L718.41,154.34 L720.40,152.71 L722.41,151.09 L724.43,149.46 L726.46,147.83 L728.51,146.20 L730.57,144.57 L732.64,142.94 L734.73,141.31 L736.82,139.69 L738.94,138.06 L741.06,136.43 L743.20,134.80 L745.34,133.17 L747.50,131.54 L749.68,129.92 L751.86,128.29 L754.05,126.66 L756.26,125.03 L758.48,123.40 L760.71,121.77 L762.95,120.14 L765.20,118.52 L767.46,116.89 L769.73,115.26 L772.01,113.63 L774.30,112.00 L776.60,110.37 L778.91,108.74 L781.23,107.12 L783.56,105.49 L785.89,103.86 L788.24,102.23 L790.60,100.60 L792.96,98.97 L795.33,97.35 L797.71,95.72 L800.10,94.09 L802.50,92.46 L804.90,90.83 L807.31,89.20 L809.73,87.57 L812.16,85.95 L814.59,84.32 L817.03,82.69 L819.47,81.06 L821.93,79.43 L824.38,77.80 L826.85,76.17 L829.32,74.55 L831.79,72.92 L834.28,71.29 L836.76,69.66 L839.25,68.03 L841.75,66.40 L844.25,64.78 L846.75,63.15 L849.26,61.52 L851.78,59.89 L854.29,58.26 L856.81,56.63 L859.34,55.00 L861.87,53.38 L864.40,51.75 L866.93,50.12 L869.47,48.49 L872.01,46.86 L874.55,45.23 L877.09,43.60 L879.64,41.98 L882.18,40.35 L884.73,38.72 L887.28,37.09 L889.83,35.46 L892.39,33.83 L894.94,32.21 L897.49,30.58 L900.05,28.95 L902.60,27.32 M902.60,613.58 L899.62,611.95 L896.64,610.32 L893.66,608.69 L890.68,607.07 L887.71,605.44 L884.73,603.81 L881.75,602.18 L878.78,600.55 L875.81,598.92 L872.84,597.30 L869.87,595.67 L866.91,594.04 L863.95,592.41 L860.99,590.78 L858.03,589.15 L855.08,587.52 L852.13,585.90 L849.18,584.27 L846.24,582.64 L843.31,581.01 L840.37,579.38 L837.45,577.75 L834.52,576.12 L831.61,574.50 L828.69,572.87 L825.79,571.24 L822.89,569.61 L819.99,567.98 L817.11,566.35 L814.22,564.73 L811.35,563.10 L808.48,561.47 L805.62,559.84 L802.77,558.21 L799.92,556.58 L797.08,554.95 L794.25,553.33 L791.43,551.70 L788.62,550.07 L785.81,548.44 L783.02,546.81 L780.23,545.18 L777.45,543.55 L774.69,541.93 L771.93,540.30 L769.18,538.67 L766.44,537.04 L763.72,535.41 L761.00,533.78 L758.29,532.15 L755.60,530.53 L752.91,528.90 L750.24,527.27 L747.58,525.64 L744.93,524.01 L742.29,522.38 L739.67,520.76 L737.06,519.13 L734.46,517.50 L731.87,515.87 L729.30,514.24 L726.74,512.61 L724.19,510.98 L721.65,509.36 L719.13,507.73 L716.63,506.10 L714.14,504.47 L711.66,502.84 L709.19,501.21 L706.75,499.59 L704.31,497.96 L701.89,496.33 L699.49,494.70 L697.10,493.07 L694.73,491.44 L692.38,489.81 L690.04,488.19 L687.71,486.56 L685.40,484.93 L683.11,483.30 L680.84,481.67 L678.58,480.04 L676.34,478.41 L674.12,476.79 L671.91,475.16 L669.72,473.53 L667.55,471.90 L665.40,470.27 L663.27,468.64 L661.15,467.01 L659.05,465.39 L656.97,463.76 L654.91,462.13 L652.87,460.50 L650.85,458.87 L648.85,457.24 L646.86,455.62 L644.90,453.99 L642.95,452.36 L641.03,450.73 L639.12,449.10 L637.24,447.47 L635.37,445.84 L633.53,444.22 L631.70,442.59 L629.90,440.96 L628.12,439.33 L626.35,437.70 L624.61,436.07 L622.89,434.44 L621.19,432.82 L619.52,431.19 L617.86,429.56 L616.23,427.93 L614.62,426.30 L613.03,424.67 L611.46,423.05 L609.91,421.42 L608.39,419.79 L606.89,418.16 L605.41,416.53 L603.95,414.90 L602.52,413.27 L601.11,411.65 L599.72,410.02 L598.36,408.39 L597.02,406.76 L595.70,405.13 L594.40,403.50 L593.13,401.88 L591.88,400.25 L590.66,398.62 L589.46,396.99 L588.28,395.36 L587.13,393.73 L586.00,392.10 L584.90,390.48 L583.82,388.85 L582.76,387.22 L581.73,385.59 L580.73,383.96 L579.74,382.33 L578.79,380.70 L577.85,379.08 L576.94,377.45 L576.06,375.82 L575.20,374.19 L574.37,372.56 L573.56,370.93 L572.77,369.31 L572.02,367.68 L571.28,366.05 L570.57,364.42 L569.89,362.79 L569.23,361.16 L568.60,359.53 L567.99,357.91 L567.41,356.28 L566.86,354.65 L566.33,353.02 L565.82,351.39 L565.34,349.76 L564.89,348.13 L564.46,346.51 L564.06,344.88 L563.69,343.25 L563.33,341.62 L563.01,339.99 L562.71,338.36 L562.44,336.74 L562.19,335.11 L561.97,333.48 L561.78,331.85 L561.61,330.22 L561.46,328.59 L561.35,326.96 L561.26,325.34 L561.19,323.71 L561.15,322.08 L561.14,320.45 L561.15,318.82 L561.19,317.19 L561.26,315.56 L561.35,313.94 L561.46,312.31 L561.61,310.68 L561.78,309.05 L561.97,307.42 L562.19,305.79 L562.44,304.16 L562.71,302.54 L563.01,300.91 L563.33,299.28 L563.69,297.65 L564.06,296.02 L564.46,294.39 L564.89,292.77 L565.34,291.14 L565.82,289.51 L566.33,287.88 L566.86,286.25 L567.41,284.62 L567.99,282.99 L568.60,281.37 L569.23,279.74 L569.89,278.11 L570.57,276.48 L571.28,274.85 L572.02,273.22 L572.77,271.59 L573.56,269.97 L574.37,268.34 L575.20,266.71 L576.06,265.08 L576.94,263.45 L577.85,261.82 L578.79,260.20 L579.74,258.57 L580.73,256.94 L581.73,255.31 L582.76,253.68 L583.82,252.05 L584.90,250.42 L586.00,248.80 L587.13,247.17 L588.28,245.54 L589.46,243.91 L590.66,242.28 L591.88,240.65 L593.13,239.02 L594.40,237.40 L595.70,235.77 L597.02,234.14 L598.36,232.51 L599.72,230.88 L601.11,229.25 L602.52,227.63 L603.95,226.00 L605.41,224.37 L606.89,222.74 L608.39,221.11 L609.91,219.48 L611.46,217.85 L613.03,216.23 L614.62,214.60 L616.23,212.97 L617.86,211.34 L619.52,209.71 L621.19,208.08 L622.89,206.45 L624.61,204.83 L626.35,203.20 L628.12,201.57 L629.90,199.94 L631.70,198.31 L633.53,196.68 L635.37,195.06 L637.24,193.43 L639.12,191.80 L641.03,190.17 L642.95,188.54 L644.90,186.91 L646.86,185.28 L648.85,183.66 L650.85,182.03 L652.87,180.40 L654.91,178.77 L656.97,177.14 L659.05,175.51 L661.15,173.88 L663.27,172.26 L665.40,170.63 L667.55,169.00 L669.72,167.37 L671.91,165.74 L674.12,164.11 L676.34,162.49 L678.58,160.86 L680.84,159.23 L683.11,157.60 L685.40,155.97 L687.71,154.34 L690.04,152.71 L692.38,151.09 L694.73,149.46 L697.10,147.83 L699.49,146.20 L701.89,144.57 L704.31,142.94 L706.75,141.31 L709.19,139.69 L711.66,138.06 L714.14,136.43 L716.63,134.80 L719.13,133.17 L721.65,131.54 L724.19,129.92 L726.74,128.29 L729.30,126.66 L731.87,125.03 L734.46,123.40 L737.06,121.77 L739.67,120.14 L742.29,118.52 L744.93,116.89 L747.58,115.26 L750.24,113.63 L752.91,112.00 L755.60,110.37 L758.29,108.74 L761.00,107.12 L763.72,105.49 L766.44,103.86 L769.18,102.23 L771.93,100.60 L774.69,98.97 L777.45,97.35 L780.23,95.72 L783.02,94.09 L785.81,92.46 L788.62,90.83 L791.43,89.20 L794.25,87.57 L797.08,85.95 L799.92,84.32 L802.77,82.69 L805.62,81.06 L808.48,79.43 L811.35,77.80 L814.22,76.17 L817.11,74.55 L819.99,72.92 L822.89,71.29 L825.79,69.66 L828.69,68.03 L831.61,66.40 L834.52,64.78 L837.45,63.15 L840.37,61.52 L843.31,59.89 L846.24,58.26 L849.18,56.63 L852.13,55.00 L855.08,53.38 L858.03,51.75 L860.99,50.12 L863.95,48.49 L866.91,46.86 L869.87,45.23 L872.84,43.60 L875.81,41.98 L878.78,40.35 L881.75,38.72 L884.73,37.09 L887.71,35.46 L890.68,33.83 L893.66,32.21 L896.64,30.58 L899.62,28.95 L902.60,27.32 M902.60,613.58 L899.19,611.95 L895.79,610.32 L892.38,608.69 L888.98,607.07 L885.58,605.44 L882.18,603.81 L878.78,602.18 L875.38,600.55 L871.98,598.92 L868.59,597.30 L865.20,595.67 L861.81,594.04 L858.42,592.41 L855.04,590.78 L851.66,589.15 L848.29,587.52 L844.92,585.90 L841.55,584.27 L838.19,582.64 L834.84,581.01 L831.48,579.38 L828.14,577.75 L824.80,576.12 L821.46,574.50 L818.14,572.87 L814.82,571.24 L811.50,569.61 L808.19,567.98 L804.89,566.35 L801.60,564.73 L798.31,563.10 L795.04,561.47 L791.77,559.84 L788.50,558.21 L785.25,556.58 L782.01,554.95 L778.78,553.33 L775.55,551.70 L772.34,550.07 L769.13,548.44 L765.94,546.81 L762.75,545.18 L759.58,543.55 L756.41,541.93 L753.26,540.30 L750.12,538.67 L746.99,537.04 L743.88,535.41 L740.77,533.78 L737.68,532.15 L734.60,530.53 L731.53,528.90 L728.48,527.27 L725.43,525.64 L722.41,524.01 L719.39,522.38 L716.39,520.76 L713.41,519.13 L710.44,517.50 L707.48,515.87 L704.54,514.24 L701.61,512.61 L698.70,510.98 L695.80,509.36 L692.92,507.73 L690.06,506.10 L687.21,504.47 L684.38,502.84 L681.57,501.21 L678.77,499.59 L675.99,497.96 L673.22,496.33 L670.48,494.70 L667.75,493.07 L665.04,491.44 L662.34,489.81 L659.67,488.19 L657.01,486.56 L654.38,484.93 L651.76,483.30 L649.16,481.67 L646.58,480.04 L644.02,478.41 L641.48,476.79 L638.96,475.16 L636.46,473.53 L633.98,471.90 L631.52,470.27 L629.08,468.64 L626.66,467.01 L624.26,465.39 L621.88,463.76 L619.53,462.13 L617.20,460.50 L614.88,458.87 L612.60,457.24 L610.33,455.62 L608.08,453.99 L605.86,452.36 L603.66,450.73 L601.48,449.10 L599.33,447.47 L597.19,445.84 L595.09,444.22 L593.00,442.59 L590.94,440.96 L588.90,439.33 L586.89,437.70 L584.90,436.07 L582.93,434.44 L580.99,432.82 L579.08,431.19 L577.18,429.56 L575.32,427.93 L573.47,426.30 L571.66,424.67 L569.87,423.05 L568.10,421.42 L566.36,419.79 L564.64,418.16 L562.95,416.53 L561.29,414.90 L559.65,413.27 L558.04,411.65 L556.45,410.02 L554.89,408.39 L553.36,406.76 L551.85,405.13 L550.38,403.50 L548.92,401.88 L547.50,400.25 L546.10,398.62 L544.73,396.99 L543.38,395.36 L542.07,393.73 L540.78,392.10 L539.51,390.48 L538.28,388.85 L537.07,387.22 L535.89,385.59 L534.74,383.96 L533.62,382.33 L532.53,380.70 L531.46,379.08 L530.42,377.45 L529.41,375.82 L528.43,374.19 L527.48,372.56 L526.55,370.93 L525.66,369.31 L524.79,367.68 L523.95,366.05 L523.14,364.42 L522.36,362.79 L521.61,361.16 L520.89,359.53 L520.19,357.91 L519.53,356.28 L518.89,354.65 L518.29,353.02 L517.71,351.39 L517.16,349.76 L516.65,348.13 L516.16,346.51 L515.70,344.88 L515.27,343.25 L514.87,341.62 L514.50,339.99 L514.16,338.36 L513.84,336.74 L513.56,335.11 L513.31,333.48 L513.09,331.85 L512.89,330.22 L512.73,328.59 L512.60,326.96 L512.49,325.34 L512.42,323.71 L512.37,322.08 L512.36,320.45 L512.37,318.82 L512.42,317.19 L512.49,315.56 L512.60,313.94 L512.73,312.31 L512.89,310.68 L513.09,309.05 L513.31,307.42 L513.56,305.79 L513.84,304.16 L514.16,302.54 L514.50,300.91 L514.87,299.28 L515.27,297.65 L515.70,296.02 L516.16,294.39 L516.65,292.77 L517.16,291.14 L517.71,289.51 L518.29,287.88 L518.89,286.25 L519.53,284.62 L520.19,282.99 L520.89,281.37 L521.61,279.74 L522.36,278.11 L523.14,276.48 L523.95,274.85 L524.79,273.22 L525.66,271.59 L526.55,269.97 L527.48,268.34 L528.43,266.71 L529.41,265.08 L530.42,263.45 L531.46,261.82 L532.53,260.20 L533.62,258.57 L534.74,256.94 L535.89,255.31 L537.07,253.68 L538.28,252.05 L539.51,250.42 L540.78,248.80 L542.07,247.17 L543.38,245.54 L544.73,243.91 L546.10,242.28 L547.50,240.65 L548.92,239.02 L550.38,237.40 L551.85,235.77 L553.36,234.14 L554.89,232.51 L556.45,230.88 L558.04,229.25 L559.65,227.63 L561.29,226.00 L562.95,224.37 L564.64,222.74 L566.36,221.11 L568.10,219.48 L569.87,217.85 L571.66,216.23 L573.47,214.60 L575.32,212.97 L577.18,211.34 L579.08,209.71 L580.99,208.08 L582.93,206.45 L584.90,204.83 L586.89,203.20 L588.90,201.57 L590.94,199.94 L593.00,198.31 L595.09,196.68 L597.19,195.06 L599.33,193.43 L601.48,191.80 L603.66,190.17 L605.86,188.54 L608.08,186.91 L610.33,185.28 L612.60,183.66 L614.88,182.03 L617.20,180.40 L619.53,178.77 L621.88,177.14 L624.26,175.51 L626.66,173.88 L629.08,172.26 L631.52,170.63 L633.98,169.00 L636.46,167.37 L638.96,165.74 L641.48,164.11 L644.02,162.49 L646.58,160.86 L649.16,159.23 L651.76,157.60 L654.38,155.97 L657.01,154.34 L659.67,152.71 L662.34,151.09 L665.04,149.46 L667.75,147.83 L670.48,146.20 L673.22,144.57 L675.99,142.94 L678.77,141.31 L681.57,139.69 L684.38,138.06 L687.21,136.43 L690.06,134.80 L692.92,133.17 L695.80,131.54 L698.70,129.92 L701.61,128.29 L704.54,126.66 L707.48,125.03 L710.44,123.40 L713.41,121.77 L716.39,120.14 L719.39,118.52 L722.41,116.89 L725.43,115.26 L728.48,113.63 L731.53,112.00 L734.60,110.37 L737.68,108.74 L740.77,107.12 L743.88,105.49 L746.99,103.86 L750.12,102.23 L753.26,100.60 L756.41,98.97 L759.58,97.35 L762.75,95.72 L765.94,94.09 L769.13,92.46 L772.34,90.83 L775.55,89.20 L778.78,87.57 L782.01,85.95 L785.25,84.32 L788.50,82.69 L791.77,81.06 L795.04,79.43 L798.31,77.80 L801.60,76.17 L804.89,74.55 L808.19,72.92 L811.50,71.29 L814.82,69.66 L818.14,68.03 L821.46,66.40 L824.80,64.78 L828.14,63.15 L831.48,61.52 L834.84,59.89 L838.19,58.26 L841.55,56.63 L844.92,55.00 L848.29,53.38 L851.66,51.75 L855.04,50.12 L858.42,48.49 L861.81,46.86 L865.20,45.23 L868.59,43.60 L871.98,41.98 L875.38,40.35 L878.78,38.72 L882.18,37.09 L885.58,35.46 L888.98,33.83 L892.38,32.21 L895.79,30.58 L899.19,28.95 L902.60,27.32 M902.60,613.58 L898.77,611.95 L894.94,610.32 L891.11,608.69 L887.28,607.07 L883.45,605.44 L879.62,603.81 L875.80,602.18 L871.98,600.55 L868.15,598.92 L864.34,597.30 L860.52,595.67 L856.71,594.04 L852.90,592.41 L849.10,590.78 L845.30,589.15 L841.50,587.52 L837.71,585.90 L833.92,584.27 L830.14,582.64 L826.36,581.01 L822.59,579.38 L818.83,577.75 L815.07,576.12 L811.32,574.50 L807.58,572.87 L803.84,571.24 L800.11,569.61 L796.39,567.98 L792.68,566.35 L788.97,564.73 L785.28,563.10 L781.59,561.47 L777.91,559.84 L774.24,558.21 L770.58,556.58 L766.94,554.95 L763.30,553.33 L759.67,551.70 L756.05,550.07 L752.45,548.44 L748.85,546.81 L745.27,545.18 L741.70,543.55 L738.14,541.93 L734.59,540.30 L731.06,538.67 L727.54,537.04 L724.03,535.41 L720.54,533.78 L717.06,532.15 L713.60,530.53 L710.15,528.90 L706.71,527.27 L703.29,525.64 L699.88,524.01 L696.49,522.38 L693.12,520.76 L689.76,519.13 L686.42,517.50 L683.09,515.87 L679.78,514.24 L676.49,512.61 L673.21,510.98 L669.95,509.36 L666.71,507.73 L663.49,506.10 L660.29,504.47 L657.10,502.84 L653.94,501.21 L650.79,499.59 L647.66,497.96 L644.55,496.33 L641.46,494.70 L638.39,493.07 L635.34,491.44 L632.31,489.81 L629.30,488.19 L626.32,486.56 L623.35,484.93 L620.40,483.30 L617.48,481.67 L614.58,480.04 L611.70,478.41 L608.84,476.79 L606.00,475.16 L603.19,473.53 L600.40,471.90 L597.63,470.27 L594.89,468.64 L592.17,467.01 L589.47,465.39 L586.80,463.76 L584.15,462.13 L581.52,460.50 L578.92,458.87 L576.34,457.24 L573.79,455.62 L571.27,453.99 L568.77,452.36 L566.29,450.73 L563.84,449.10 L561.42,447.47 L559.02,445.84 L556.65,444.22 L554.30,442.59 L551.98,440.96 L549.69,439.33 L547.43,437.70 L545.19,436.07 L542.98,434.44 L540.79,432.82 L538.64,431.19 L536.51,429.56 L534.41,427.93 L532.33,426.30 L530.29,424.67 L528.27,423.05 L526.29,421.42 L524.33,419.79 L522.40,418.16 L520.50,416.53 L518.62,414.90 L516.78,413.27 L514.97,411.65 L513.18,410.02 L511.43,408.39 L509.71,406.76 L508.01,405.13 L506.35,403.50 L504.71,401.88 L503.11,400.25 L501.54,398.62 L499.99,396.99 L498.48,395.36 L497.00,393.73 L495.55,392.10 L494.13,390.48 L492.74,388.85 L491.38,387.22 L490.06,385.59 L488.76,383.96 L487.50,382.33 L486.27,380.70 L485.07,379.08 L483.90,377.45 L482.76,375.82 L481.66,374.19 L480.59,372.56 L479.55,370.93 L478.54,369.31 L477.56,367.68 L476.62,366.05 L475.71,364.42 L474.83,362.79 L473.99,361.16 L473.17,359.53 L472.39,357.91 L471.65,356.28 L470.93,354.65 L470.25,353.02 L469.60,351.39 L468.99,349.76 L468.40,348.13 L467.85,346.51 L467.34,344.88 L466.85,343.25 L466.40,341.62 L465.98,339.99 L465.60,338.36 L465.25,336.74 L464.93,335.11 L464.65,333.48 L464.40,331.85 L464.18,330.22 L464.00,328.59 L463.85,326.96 L463.73,325.34 L463.65,323.71 L463.60,322.08 L463.58,320.45 L463.60,318.82 L463.65,317.19 L463.73,315.56 L463.85,313.94 L464.00,312.31 L464.18,310.68 L464.40,309.05 L464.65,307.42 L464.93,305.79 L465.25,304.16 L465.60,302.54 L465.98,300.91 L466.40,299.28 L466.85,297.65 L467.34,296.02 L467.85,294.39 L468.40,292.77 L468.99,291.14 L469.60,289.51 L470.25,287.88 L470.93,286.25 L471.65,284.62 L472.39,282.99 L473.17,281.37 L473.99,279.74 L474.83,278.11 L475.71,276.48 L476.62,274.85 L477.56,273.22 L478.54,271.59 L479.55,269.97 L480.59,268.34 L481.66,266.71 L482.76,265.08 L483.90,263.45 L485.07,261.82 L486.27,260.20 L487.50,258.57 L488.76,256.94 L490.06,255.31 L491.38,253.68 L492.74,252.05 L494.13,250.42 L495.55,248.80 L497.00,247.17 L498.48,245.54 L499.99,243.91 L501.54,242.28 L503.11,240.65 L504.71,239.02 L506.35,237.40 L508.01,235.77 L509.71,234.14 L511.43,232.51 L513.18,230.88 L514.97,229.25 L516.78,227.63 L518.62,226.00 L520.50,224.37 L522.40,222.74 L524.33,221.11 L526.29,219.48 L528.27,217.85 L530.29,216.23 L532.33,214.60 L534.41,212.97 L536.51,211.34 L538.64,209.71 L540.79,208.08 L542.98,206.45 L545.19,204.83 L547.43,203.20 L549.69,201.57 L551.98,199.94 L554.30,198.31 L556.65,196.68 L559.02,195.06 L561.42,193.43 L563.84,191.80 L566.29,190.17 L568.77,188.54 L571.27,186.91 L573.79,185.28 L576.34,183.66 L578.92,182.03 L581.52,180.40 L584.15,178.77 L586.80,177.14 L589.47,175.51 L592.17,173.88 L594.89,172.26 L597.63,170.63 L600.40,169.00 L603.19,167.37 L606.00,165.74 L608.84,164.11 L611.70,162.49 L614.58,160.86 L617.48,159.23 L620.40,157.60 L623.35,155.97 L626.32,154.34 L629.30,152.71 L632.31,151.09 L635.34,149.46 L638.39,147.83 L641.46,146.20 L644.55,144.57 L647.66,142.94 L650.79,141.31 L653.94,139.69 L657.10,138.06 L660.29,136.43 L663.49,134.80 L666.71,133.17 L669.95,131.54 L673.21,129.92 L676.49,128.29 L679.78,126.66 L683.09,125.03 L686.42,123.40 L689.76,121.77 L693.12,120.14 L696.49,118.52 L699.88,116.89 L703.29,115.26 L706.71,113.63 L710.15,112.00 L713.60,110.37 L717.06,108.74 L720.54,107.12 L724.03,105.49 L727.54,103.86 L731.06,102.23 L734.59,100.60 L738.14,98.97 L741.70,97.35 L745.27,95.72 L748.85,94.09 L752.45,92.46 L756.05,90.83 L759.67,89.20 L763.30,87.57 L766.94,85.95 L770.58,84.32 L774.24,82.69 L777.91,81.06 L781.59,79.43 L785.28,77.80 L788.97,76.17 L792.68,74.55 L796.39,72.92 L800.11,71.29 L803.84,69.66 L807.58,68.03 L811.32,66.40 L815.07,64.78 L818.83,63.15 L822.59,61.52 L826.36,59.89 L830.14,58.26 L833.92,56.63 L837.71,55.00 L841.50,53.38 L845.30,51.75 L849.10,50.12 L852.90,48.49 L856.71,46.86 L860.52,45.23 L864.34,43.60 L868.15,41.98 L871.98,40.35 L875.80,38.72 L879.62,37.09 L883.45,35.46 L887.28,33.83 L891.11,32.21 L894.94,30.58 L898.77,28.95 L902.60,27.32 M902.60,613.58 L898.34,611.95 L894.09,610.32 L889.83,608.69 L885.58,607.07 L881.32,605.44 L877.07,603.81 L872.82,602.18 L868.57,600.55 L864.33,598.92 L860.09,597.30 L855.85,595.67 L851.61,594.04 L847.38,592.41 L843.15,590.78 L838.93,589.15 L834.71,587.52 L830.50,585.90 L826.29,584.27 L822.09,582.64 L817.89,581.01 L813.71,579.38 L809.52,577.75 L805.35,576.12 L801.18,574.50 L797.02,572.87 L792.87,571.24 L788.73,569.61 L784.59,567.98 L780.46,566.35 L776.35,564.73 L772.24,563.10 L768.14,561.47 L764.06,559.84 L759.98,558.21 L755.92,556.58 L751.86,554.95 L747.82,553.33 L743.79,551.70 L739.77,550.07 L735.76,548.44 L731.77,546.81 L727.79,545.18 L723.82,543.55 L719.87,541.93 L715.93,540.30 L712.00,538.67 L708.09,537.04 L704.19,535.41 L700.31,533.78 L696.45,532.15 L692.60,530.53 L688.76,528.90 L684.94,527.27 L681.14,525.64 L677.36,524.01 L673.59,522.38 L669.84,520.76 L666.11,519.13 L662.40,517.50 L658.70,515.87 L655.02,514.24 L651.36,512.61 L647.73,510.98 L644.11,509.36 L640.51,507.73 L636.93,506.10 L633.37,504.47 L629.83,502.84 L626.31,501.21 L622.81,499.59 L619.33,497.96 L615.88,496.33 L612.45,494.70 L609.03,493.07 L605.65,491.44 L602.28,489.81 L598.94,488.19 L595.62,486.56 L592.32,484.93 L589.05,483.30 L585.80,481.67 L582.57,480.04 L579.37,478.41 L576.20,476.79 L573.05,475.16 L569.92,473.53 L566.82,471.90 L563.75,470.27 L560.70,468.64 L557.67,467.01 L554.68,465.39 L551.71,463.76 L548.76,462.13 L545.85,460.50 L542.96,458.87 L540.09,457.24 L537.26,455.62 L534.45,453.99 L531.67,452.36 L528.92,450.73 L526.20,449.10 L523.51,447.47 L520.84,445.84 L518.21,444.22 L515.60,442.59 L513.03,440.96 L510.48,439.33 L507.96,437.70 L505.47,436.07 L503.02,434.44 L500.59,432.82 L498.20,431.19 L495.83,429.56 L493.50,427.93 L491.19,426.30 L488.92,424.67 L486.68,423.05 L484.47,421.42 L482.30,419.79 L480.15,418.16 L478.04,416.53 L475.96,414.90 L473.91,413.27 L471.90,411.65 L469.92,410.02 L467.97,408.39 L466.05,406.76 L464.17,405.13 L462.32,403.50 L460.50,401.88 L458.72,400.25 L456.97,398.62 L455.26,396.99 L453.58,395.36 L451.93,393.73 L450.32,392.10 L448.74,390.48 L447.20,388.85 L445.69,387.22 L444.22,385.59 L442.78,383.96 L441.38,382.33 L440.01,380.70 L438.67,379.08 L437.38,377.45 L436.11,375.82 L434.89,374.19 L433.70,372.56 L432.54,370.93 L431.42,369.31 L430.34,367.68 L429.29,366.05 L428.28,364.42 L427.30,362.79 L426.36,361.16 L425.46,359.53 L424.59,357.91 L423.76,356.28 L422.97,354.65 L422.21,353.02 L421.49,351.39 L420.81,349.76 L420.16,348.13 L419.55,346.51 L418.97,344.88 L418.44,343.25 L417.94,341.62 L417.47,339.99 L417.05,338.36 L416.66,336.74 L416.30,335.11 L415.99,333.48 L415.71,331.85 L415.47,330.22 L415.26,328.59 L415.10,326.96 L414.97,325.34 L414.87,323.71 L414.82,322.08 L414.80,320.45 L414.82,318.82 L414.87,317.19 L414.97,315.56 L415.10,313.94 L415.26,312.31 L415.47,310.68 L415.71,309.05 L415.99,307.42 L416.30,305.79 L416.66,304.16 L417.05,302.54 L417.47,300.91 L417.94,299.28 L418.44,297.65 L418.97,296.02 L419.55,294.39 L420.16,292.77 L420.81,291.14 L421.49,289.51 L422.21,287.88 L422.97,286.25 L423.76,284.62 L424.59,282.99 L425.46,281.37 L426.36,279.74 L427.30,278.11 L428.28,276.48 L429.29,274.85 L430.34,273.22 L431.42,271.59 L432.54,269.97 L433.70,268.34 L434.89,266.71 L436.11,265.08 L437.38,263.45 L438.67,261.82 L440.01,260.20 L441.38,258.57 L442.78,256.94 L444.22,255.31 L445.69,253.68 L447.20,252.05 L448.74,250.42 L450.32,248.80 L451.93,247.17 L453.58,245.54 L455.26,243.91 L456.97,242.28 L458.72,240.65 L460.50,239.02 L462.32,237.40 L464.17,235.77 L466.05,234.14 L467.97,232.51 L469.92,230.88 L471.90,229.25 L473.91,227.63 L475.96,226.00 L478.04,224.37 L480.15,222.74 L482.30,221.11 L484.47,219.48 L486.68,217.85 L488.92,216.23 L491.19,214.60 L493.50,212.97 L495.83,211.34 L498.20,209.71 L500.59,208.08 L503.02,206.45 L505.47,204.83 L507.96,203.20 L510.48,201.57 L513.03,199.94 L515.60,198.31 L518.21,196.68 L520.84,195.06 L523.51,193.43 L526.20,191.80 L528.92,190.17 L531.67,188.54 L534.45,186.91 L537.26,185.28 L540.09,183.66 L542.96,182.03 L545.85,180.40 L548.76,178.77 L551.71,177.14 L554.68,175.51 L557.67,173.88 L560.70,172.26 L563.75,170.63 L566.82,169.00 L569.92,167.37 L573.05,165.74 L576.20,164.11 L579.37,162.49 L582.57,160.86 L585.80,159.23 L589.05,157.60 L592.32,155.97 L595.62,154.34 L598.94,152.71 L602.28,151.09 L605.65,149.46 L609.03,147.83 L612.45,146.20 L615.88,144.57 L619.33,142.94 L622.81,141.31 L626.31,139.69 L629.83,138.06 L633.37,136.43 L636.93,134.80 L640.51,133.17 L644.11,131.54 L647.73,129.92 L651.36,128.29 L655.02,126.66 L658.70,125.03 L662.40,123.40 L666.11,121.77 L669.84,120.14 L673.59,118.52 L677.36,116.89 L681.14,115.26 L684.94,113.63 L688.76,112.00 L692.60,110.37 L696.45,108.74 L700.31,107.12 L704.19,105.49 L708.09,103.86 L712.00,102.23 L715.93,100.60 L719.87,98.97 L723.82,97.35 L727.79,95.72 L731.77,94.09 L735.76,92.46 L739.77,90.83 L743.79,89.20 L747.82,87.57 L751.86,85.95 L755.92,84.32 L759.98,82.69 L764.06,81.06 L768.14,79.43 L772.24,77.80 L776.35,76.17 L780.46,74.55 L784.59,72.92 L788.73,71.29 L792.87,69.66 L797.02,68.03 L801.18,66.40 L805.35,64.78 L809.52,63.15 L813.71,61.52 L817.89,59.89 L822.09,58.26 L826.29,56.63 L830.50,55.00 L834.71,53.38 L838.93,51.75 L843.15,50.12 L847.38,48.49 L851.61,46.86 L855.85,45.23 L860.09,43.60 L864.33,41.98 L868.57,40.35 L872.82,38.72 L877.07,37.09 L881.32,35.46 L885.58,33.83 L889.83,32.21 L894.09,30.58 L898.34,28.95 L902.60,27.32 M902.60,613.58 L897.92,611.95 L893.24,610.32 L888.55,608.69 L883.87,607.07 L879.19,605.44 L874.52,603.81 L869.84,602.18 L865.17,600.55 L860.50,598.92 L855.83,597.30 L851.17,595.67 L846.51,594.04 L841.86,592.41 L837.21,590.78 L832.56,589.15 L827.92,587.52 L823.29,585.90 L818.66,584.27 L814.04,582.64 L809.42,581.01 L804.82,579.38 L800.22,577.75 L795.62,576.12 L791.04,574.50 L786.46,572.87 L781.90,571.24 L777.34,569.61 L772.79,567.98 L768.25,566.35 L763.72,564.73 L759.21,563.10 L754.70,561.47 L750.20,559.84 L745.72,558.21 L741.25,556.58 L736.79,554.95 L732.34,553.33 L727.91,551.70 L723.49,550.07 L719.08,548.44 L714.69,546.81 L710.31,545.18 L705.94,543.55 L701.59,541.93 L697.26,540.30 L692.94,538.67 L688.64,537.04 L684.35,535.41 L680.08,533.78 L675.83,532.15 L671.60,530.53 L667.38,528.90 L663.18,527.27 L659.00,525.64 L654.83,524.01 L650.69,522.38 L646.57,520.76 L642.46,519.13 L638.38,517.50 L634.31,515.87 L630.27,514.24 L626.24,512.61 L622.24,510.98 L618.26,509.36 L614.30,507.73 L610.36,506.10 L606.44,504.47 L602.55,502.84 L598.68,501.21 L594.83,499.59 L591.01,497.96 L587.21,496.33 L583.43,494.70 L579.68,493.07 L575.95,491.44 L572.25,489.81 L568.57,488.19 L564.92,486.56 L561.29,484.93 L557.69,483.30 L554.12,481.67 L550.57,480.04 L547.05,478.41 L543.56,476.79 L540.09,475.16 L536.65,473.53 L533.24,471.90 L529.86,470.27 L526.51,468.64 L523.18,467.01 L519.88,465.39 L516.62,463.76 L513.38,462.13 L510.17,460.50 L506.99,458.87 L503.84,457.24 L500.73,455.62 L497.64,453.99 L494.58,452.36 L491.56,450.73 L488.56,449.10 L485.60,447.47 L482.67,445.84 L479.77,444.22 L476.90,442.59 L474.07,440.96 L471.27,439.33 L468.50,437.70 L465.76,436.07 L463.06,434.44 L460.39,432.82 L457.76,431.19 L455.15,429.56 L452.59,427.93 L450.05,426.30 L447.55,424.67 L445.09,423.05 L442.66,421.42 L440.27,419.79 L437.91,418.16 L435.58,416.53 L433.30,414.90 L431.04,413.27 L428.83,411.65 L426.65,410.02 L424.50,408.39 L422.40,406.76 L420.33,405.13 L418.29,403.50 L416.29,401.88 L414.33,400.25 L412.41,398.62 L410.52,396.99 L408.68,395.36 L406.86,393.73 L405.09,392.10 L403.36,390.48 L401.66,388.85 L400.00,387.22 L398.38,385.59 L396.80,383.96 L395.25,382.33 L393.75,380.70 L392.28,379.08 L390.85,377.45 L389.47,375.82 L388.12,374.19 L386.81,372.56 L385.54,370.93 L384.30,369.31 L383.11,367.68 L381.96,366.05 L380.85,364.42 L379.77,362.79 L378.74,361.16 L377.75,359.53 L376.79,357.91 L375.88,356.28 L375.01,354.65 L374.17,353.02 L373.38,351.39 L372.63,349.76 L371.91,348.13 L371.24,346.51 L370.61,344.88 L370.02,343.25 L369.47,341.62 L368.96,339.99 L368.49,338.36 L368.06,336.74 L367.67,335.11 L367.33,333.48 L367.02,331.85 L366.76,330.22 L366.53,328.59 L366.35,326.96 L366.20,325.34 L366.10,323.71 L366.04,322.08 L366.02,320.45 L366.04,318.82 L366.10,317.19 L366.20,315.56 L366.35,313.94 L366.53,312.31 L366.76,310.68 L367.02,309.05 L367.33,307.42 L367.67,305.79 L368.06,304.16 L368.49,302.54 L368.96,300.91 L369.47,299.28 L370.02,297.65 L370.61,296.02 L371.24,294.39 L371.91,292.77 L372.63,291.14 L373.38,289.51 L374.17,287.88 L375.01,286.25 L375.88,284.62 L376.79,282.99 L377.75,281.37 L378.74,279.74 L379.77,278.11 L380.85,276.48 L381.96,274.85 L383.11,273.22 L384.30,271.59 L385.54,269.97 L386.81,268.34 L388.12,266.71 L389.47,265.08 L390.85,263.45 L392.28,261.82 L393.75,260.20 L395.25,258.57 L396.80,256.94 L398.38,255.31 L400.00,253.68 L401.66,252.05 L403.36,250.42 L405.09,248.80 L406.86,247.17 L408.68,245.54 L410.52,243.91 L412.41,242.28 L414.33,240.65 L416.29,239.02 L418.29,237.40 L420.33,235.77 L422.40,234.14 L424.50,232.51 L426.65,230.88 L428.83,229.25 L431.04,227.63 L433.30,226.00 L435.58,224.37 L437.91,222.74 L440.27,221.11 L442.66,219.48 L445.09,217.85 L447.55,216.23 L450.05,214.60 L452.59,212.97 L455.15,211.34 L457.76,209.71 L460.39,208.08 L463.06,206.45 L465.76,204.83 L468.50,203.20 L471.27,201.57 L474.07,199.94 L476.90,198.31 L479.77,196.68 L482.67,195.06 L485.60,193.43 L488.56,191.80 L491.56,190.17 L494.58,188.54 L497.64,186.91 L500.73,185.28 L503.84,183.66 L506.99,182.03 L510.17,180.40 L513.38,178.77 L516.62,177.14 L519.88,175.51 L523.18,173.88 L526.51,172.26 L529.86,170.63 L533.24,169.00 L536.65,167.37 L540.09,165.74 L543.56,164.11 L547.05,162.49 L550.57,160.86 L554.12,159.23 L557.69,157.60 L561.29,155.97 L564.92,154.34 L568.57,152.71 L572.25,151.09 L575.95,149.46 L579.68,147.83 L583.43,146.20 L587.21,144.57 L591.01,142.94 L594.83,141.31 L598.68,139.69 L602.55,138.06 L606.44,136.43 L610.36,134.80 L614.30,133.17 L618.26,131.54 L622.24,129.92 L626.24,128.29 L630.27,126.66 L634.31,125.03 L638.38,123.40 L642.46,121.77 L646.57,120.14 L650.69,118.52 L654.83,116.89 L659.00,115.26 L663.18,113.63 L667.38,112.00 L671.60,110.37 L675.83,108.74 L680.08,107.12 L684.35,105.49 L688.64,103.86 L692.94,102.23 L697.26,100.60 L701.59,98.97 L705.94,97.35 L710.31,95.72 L714.69,94.09 L719.08,92.46 L723.49,90.83 L727.91,89.20 L732.34,87.57 L736.79,85.95 L741.25,84.32 L745.72,82.69 L750.20,81.06 L754.70,79.43 L759.21,77.80 L763.72,76.17 L768.25,74.55 L772.79,72.92 L777.34,71.29 L781.90,69.66 L786.46,68.03 L791.04,66.40 L795.62,64.78 L800.22,63.15 L804.82,61.52 L809.42,59.89 L814.04,58.26 L818.66,56.63 L823.29,55.00 L827.92,53.38 L832.56,51.75 L837.21,50.12 L841.86,48.49 L846.51,46.86 L851.17,45.23 L855.83,43.60 L860.50,41.98 L865.17,40.35 L869.84,38.72 L874.52,37.09 L879.19,35.46 L883.87,33.83 L888.55,32.21 L893.24,30.58 L897.92,28.95 L902.60,27.32 M902.60,613.58 L897.49,611.95 L892.38,610.32 L887.28,608.69 L882.17,607.07 L877.07,605.44 L871.96,603.81 L866.86,602.18 L861.77,600.55 L856.67,598.92 L851.58,597.30 L846.50,595.67 L841.41,594.04 L836.34,592.41 L831.26,590.78 L826.20,589.15 L821.13,587.52 L816.08,585.90 L811.03,584.27 L805.99,582.64 L800.95,581.01 L795.93,579.38 L790.91,577.75 L785.90,576.12 L780.90,574.50 L775.90,572.87 L770.92,571.24 L765.95,569.61 L760.99,567.98 L756.04,566.35 L751.10,564.73 L746.17,563.10 L741.25,561.47 L736.35,559.84 L731.46,558.21 L726.58,556.58 L721.71,554.95 L716.86,553.33 L712.03,551.70 L707.20,550.07 L702.40,548.44 L697.60,546.81 L692.83,545.18 L688.06,543.55 L683.32,541.93 L678.59,540.30 L673.88,538.67 L669.19,537.04 L664.51,535.41 L659.86,533.78 L655.22,532.15 L650.60,530.53 L646.00,528.90 L641.41,527.27 L636.85,525.64 L632.31,524.01 L627.79,522.38 L623.29,520.76 L618.81,519.13 L614.35,517.50 L609.92,515.87 L605.51,514.24 L601.12,512.61 L596.75,510.98 L592.41,509.36 L588.09,507.73 L583.79,506.10 L579.52,504.47 L575.27,502.84 L571.05,501.21 L566.85,499.59 L562.68,497.96 L558.53,496.33 L554.41,494.70 L550.32,493.07 L546.26,491.44 L542.22,489.81 L538.20,488.19 L534.22,486.56 L530.27,484.93 L526.34,483.30 L522.44,481.67 L518.57,480.04 L514.73,478.41 L510.92,476.79 L507.14,475.16 L503.39,473.53 L499.66,471.90 L495.97,470.27 L492.32,468.64 L488.69,467.01 L485.09,465.39 L481.53,463.76 L477.99,462.13 L474.49,460.50 L471.03,458.87 L467.59,457.24 L464.19,455.62 L460.82,453.99 L457.49,452.36 L454.19,450.73 L450.92,449.10 L447.69,447.47 L444.49,445.84 L441.33,444.22 L438.20,442.59 L435.11,440.96 L432.05,439.33 L429.03,437.70 L426.05,436.07 L423.10,434.44 L420.19,432.82 L417.31,431.19 L414.48,429.56 L411.68,427.93 L408.91,426.30 L406.19,424.67 L403.50,423.05 L400.85,421.42 L398.24,419.79 L395.66,418.16 L393.13,416.53 L390.63,414.90 L388.18,413.27 L385.76,411.65 L383.38,410.02 L381.04,408.39 L378.74,406.76 L376.48,405.13 L374.26,403.50 L372.08,401.88 L369.95,400.25 L367.85,398.62 L365.79,396.99 L363.77,395.36 L361.80,393.73 L359.86,392.10 L357.97,390.48 L356.12,388.85 L354.31,387.22 L352.54,385.59 L350.82,383.96 L349.13,382.33 L347.49,380.70 L345.89,379.08 L344.33,377.45 L342.82,375.82 L341.35,374.19 L339.92,372.56 L338.53,370.93 L337.19,369.31 L335.89,367.68 L334.63,366.05 L333.41,364.42 L332.24,362.79 L331.12,361.16 L330.03,359.53 L328.99,357.91 L327.99,356.28 L327.04,354.65 L326.13,353.02 L325.27,351.39 L324.45,349.76 L323.67,348.13 L322.94,346.51 L322.25,344.88 L321.60,343.25 L321.00,341.62 L320.45,339.99 L319.93,338.36 L319.47,336.74 L319.04,335.11 L318.67,333.48 L318.33,331.85 L318.04,330.22 L317.80,328.59 L317.60,326.96 L317.44,325.34 L317.33,323.71 L317.26,322.08 L317.24,320.45 L317.26,318.82 L317.33,317.19 L317.44,315.56 L317.60,313.94 L317.80,312.31 L318.04,310.68 L318.33,309.05 L318.67,307.42 L319.04,305.79 L319.47,304.16 L319.93,302.54 L320.45,300.91 L321.00,299.28 L321.60,297.65 L322.25,296.02 L322.94,294.39 L323.67,292.77 L324.45,291.14 L325.27,289.51 L326.13,287.88 L327.04,286.25 L327.99,284.62 L328.99,282.99 L330.03,281.37 L331.12,279.74 L332.24,278.11 L333.41,276.48 L334.63,274.85 L335.89,273.22 L337.19,271.59 L338.53,269.97 L339.92,268.34 L341.35,266.71 L342.82,265.08 L344.33,263.45 L345.89,261.82 L347.49,260.20 L349.13,258.57 L350.82,256.94 L352.54,255.31 L354.31,253.68 L356.12,252.05 L357.97,250.42 L359.86,248.80 L361.80,247.17 L363.77,245.54 L365.79,243.91 L367.85,242.28 L369.95,240.65 L372.08,239.02 L374.26,237.40 L376.48,235.77 L378.74,234.14 L381.04,232.51 L383.38,230.88 L385.76,229.25 L388.18,227.63 L390.63,226.00 L393.13,224.37 L395.66,222.74 L398.24,221.11 L400.85,219.48 L403.50,217.85 L406.19,216.23 L408.91,214.60 L411.68,212.97 L414.48,211.34 L417.31,209.71 L420.19,208.08 L423.10,206.45 L426.05,204.83 L429.03,203.20 L432.05,201.57 L435.11,199.94 L438.20,198.31 L441.33,196.68 L444.49,195.06 L447.69,193.43 L450.92,191.80 L454.19,190.17 L457.49,188.54 L460.82,186.91 L464.19,185.28 L467.59,183.66 L471.03,182.03 L474.49,180.40 L477.99,178.77 L481.53,177.14 L485.09,175.51 L488.69,173.88 L492.32,172.26 L495.97,170.63 L499.66,169.00 L503.39,167.37 L507.14,165.74 L510.92,164.11 L514.73,162.49 L518.57,160.86 L522.44,159.23 L526.34,157.60 L530.27,155.97 L534.22,154.34 L538.20,152.71 L542.22,151.09 L546.26,149.46 L550.32,147.83 L554.41,146.20 L558.53,144.57 L562.68,142.94 L566.85,141.31 L571.05,139.69 L575.27,138.06 L579.52,136.43 L583.79,134.80 L588.09,133.17 L592.41,131.54 L596.75,129.92 L601.12,128.29 L605.51,126.66 L609.92,125.03 L614.35,123.40 L618.81,121.77 L623.29,120.14 L627.79,118.52 L632.31,116.89 L636.85,115.26 L641.41,113.63 L646.00,112.00 L650.60,110.37 L655.22,108.74 L659.86,107.12 L664.51,105.49 L669.19,103.86 L673.88,102.23 L678.59,100.60 L683.32,98.97 L688.06,97.35 L692.83,95.72 L697.60,94.09 L702.40,92.46 L707.20,90.83 L712.03,89.20 L716.86,87.57 L721.71,85.95 L726.58,84.32 L731.46,82.69 L736.35,81.06 L741.25,79.43 L746.17,77.80 L751.10,76.17 L756.04,74.55 L760.99,72.92 L765.95,71.29 L770.92,69.66 L775.90,68.03 L780.90,66.40 L785.90,64.78 L790.91,63.15 L795.93,61.52 L800.95,59.89 L805.99,58.26 L811.03,56.63 L816.08,55.00 L821.13,53.38 L826.20,51.75 L831.26,50.12 L836.34,48.49 L841.41,46.86 L846.50,45.23 L851.58,43.60 L856.67,41.98 L861.77,40.35 L866.86,38.72 L871.96,37.09 L877.07,35.46 L882.17,33.83 L887.28,32.21 L892.38,30.58 L897.49,28.95 L902.60,27.32" fill="none" stroke="#6c6c6c" stroke-width="2.08" stroke-dasharray="2.08 3.44"/>
<text x="1471.62" y="330.05" class="gl">+180</text><circle cx="1500.27" cy="323.45" r="0.85" fill="none" stroke="#8c8c8c" stroke-width="0.7"/>
<text x="1374.06" y="330.05" class="gl">+210</text><circle cx="1402.71" cy="323.45" r="0.85" fill="none" stroke="#8c8c8c" stroke-width="0.7"/>
<text x="1276.50" y="330.05" class="gl">+240</text><circle cx="1305.15" cy="323.45" r="0.85" fill="none" stroke="#8c8c8c" stroke-width="0.7"/>
<text x="1178.94" y="330.05" class="gl">+270</text><circle cx="1207.59" cy="323.45" r="0.85" fill="none" stroke="#8c8c8c" stroke-width="0.7"/>
<text x="1081.38" y="330.05" class="gl">+300</text><circle cx="1110.03" cy="323.45" r="0.85" fill="none" stroke="#8c8c8c" stroke-width="0.7"/>
<text x="983.82" y="330.05" class="gl">+330</text><circle cx="1012.47" cy="323.45" r="0.85" fill="none" stroke="#8c8c8c" stroke-width="0.7"/>
<text x="892.38" y="330.05" class="gl">+0</text><circle cx="908.79" cy="323.45" r="0.85" fill="none" stroke="#8c8c8c" stroke-width="0.7"/>
<text x="791.76" y="330.05" class="gl">+30</text><circle cx="814.29" cy="323.45" r="0.85" fill="none" stroke="#8c8c8c" stroke-width="0.7"/>
<text x="694.20" y="330.05" class="gl">+60</text><circle cx="716.73" cy="323.45" r="0.85" fill="none" stroke="#8c8c8c" stroke-width="0.7"/>
<text x="596.64" y="330.05" class="gl">+90</text><circle cx="619.17" cy="323.45" r="0.85" fill="none" stroke="#8c8c8c" stroke-width="0.7"/>
<text x="496.02" y="330.05" class="gl">+120</text><circle cx="524.67" cy="323.45" r="0.85" fill="none" stroke="#8c8c8c" stroke-width="0.7"/>
<text x="398.46" y="330.05" class="gl">+150</text><circle cx="427.11" cy="323.45" r="0.85" fill="none" stroke="#8c8c8c" stroke-width="0.7"/>
<text x="300.90" y="330.05" class="gl">+180</text><circle cx="329.55" cy="323.45" r="0.85" fill="none" stroke="#8c8c8c" stroke-width="0.7"/>
<text x="891.32" y="25.12" class="gl">+90</text><circle cx="913.85" cy="18.52" r="0.85" fill="none" stroke="#8c8c8c" stroke-width="0.7"/>
<text x="891.32" y="122.83" class="gl">+60</text><circle cx="913.85" cy="116.23" r="0.85" fill="none" stroke="#8c8c8c" stroke-width="0.7"/>
<text x="891.32" y="220.54" class="gl">+30</text><circle cx="913.85" cy="213.94" r="0.85" fill="none" stroke="#8c8c8c" stroke-width="0.7"/>
<text x="891.31" y="428.36" class="gl">−30</text><circle cx="913.84" cy="421.76" r="0.85" fill="none" stroke="#8c8c8c" stroke-width="0.7"/>
<text x="891.31" y="526.07" class="gl">−60</text><circle cx="913.84" cy="519.47" r="0.85" fill="none" stroke="#8c8c8c" stroke-width="0.7"/>
<text x="891.31" y="623.78" class="gl">−90</text><circle cx="913.84" cy="617.18" r="0.85" fill="none" stroke="#8c8c8c" stroke-width="0.7"/>
<path d="M604.00,267.00 L604.76,265.87 L605.54,264.75 L606.32,263.62 L607.12,262.49 L607.92,261.37 L608.74,260.24 L609.57,259.12 L610.41,257.99 L611.26,256.87 L612.11,255.74 L612.98,254.61 L613.86,253.49 L614.76,252.36 L615.66,251.24 L616.57,250.11 L617.49,248.99 L618.42,247.86 L619.36,246.74 L620.32,245.61 L621.28,244.49 L622.25,243.36 L623.24,242.24 L624.23,241.12 L625.23,239.99 L626.24,238.87 L627.27,237.75 L628.30,236.62 L629.34,235.50 L630.40,234.38 L631.46,233.25 L632.53,232.13 L633.61,231.01 L634.70,229.88 L635.80,228.76 L636.91,227.64 L638.03,226.52 L639.16,225.40 L640.30,224.27 L641.45,223.15 L642.60,222.03 L643.77,220.91 L644.95,219.79 L646.13,218.67 L647.32,217.55 L648.53,216.43 L649.74,215.31 L650.96,214.19 L652.19,213.07 L653.43,211.95 L654.67,210.83 L655.93,209.71 L657.19,208.59 L658.47,207.47 L659.75,206.36 L661.04,205.24 L662.34,204.12 L663.64,203.00 L664.96,201.89 L666.28,200.77 L667.61,199.65 L668.95,198.54 L670.30,197.42 L671.66,196.31 L673.02,195.19 L674.39,194.08 L675.77,192.96 L677.16,191.85 L678.55,190.73 L679.95,189.62 L681.36,188.51 L682.78,187.40 L684.20,186.28 L685.64,185.17 L687.08,184.06 L688.52,182.95 L689.98,181.84 L691.44,180.73 L692.90,179.62 L694.38,178.51 L695.86,177.40 L697.35,176.29 L698.84,175.18 L700.35,174.08 L701.85,172.97 L703.37,171.86 L704.89,170.76 L706.42,169.65 L707.95,168.55 L709.49,167.44 L711.04,166.34 L712.59,165.24 L714.15,164.13 L715.71,163.03 L717.28,161.93 L718.86,160.83 L720.44,159.73 L722.02,158.63 L723.62,157.53 L725.21,156.44 L726.82,155.34 L728.42,154.24 L730.04,153.15 L731.66,152.05 L733.28,150.96 L734.91,149.87 L736.54,148.78 L738.17,147.68 L739.82,146.59 L741.46,145.51 L743.11,144.42 L744.77,143.33 L746.43,142.24 L748.09,141.16 L749.75,140.08 L751.42,138.99 L753.10,137.91 L754.78,136.83 L756.46,135.75 L758.14,134.67 L759.83,133.60 L761.52,132.52 L763.21,131.45 L764.91,130.38 L766.61,129.31 L768.31,128.24 L770.01,127.17 L771.72,126.10 L773.43,125.04 L775.14,123.98 L776.85,122.92 L778.57,121.86 L780.28,120.80 L782.00,119.75 L783.72,118.69 L785.44,117.64 L787.16,116.60 L788.89,115.55 L790.61,114.51 L792.33,113.46 L794.06,112.43 L795.78,111.39 L797.50,110.36 L799.23,109.33 L800.95,108.30 L802.67,107.28 L804.40,106.26 L806.12,105.24 L807.84,104.22 L809.56,103.21 L811.27,102.21 L812.99,101.20 L814.70,100.21 L816.41,99.21 L818.12,98.22 L819.82,97.24 L821.52,96.26 L823.22,95.28 L824.92,94.31 L826.61,93.35 L828.29,92.39 L829.98,91.44 L831.65,90.49 L833.32,89.55 L834.99,88.62 L836.65,87.69 L838.30,86.77 L839.95,85.86 L841.59,84.96 L843.22,84.07 L844.85,83.18 L846.46,82.31 L848.07,81.44 L849.67,80.59 L851.26,79.74 L852.84,78.91 L854.41,78.09 L855.96,77.28 L857.51,76.49 L859.05,75.71 L860.57,74.94 L862.08,74.19 L863.58,73.46 L865.06,72.74 L866.53,72.04 L867.99,71.36 L869.43,70.70 L870.86,70.06 L872.27,69.44 L873.67,68.84 L875.05,68.26 L876.41,67.71 L877.76,67.18 L879.09,66.68 L880.41,66.21 L881.71,65.77 L883.00,65.35 L884.27,64.97 L885.53,64.61 L886.77,64.29 L888.00,64.00" fill="none" stroke="#ffa500" stroke-width="1.6" stroke-dasharray="1.39 2.29"/>
<path d="M604.00,267.00 L604.89,266.06 L605.79,265.12 L606.70,264.18 L607.62,263.23 L608.54,262.29 L609.47,261.35 L610.41,260.41 L611.36,259.47 L612.31,258.53 L613.27,257.60 L614.23,256.66 L615.21,255.72 L616.19,254.78 L617.17,253.84 L618.17,252.91 L619.17,251.97 L620.18,251.03 L621.19,250.10 L622.21,249.16 L623.24,248.23 L624.28,247.30 L625.32,246.36 L626.37,245.43 L627.42,244.50 L628.49,243.56 L629.55,242.63 L630.63,241.70 L631.71,240.77 L632.80,239.84 L633.89,238.91 L634.99,237.98 L636.10,237.05 L637.21,236.13 L638.33,235.20 L639.45,234.27 L640.59,233.35 L641.72,232.42 L642.87,231.50 L644.01,230.57 L645.17,229.65 L646.33,228.73 L647.50,227.80 L648.67,226.88 L649.85,225.96 L651.03,225.04 L652.22,224.12 L653.41,223.20 L654.61,222.29 L655.82,221.37 L657.03,220.45 L658.24,219.54 L659.46,218.62 L660.69,217.71 L661.92,216.79 L663.16,215.88 L664.40,214.97 L665.65,214.06 L666.90,213.15 L668.15,212.24 L669.41,211.34 L670.68,210.43 L671.95,209.52 L673.23,208.62 L674.50,207.71 L675.79,206.81 L677.08,205.91 L678.37,205.01 L679.67,204.11 L680.97,203.21 L682.27,202.31 L683.58,201.42 L684.90,200.52 L686.22,199.63 L687.54,198.73 L688.86,197.84 L690.19,196.95 L691.53,196.06 L692.86,195.17 L694.20,194.29 L695.55,193.40 L696.90,192.52 L698.25,191.63 L699.60,190.75 L700.96,189.87 L702.32,188.99 L703.68,188.12 L705.05,187.24 L706.42,186.36 L707.79,185.49 L709.17,184.62 L710.55,183.75 L711.93,182.88 L713.31,182.02 L714.70,181.15 L716.09,180.29 L717.48,179.43 L718.87,178.57 L720.27,177.71 L721.66,176.85 L723.06,176.00 L724.46,175.15 L725.87,174.30 L727.27,173.45 L728.68,172.60 L730.09,171.76 L731.50,170.91 L732.91,170.07 L734.33,169.24 L735.74,168.40 L737.16,167.57 L738.57,166.73 L739.99,165.90 L741.41,165.08 L742.83,164.25 L744.25,163.43 L745.67,162.61 L747.09,161.79 L748.52,160.98 L749.94,160.17 L751.36,159.36 L752.79,158.55 L754.21,157.75 L755.64,156.95 L757.06,156.15 L758.48,155.35 L759.91,154.56 L761.33,153.77 L762.75,152.99 L764.17,152.20 L765.60,151.43 L767.02,150.65 L768.44,149.88 L769.86,149.11 L771.28,148.34 L772.69,147.58 L774.11,146.82 L775.52,146.06 L776.94,145.31 L778.35,144.57 L779.76,143.82 L781.17,143.08 L782.57,142.35 L783.98,141.62 L785.38,140.89 L786.78,140.17 L788.18,139.45 L789.58,138.73 L790.97,138.02 L792.36,137.32 L793.75,136.62 L795.14,135.92 L796.52,135.23 L797.90,134.55 L799.27,133.87 L800.65,133.19 L802.02,132.53 L803.39,131.86 L804.75,131.20 L806.11,130.55 L807.47,129.90 L808.82,129.26 L810.17,128.63 L811.51,128.00 L812.85,127.38 L814.19,126.76 L815.52,126.15 L816.85,125.55 L818.17,124.95 L819.49,124.36 L820.81,123.78 L822.12,123.20 L823.42,122.63 L824.72,122.07 L826.02,121.52 L827.31,120.97 L828.59,120.43 L829.87,119.90 L831.15,119.38 L832.42,118.87 L833.68,118.36 L834.94,117.86 L836.20,117.37 L837.44,116.89 L838.69,116.42 L839.92,115.96 L841.16,115.51 L842.38,115.06 L843.60,114.63 L844.82,114.20 L846.02,113.79 L847.23,113.38 L848.43,112.99 L849.62,112.60 L850.80,112.23 L851.98,111.86 L853.16,111.51 L854.33,111.16 L855.49,110.83 L856.65,110.51 L857.80,110.20" fill="none" stroke="#ffa500" stroke-width="1.6" stroke-dasharray="1.39 2.29"/>
<path d="M604.00,267.00 L605.05,265.96 L606.12,264.92 L607.19,263.89 L608.27,262.85 L609.36,261.81 L610.45,260.78 L611.56,259.74 L612.67,258.71 L613.80,257.67 L614.93,256.64 L616.07,255.61 L617.22,254.58 L618.38,253.55 L619.54,252.52 L620.71,251.49 L621.90,250.46 L623.09,249.43 L624.28,248.40 L625.49,247.37 L626.70,246.35 L627.93,245.32 L629.16,244.30 L630.39,243.27 L631.64,242.25 L632.89,241.23 L634.15,240.20 L635.42,239.18 L636.69,238.16 L637.98,237.14 L639.27,236.13 L640.56,235.11 L641.87,234.09 L643.18,233.08 L644.50,232.06 L645.82,231.05 L647.15,230.04 L648.49,229.03 L649.84,228.02 L651.19,227.01 L652.55,226.00 L653.91,224.99 L655.28,223.99 L656.66,222.98 L658.04,221.98 L659.43,220.98 L660.83,219.98 L662.23,218.98 L663.64,217.98 L665.05,216.98 L666.47,215.99 L667.90,214.99 L669.33,214.00 L670.76,213.01 L672.21,212.02 L673.65,211.03 L675.10,210.04 L676.56,209.05 L678.02,208.07 L679.49,207.09 L680.96,206.11 L682.44,205.13 L683.92,204.15 L685.41,203.17 L686.90,202.20 L688.39,201.23 L689.89,200.26 L691.39,199.29 L692.90,198.32 L694.41,197.35 L695.93,196.39 L697.45,195.43 L698.97,194.47 L700.49,193.51 L702.02,192.56 L703.56,191.60 L705.09,190.65 L706.63,189.70 L708.18,188.76 L709.72,187.81 L711.27,186.87 L712.82,185.93 L714.38,184.99 L715.93,184.06 L717.49,183.13 L719.05,182.20 L720.62,181.27 L722.18,180.35 L723.75,179.42 L725.32,178.51 L726.89,177.59 L728.46,176.68 L730.04,175.76 L731.61,174.86 L733.19,173.95 L734.77,173.05 L736.35,172.15 L737.93,171.26 L739.51,170.37 L741.09,169.48 L742.67,168.59 L744.25,167.71 L745.84,166.83 L747.42,165.96 L749.00,165.09 L750.58,164.22 L752.17,163.36 L753.75,162.50 L755.33,161.64 L756.91,160.79 L758.49,159.95 L760.07,159.10 L761.65,158.27 L763.23,157.43 L764.81,156.60 L766.38,155.78 L767.96,154.96 L769.53,154.14 L771.10,153.33 L772.67,152.52 L774.23,151.72 L775.80,150.93 L777.36,150.14 L778.92,149.35 L780.48,148.57 L782.03,147.80 L783.58,147.03 L785.13,146.27 L786.68,145.51 L788.22,144.76 L789.76,144.02 L791.30,143.28 L792.83,142.55 L794.36,141.82 L795.88,141.10 L797.40,140.39 L798.92,139.68 L800.43,138.99 L801.94,138.29 L803.44,137.61 L804.94,136.94 L806.43,136.27 L807.92,135.61 L809.41,134.95 L810.89,134.31 L812.36,133.67 L813.83,133.04 L815.30,132.42 L816.75,131.81 L818.21,131.21 L819.65,130.61 L821.10,130.03 L822.53,129.45 L823.96,128.89 L825.39,128.33 L826.80,127.78 L828.22,127.24 L829.62,126.72 L831.02,126.20 L832.42,125.69 L833.80,125.20 L835.18,124.71 L836.56,124.24 L837.93,123.77 L839.29,123.32 L840.64,122.88 L841.99,122.45 L843.34,122.03 L844.67,121.62 L846.00,121.23 L847.32,120.85 L848.64,120.48 L849.95,120.12 L851.26,119.77 L852.55,119.44 L853.85,119.12 L855.13,118.82 L856.41,118.52 L857.68,118.24 L858.95,117.97 L860.21,117.72 L861.47,117.48 L862.72,117.25 L863.96,117.04 L865.20,116.84 L866.44,116.66 L867.67,116.49 L868.89,116.33 L870.11,116.19 L871.32,116.06 L872.53,115.94 L873.73,115.84 L874.93,115.76 L876.13,115.69 L877.32,115.63 L878.51,115.59 L879.70,115.56 L880.88,115.55 L882.05,115.55 L883.23,115.57 L884.40,115.60" fill="none" stroke="#ffa500" stroke-width="1.6" stroke-dasharray="1.39 2.29"/>
<path d="M604.00,267.00 L605.13,266.22 L606.26,265.45 L607.40,264.67 L608.55,263.90 L609.69,263.12 L610.85,262.35 L612.00,261.58 L613.17,260.81 L614.33,260.04 L615.50,259.27 L616.68,258.51 L617.86,257.74 L619.04,256.98 L620.23,256.21 L621.42,255.45 L622.61,254.69 L623.81,253.93 L625.01,253.17 L626.22,252.41 L627.43,251.66 L628.65,250.90 L629.87,250.15 L631.09,249.39 L632.31,248.64 L633.54,247.89 L634.78,247.14 L636.01,246.40 L637.25,245.65 L638.49,244.91 L639.74,244.16 L640.99,243.42 L642.24,242.68 L643.50,241.95 L644.76,241.21 L646.02,240.47 L647.29,239.74 L648.55,239.01 L649.82,238.28 L651.10,237.55 L652.38,236.82 L653.65,236.10 L654.94,235.37 L656.22,234.65 L657.51,233.93 L658.80,233.21 L660.09,232.50 L661.38,231.78 L662.68,231.07 L663.98,230.36 L665.28,229.65 L666.58,228.94 L667.89,228.24 L669.19,227.53 L670.50,226.83 L671.81,226.13 L673.13,225.44 L674.44,224.74 L675.76,224.05 L677.07,223.36 L678.39,222.67 L679.71,221.98 L681.04,221.30 L682.36,220.62 L683.69,219.94 L685.01,219.26 L686.34,218.58 L687.67,217.91 L689.00,217.24 L690.33,216.57 L691.66,215.91 L692.99,215.25 L694.33,214.59 L695.66,213.93 L697.00,213.27 L698.33,212.62 L699.67,211.97 L701.00,211.33 L702.34,210.68 L703.68,210.04 L705.02,209.40 L706.35,208.77 L707.69,208.13 L709.03,207.50 L710.37,206.88 L711.71,206.25 L713.05,205.63 L714.38,205.01 L715.72,204.40 L717.06,203.78 L718.40,203.18 L719.74,202.57 L721.07,201.97 L722.41,201.37 L723.75,200.77 L725.08,200.18 L726.42,199.59 L727.75,199.01 L729.09,198.42 L730.42,197.84 L731.75,197.27 L733.08,196.70 L734.41,196.13 L735.74,195.56 L737.07,195.00 L738.39,194.45 L739.72,193.89 L741.04,193.34 L742.37,192.80 L743.69,192.26 L745.01,191.72 L746.33,191.18 L747.65,190.65 L748.96,190.13 L750.27,189.61 L751.59,189.09 L752.90,188.58 L754.21,188.07 L755.51,187.56 L756.82,187.06 L758.12,186.56 L759.42,186.07 L760.72,185.58 L762.02,185.10 L763.32,184.62 L764.61,184.15 L765.90,183.68 L767.19,183.22 L768.47,182.76 L769.76,182.30 L771.04,181.85 L772.32,181.40 L773.60,180.96 L774.87,180.53 L776.14,180.10 L777.41,179.67 L778.68,179.25 L779.94,178.84 L781.21,178.43 L782.46,178.02 L783.72,177.62 L784.98,177.23 L786.23,176.84 L787.47,176.45 L788.72,176.07 L789.96,175.70 L791.20,175.33 L792.44,174.97 L793.67,174.62 L794.91,174.26 L796.13,173.92 L797.36,173.58 L798.58,173.25 L799.80,172.92 L801.02,172.60 L802.23,172.28 L803.44,171.97 L804.65,171.67 L805.86,171.37 L807.06,171.08 L808.26,170.79 L809.45,170.51 L810.65,170.24 L811.84,169.97 L813.02,169.71 L814.21,169.45 L815.39,169.20 L816.57,168.96 L817.74,168.73 L818.91,168.50 L820.08,168.27 L821.25,168.06 L822.41,167.85 L823.57,167.64 L824.73,167.45 L825.88,167.26 L827.04,167.07 L828.19,166.89 L829.33,166.72 L830.48,166.56 L831.62,166.40 L832.75,166.25 L833.89,166.11 L835.02,165.97 L836.15,165.84 L837.28,165.72 L838.40,165.60 L839.53,165.49 L840.65,165.39 L841.76,165.29 L842.88,165.21 L843.99,165.12 L845.10,165.05 L846.21,164.98 L847.31,164.92 L848.42,164.87 L849.52,164.82 L850.62,164.78 L851.71,164.75 L852.81,164.72 L853.90,164.70" fill="none" stroke="#ffa500" stroke-width="1.6" stroke-dasharray="1.39 2.29"/>
<path d="M604.00,267.00 L605.08,266.40 L606.16,265.81 L607.25,265.21 L608.34,264.62 L609.43,264.02 L610.52,263.43 L611.62,262.84 L612.71,262.25 L613.81,261.66 L614.91,261.07 L616.02,260.48 L617.13,259.90 L618.23,259.31 L619.35,258.73 L620.46,258.15 L621.57,257.57 L622.69,256.99 L623.81,256.41 L624.93,255.83 L626.06,255.26 L627.18,254.68 L628.31,254.11 L629.44,253.54 L630.57,252.97 L631.70,252.40 L632.84,251.83 L633.97,251.26 L635.11,250.70 L636.25,250.13 L637.39,249.57 L638.53,249.01 L639.68,248.45 L640.82,247.89 L641.97,247.34 L643.12,246.78 L644.27,246.23 L645.42,245.68 L646.57,245.13 L647.73,244.58 L648.88,244.03 L650.04,243.49 L651.20,242.94 L652.35,242.40 L653.51,241.86 L654.68,241.32 L655.84,240.79 L657.00,240.25 L658.16,239.72 L659.33,239.18 L660.50,238.65 L661.66,238.13 L662.83,237.60 L664.00,237.08 L665.17,236.55 L666.34,236.03 L667.51,235.51 L668.68,235.00 L669.85,234.48 L671.02,233.97 L672.19,233.46 L673.37,232.95 L674.54,232.44 L675.71,231.94 L676.89,231.43 L678.06,230.93 L679.24,230.43 L680.41,229.94 L681.59,229.44 L682.77,228.95 L683.94,228.46 L685.12,227.97 L686.29,227.48 L687.47,227.00 L688.65,226.52 L689.82,226.04 L691.00,225.56 L692.17,225.09 L693.35,224.61 L694.53,224.14 L695.70,223.68 L696.88,223.21 L698.05,222.75 L699.23,222.29 L700.40,221.83 L701.58,221.37 L702.75,220.92 L703.92,220.47 L705.10,220.02 L706.27,219.58 L707.44,219.13 L708.61,218.69 L709.79,218.25 L710.96,217.82 L712.13,217.39 L713.29,216.96 L714.46,216.53 L715.63,216.11 L716.80,215.68 L717.96,215.26 L719.13,214.85 L720.29,214.43 L721.46,214.02 L722.62,213.62 L723.78,213.21 L724.94,212.81 L726.10,212.41 L727.26,212.01 L728.42,211.62 L729.58,211.23 L730.73,210.84 L731.89,210.46 L733.04,210.08 L734.19,209.70 L735.34,209.32 L736.49,208.95 L737.64,208.58 L738.79,208.22 L739.93,207.86 L741.08,207.50 L742.22,207.14 L743.36,206.79 L744.51,206.44 L745.64,206.09 L746.78,205.75 L747.92,205.41 L749.05,205.07 L750.19,204.74 L751.32,204.41 L752.45,204.08 L753.58,203.76 L754.71,203.44 L755.83,203.13 L756.96,202.81 L758.08,202.51 L759.20,202.20 L760.32,201.90 L761.44,201.60 L762.55,201.31 L763.67,201.01 L764.78,200.73 L765.89,200.44 L767.00,200.16 L768.11,199.89 L769.21,199.62 L770.32,199.35 L771.42,199.08 L772.52,198.82 L773.62,198.56 L774.72,198.31 L775.81,198.06 L776.91,197.81 L778.00,197.57 L779.09,197.33 L780.18,197.10 L781.26,196.87 L782.35,196.64 L783.43,196.42 L784.51,196.20 L785.59,195.99 L786.67,195.78 L787.74,195.57 L788.82,195.37 L789.89,195.17 L790.96,194.97 L792.03,194.78 L793.09,194.60 L794.16,194.42 L795.22,194.24 L796.28,194.06 L797.34,193.89 L798.40,193.73 L799.45,193.57 L800.50,193.41 L801.56,193.26 L802.61,193.11 L803.65,192.97 L804.70,192.83 L805.74,192.69 L806.79,192.56 L807.83,192.43 L808.87,192.31 L809.91,192.19 L810.94,192.07 L811.98,191.96 L813.01,191.86 L814.04,191.76 L815.07,191.66 L816.10,191.57 L817.12,191.48 L818.15,191.40 L819.17,191.32 L820.19,191.24 L821.21,191.17 L822.23,191.10 L823.24,191.04 L824.26,190.99 L825.27,190.93 L826.28,190.88 L827.29,190.84 L828.30,190.80" fill="none" stroke="#ffa500" stroke-width="1.6" stroke-dasharray="1.39 2.29"/>
<path d="M604.00,267.00 L605.21,266.33 L606.43,265.65 L607.65,264.98 L608.87,264.31 L610.09,263.64 L611.32,262.98 L612.55,262.31 L613.79,261.64 L615.02,260.98 L616.26,260.32 L617.51,259.66 L618.75,259.00 L620.00,258.34 L621.25,257.69 L622.50,257.03 L623.76,256.38 L625.02,255.73 L626.28,255.08 L627.54,254.43 L628.81,253.78 L630.08,253.14 L631.35,252.50 L632.62,251.86 L633.90,251.22 L635.17,250.58 L636.45,249.94 L637.73,249.31 L639.02,248.68 L640.30,248.05 L641.59,247.42 L642.88,246.79 L644.17,246.17 L645.46,245.54 L646.76,244.92 L648.06,244.30 L649.35,243.69 L650.65,243.07 L651.95,242.46 L653.26,241.85 L654.56,241.24 L655.86,240.63 L657.17,240.03 L658.48,239.43 L659.79,238.83 L661.10,238.23 L662.41,237.64 L663.72,237.04 L665.03,236.45 L666.35,235.86 L667.66,235.28 L668.98,234.70 L670.29,234.11 L671.61,233.54 L672.93,232.96 L674.25,232.39 L675.56,231.81 L676.88,231.25 L678.20,230.68 L679.52,230.12 L680.84,229.56 L682.17,229.00 L683.49,228.44 L684.81,227.89 L686.13,227.34 L687.45,226.79 L688.77,226.25 L690.09,225.71 L691.42,225.17 L692.74,224.63 L694.06,224.10 L695.38,223.57 L696.70,223.05 L698.02,222.52 L699.34,222.00 L700.66,221.48 L701.98,220.97 L703.30,220.46 L704.62,219.95 L705.94,219.44 L707.26,218.94 L708.57,218.44 L709.89,217.95 L711.20,217.46 L712.52,216.97 L713.83,216.48 L715.15,216.00 L716.46,215.52 L717.77,215.05 L719.08,214.58 L720.39,214.11 L721.69,213.65 L723.00,213.18 L724.31,212.73 L725.61,212.27 L726.91,211.82 L728.22,211.38 L729.52,210.94 L730.82,210.50 L732.11,210.06 L733.41,209.63 L734.70,209.21 L736.00,208.78 L737.29,208.36 L738.58,207.95 L739.87,207.54 L741.15,207.13 L742.44,206.73 L743.72,206.33 L745.00,205.93 L746.28,205.54 L747.56,205.16 L748.84,204.77 L750.11,204.40 L751.39,204.02 L752.66,203.65 L753.93,203.29 L755.19,202.93 L756.46,202.57 L757.72,202.22 L758.98,201.87 L760.24,201.53 L761.50,201.19 L762.75,200.86 L764.00,200.53 L765.25,200.20 L766.50,199.88 L767.75,199.57 L768.99,199.25 L770.23,198.95 L771.47,198.65 L772.71,198.35 L773.94,198.06 L775.18,197.77 L776.41,197.49 L777.63,197.21 L778.86,196.94 L780.08,196.67 L781.30,196.41 L782.52,196.15 L783.74,195.90 L784.95,195.65 L786.17,195.41 L787.38,195.17 L788.58,194.94 L789.79,194.71 L790.99,194.49 L792.19,194.28 L793.39,194.06 L794.59,193.86 L795.78,193.66 L796.97,193.46 L798.16,193.27 L799.35,193.09 L800.53,192.91 L801.71,192.73 L802.89,192.56 L804.07,192.40 L805.24,192.24 L806.42,192.09 L807.59,191.94 L808.76,191.80 L809.92,191.66 L811.09,191.53 L812.25,191.40 L813.41,191.28 L814.56,191.17 L815.72,191.06 L816.87,190.96 L818.02,190.86 L819.17,190.76 L820.32,190.68 L821.47,190.60 L822.61,190.52 L823.75,190.45 L824.89,190.39 L826.03,190.33 L827.16,190.27 L828.29,190.23 L829.43,190.18 L830.56,190.15 L831.68,190.12 L832.81,190.09 L833.93,190.07 L835.06,190.06 L836.18,190.05 L837.29,190.05 L838.41,190.05 L839.53,190.06 L840.64,190.07 L841.75,190.09 L842.87,190.12 L843.98,190.15 L845.08,190.18 L846.19,190.23 L847.29,190.28 L848.40,190.33 L849.50,190.39 L850.60,190.45 L851.70,190.52 L852.80,190.60" fill="none" stroke="#ffa500" stroke-width="1.6" stroke-dasharray="1.39 2.29"/>
<path d="M597.50,226.50 L598.75,225.21 L600.02,223.92 L601.30,222.63 L602.59,221.34 L603.90,220.05 L605.22,218.76 L606.56,217.48 L607.91,216.19 L609.28,214.90 L610.66,213.61 L612.05,212.32 L613.46,211.03 L614.88,209.74 L616.31,208.45 L617.76,207.16 L619.22,205.87 L620.70,204.58 L622.19,203.30 L623.69,202.01 L625.20,200.72 L626.73,199.43 L628.27,198.14 L629.83,196.85 L631.40,195.56 L632.98,194.27 L634.57,192.99 L636.18,191.70 L637.79,190.41 L639.43,189.12 L641.07,187.83 L642.73,186.54 L644.39,185.25 L646.07,183.97 L647.77,182.68 L649.47,181.39 L651.19,180.10 L652.92,178.81 L654.66,177.52 L656.41,176.24 L658.18,174.95 L659.95,173.66 L661.74,172.37 L663.54,171.09 L665.35,169.80 L667.17,168.51 L669.00,167.22 L670.84,165.93 L672.70,164.65 L674.56,163.36 L676.44,162.07 L678.33,160.78 L680.22,159.50 L682.13,158.21 L684.05,156.92 L685.98,155.64 L687.91,154.35 L689.86,153.06 L691.82,151.78 L693.79,150.49 L695.77,149.20 L697.76,147.92 L699.75,146.63 L701.76,145.34 L703.78,144.06 L705.80,142.77 L707.84,141.49 L709.88,140.20 L711.93,138.91 L713.99,137.63 L716.06,136.34 L718.14,135.06 L720.23,133.77 L722.33,132.49 L724.43,131.20 L726.54,129.92 L728.66,128.63 L730.79,127.35 L732.93,126.07 L735.07,124.78 L737.22,123.50 L739.38,122.22 L741.55,120.93 L743.72,119.65 L745.90,118.37 L748.09,117.08 L750.29,115.80 L752.49,114.52 L754.70,113.24 L756.91,111.96 L759.13,110.68 L761.36,109.39 L763.59,108.11 L765.83,106.83 L768.08,105.55 L770.33,104.27 L772.59,103.00 L774.85,101.72 L777.12,100.44 L779.39,99.16 L781.67,97.88 L783.95,96.61 L786.23,95.33 L788.53,94.06 L790.82,92.78 L793.12,91.51 L795.42,90.23 L797.73,88.96 L800.04,87.69 L802.36,86.42 L804.68,85.15 L807.00,83.88 L809.32,82.61 L811.65,81.34 L813.97,80.08 L816.30,78.81 L818.64,77.55 L820.97,76.29 L823.30,75.02 L825.64,73.77 L827.98,72.51 L830.31,71.25 L832.65,70.00 L834.98,68.75 L837.32,67.50 L839.65,66.26 L841.98,65.02 L844.31,63.78 L846.63,62.54 L848.95,61.31 L851.27,60.09 L853.57,58.87 L855.88,57.65 L858.17,56.44 L860.45,55.24 L862.73,54.05 L864.99,52.87 L867.24,51.70 L869.46,50.54 L871.67,49.40 L873.86,48.27 L876.02,47.16 L878.15,46.08 L880.25,45.03 L882.30,44.00 L884.30,43.02 L886.25,42.09 L888.14,41.21 L889.96,40.40 L891.70,39.68 L893.35,39.05 L894.91,38.54 L896.39,38.15 L897.78,37.91 L899.10,37.83 L900.37,37.90 L901.60,38.13 L902.82,38.50 L904.05,39.01 L905.29,39.63 L906.55,40.35 L907.83,41.15 L909.14,42.03 L910.48,42.96 L911.84,43.93 L913.22,44.95 L914.62,46.01 L916.04,47.09 L917.48,48.19 L918.93,49.32 L920.39,50.46 L921.86,51.62 L923.34,52.79 L924.83,53.97 L926.33,55.16 L927.83,56.36 L929.34,57.57 L930.85,58.78 L932.37,60.00 L933.89,61.23 L935.41,62.46 L936.94,63.69 L938.47,64.93 L940.00,66.17 L941.53,67.42 L943.06,68.66 L944.59,69.91 L946.13,71.17 L947.66,72.42 L949.19,73.68 L950.73,74.94 L952.26,76.20 L953.79,77.46 L955.32,78.72 L956.85,79.99 L958.38,81.25 L959.91,82.52 L961.43,83.79 L962.96,85.06 L964.48,86.33 L966.00,87.60" fill="none" stroke="#dd00ff" stroke-width="1.6" stroke-dasharray="1.39 2.29"/>
<path d="M597.50,226.50 L599.07,225.69 L600.64,224.89 L602.22,224.08 L603.79,223.28 L605.38,222.48 L606.96,221.68 L608.55,220.89 L610.14,220.09 L611.74,219.30 L613.34,218.51 L614.94,217.73 L616.54,216.94 L618.15,216.16 L619.76,215.38 L621.37,214.61 L622.99,213.83 L624.60,213.06 L626.22,212.30 L627.84,211.53 L629.46,210.77 L631.09,210.01 L632.72,209.25 L634.34,208.50 L635.97,207.74 L637.60,207.00 L639.24,206.25 L640.87,205.51 L642.50,204.77 L644.14,204.03 L645.77,203.30 L647.41,202.57 L649.05,201.84 L650.69,201.12 L652.33,200.40 L653.96,199.68 L655.60,198.97 L657.24,198.26 L658.88,197.56 L660.52,196.85 L662.16,196.15 L663.80,195.46 L665.43,194.77 L667.07,194.08 L668.71,193.40 L670.34,192.71 L671.98,192.04 L673.61,191.37 L675.24,190.70 L676.88,190.03 L678.51,189.37 L680.13,188.72 L681.76,188.07 L683.39,187.42 L685.01,186.78 L686.63,186.14 L688.25,185.51 L689.87,184.88 L691.48,184.25 L693.09,183.63 L694.71,183.02 L696.31,182.41 L697.92,181.80 L699.52,181.20 L701.12,180.60 L702.71,180.01 L704.31,179.43 L705.90,178.85 L707.48,178.27 L709.07,177.70 L710.65,177.14 L712.22,176.58 L713.80,176.02 L715.36,175.47 L716.93,174.93 L718.49,174.39 L720.05,173.86 L721.60,173.34 L723.15,172.82 L724.69,172.30 L726.23,171.79 L727.76,171.29 L729.29,170.80 L730.82,170.31 L732.34,169.82 L733.85,169.35 L735.36,168.88 L736.87,168.41 L738.37,167.95 L739.87,167.50 L741.36,167.06 L742.84,166.62 L744.32,166.19 L745.79,165.76 L747.26,165.35 L748.72,164.94 L750.18,164.53 L751.63,164.14 L753.08,163.75 L754.52,163.37 L755.95,162.99 L757.38,162.62 L758.80,162.26 L760.22,161.91 L761.63,161.57 L763.03,161.23 L764.43,160.90 L765.82,160.58 L767.20,160.27 L768.58,159.96 L769.96,159.66 L771.32,159.37 L772.68,159.09 L774.04,158.81 L775.39,158.55 L776.73,158.29 L778.06,158.04 L779.39,157.80 L780.71,157.56 L782.03,157.34 L783.34,157.12 L784.64,156.92 L785.94,156.72 L787.23,156.52 L788.52,156.34 L789.79,156.17 L791.07,156.00 L792.33,155.85 L793.59,155.70 L794.85,155.56 L796.09,155.43 L797.34,155.31 L798.57,155.19 L799.80,155.09 L801.03,154.99 L802.24,154.91 L803.46,154.83 L804.66,154.76 L805.86,154.70 L807.06,154.65 L808.25,154.61 L809.43,154.58 L810.61,154.55 L811.78,154.54 L812.95,154.53 L814.11,154.53 L815.27,154.55 L816.42,154.57 L817.56,154.60 L818.71,154.64 L819.84,154.68 L820.97,154.74 L822.10,154.81 L823.22,154.88 L824.34,154.96 L825.45,155.06 L826.56,155.16 L827.67,155.27 L828.77,155.39 L829.86,155.51 L830.95,155.65 L832.04,155.79 L833.12,155.95 L834.20,156.11 L835.28,156.28 L836.35,156.46 L837.42,156.65 L838.48,156.85 L839.55,157.05 L840.60,157.27 L841.66,157.49 L842.71,157.72 L843.76,157.96 L844.80,158.20 L845.85,158.46 L846.89,158.72 L847.92,158.99 L848.96,159.27 L849.99,159.56 L851.02,159.86 L852.05,160.16 L853.07,160.47 L854.10,160.79 L855.12,161.12 L856.13,161.45 L857.15,161.80 L858.16,162.14 L859.18,162.50 L860.19,162.87 L861.20,163.24 L862.20,163.62 L863.21,164.00 L864.21,164.40 L865.22,164.80 L866.22,165.21 L867.22,165.62 L868.22,166.04 L869.21,166.47 L870.21,166.91 L871.21,167.35 L872.20,167.80" fill="none" stroke="#dd00ff" stroke-width="1.6" stroke-dasharray="1.39 2.29"/>
<path d="M775.80,271.10 L776.39,269.87 L776.98,268.63 L777.58,267.40 L778.19,266.16 L778.80,264.93 L779.42,263.70 L780.04,262.46 L780.67,261.23 L781.30,260.00 L781.94,258.76 L782.58,257.53 L783.23,256.30 L783.88,255.07 L784.54,253.84 L785.20,252.61 L785.87,251.38 L786.55,250.14 L787.22,248.91 L787.91,247.68 L788.60,246.45 L789.29,245.23 L789.99,244.00 L790.69,242.77 L791.40,241.54 L792.11,240.31 L792.83,239.08 L793.55,237.86 L794.27,236.63 L795.01,235.40 L795.74,234.18 L796.48,232.95 L797.22,231.73 L797.97,230.50 L798.73,229.28 L799.48,228.05 L800.25,226.83 L801.01,225.61 L801.78,224.38 L802.56,223.16 L803.33,221.94 L804.12,220.72 L804.90,219.50 L805.69,218.28 L806.49,217.06 L807.29,215.84 L808.09,214.62 L808.90,213.40 L809.71,212.18 L810.52,210.97 L811.34,209.75 L812.16,208.54 L812.98,207.32 L813.81,206.11 L814.64,204.89 L815.48,203.68 L816.32,202.47 L817.16,201.26 L818.01,200.05 L818.86,198.84 L819.71,197.63 L820.56,196.42 L821.42,195.21 L822.28,194.01 L823.15,192.80 L824.02,191.60 L824.89,190.39 L825.76,189.19 L826.64,187.99 L827.52,186.79 L828.40,185.59 L829.28,184.39 L830.17,183.19 L831.06,181.99 L831.95,180.80 L832.85,179.60 L833.74,178.41 L834.64,177.22 L835.55,176.02 L836.45,174.83 L837.36,173.65 L838.27,172.46 L839.18,171.27 L840.09,170.09 L841.01,168.90 L841.92,167.72 L842.84,166.54 L843.76,165.36 L844.69,164.19 L845.61,163.01 L846.54,161.84 L847.46,160.66 L848.39,159.49 L849.32,158.32 L850.26,157.16 L851.19,155.99 L852.13,154.83 L853.06,153.67 L854.00,152.51 L854.94,151.35 L855.88,150.20 L856.82,149.04 L857.76,147.89 L858.70,146.75 L859.65,145.60 L860.59,144.46 L861.54,143.32 L862.49,142.18 L863.43,141.04 L864.38,139.91 L865.33,138.78 L866.28,137.66 L867.22,136.53 L868.17,135.41 L869.12,134.30 L870.07,133.18 L871.02,132.07 L871.97,130.97 L872.92,129.87 L873.87,128.77 L874.82,127.67 L875.77,126.58 L876.72,125.50 L877.67,124.41 L878.62,123.34 L879.57,122.27 L880.52,121.20 L881.47,120.14 L882.42,119.08 L883.37,118.03 L884.31,116.98 L885.26,115.94 L886.21,114.91 L887.15,113.88 L888.10,112.86 L889.04,111.84 L889.98,110.83 L890.93,109.83 L891.87,108.84 L892.81,107.85 L893.75,106.88 L894.69,105.91 L895.63,104.95 L896.57,104.00 L897.51,103.05 L898.45,102.12 L899.39,101.20 L900.33,100.29 L901.26,99.39 L902.20,98.50 L903.14,97.62 L904.07,96.75 L905.01,95.90 L905.95,95.06 L906.89,94.23 L907.83,93.42 L908.77,92.62 L909.71,91.83 L910.65,91.07 L911.60,90.32 L912.54,89.58 L913.49,88.86 L914.44,88.16 L915.40,87.48 L916.36,86.82 L917.32,86.18 L918.29,85.56 L919.27,84.96 L920.25,84.38 L921.23,83.83 L922.23,83.30 L923.23,82.79 L924.24,82.31 L925.26,81.85 L926.29,81.42 L927.33,81.01 L928.38,80.63 L929.45,80.28 L930.53,79.96 L931.63,79.67 L932.74,79.40 L933.87,79.17 L935.01,78.97 L936.18,78.79 L937.36,78.65 L938.56,78.54 L939.79,78.46 L941.04,78.41 L942.31,78.39 L943.60,78.41 L944.92,78.45 L946.27,78.53 L947.64,78.64 L949.04,78.78 L950.46,78.95 L951.91,79.15 L953.39,79.38 L954.90,79.64 L956.44,79.93 L958.01,80.25 L959.60,80.60" fill="none" stroke="#ff2200" stroke-width="1.6" stroke-dasharray="1.39 2.29"/>
<path d="M762.60,271.00 L763.47,269.78 L764.34,268.57 L765.22,267.35 L766.11,266.14 L767.00,264.93 L767.90,263.71 L768.80,262.50 L769.71,261.29 L770.62,260.08 L771.54,258.87 L772.47,257.66 L773.40,256.45 L774.33,255.24 L775.27,254.03 L776.22,252.83 L777.17,251.62 L778.12,250.42 L779.09,249.21 L780.05,248.01 L781.02,246.81 L782.00,245.61 L782.97,244.41 L783.96,243.21 L784.95,242.01 L785.94,240.81 L786.94,239.61 L787.94,238.42 L788.95,237.23 L789.96,236.03 L790.98,234.84 L792.00,233.65 L793.02,232.46 L794.05,231.27 L795.08,230.09 L796.11,228.90 L797.15,227.72 L798.20,226.53 L799.24,225.35 L800.30,224.17 L801.35,222.99 L802.41,221.82 L803.47,220.64 L804.54,219.47 L805.60,218.29 L806.68,217.12 L807.75,215.95 L808.83,214.78 L809.91,213.62 L811.00,212.45 L812.08,211.29 L813.17,210.13 L814.27,208.97 L815.36,207.82 L816.46,206.66 L817.56,205.51 L818.67,204.36 L819.77,203.21 L820.88,202.06 L821.99,200.92 L823.11,199.77 L824.22,198.63 L825.34,197.50 L826.46,196.36 L827.58,195.23 L828.71,194.10 L829.83,192.97 L830.96,191.84 L832.09,190.72 L833.22,189.60 L834.36,188.48 L835.49,187.37 L836.63,186.26 L837.76,185.15 L838.90,184.05 L840.04,182.94 L841.18,181.84 L842.33,180.75 L843.47,179.65 L844.61,178.57 L845.76,177.48 L846.91,176.40 L848.05,175.32 L849.20,174.24 L850.35,173.17 L851.50,172.11 L852.65,171.04 L853.80,169.98 L854.95,168.93 L856.10,167.88 L857.25,166.83 L858.40,165.79 L859.55,164.75 L860.71,163.72 L861.86,162.69 L863.01,161.67 L864.16,160.65 L865.31,159.64 L866.47,158.63 L867.62,157.63 L868.77,156.63 L869.92,155.64 L871.07,154.65 L872.22,153.68 L873.37,152.70 L874.52,151.74 L875.67,150.77 L876.82,149.82 L877.97,148.87 L879.11,147.93 L880.26,147.00 L881.41,146.07 L882.55,145.15 L883.70,144.24 L884.84,143.34 L885.99,142.44 L887.13,141.55 L888.27,140.67 L889.41,139.80 L890.56,138.94 L891.70,138.09 L892.84,137.24 L893.98,136.41 L895.12,135.58 L896.26,134.76 L897.39,133.96 L898.53,133.16 L899.67,132.38 L900.81,131.60 L901.94,130.84 L903.08,130.08 L904.22,129.34 L905.36,128.61 L906.49,127.89 L907.63,127.19 L908.77,126.50 L909.91,125.81 L911.05,125.15 L912.19,124.49 L913.33,123.85 L914.48,123.22 L915.62,122.61 L916.77,122.01 L917.92,121.43 L919.07,120.86 L920.22,120.30 L921.37,119.76 L922.53,119.24 L923.69,118.73 L924.86,118.24 L926.03,117.77 L927.20,117.31 L928.37,116.87 L929.55,116.44 L930.74,116.04 L931.93,115.65 L933.12,115.28 L934.32,114.93 L935.53,114.59 L936.75,114.28 L937.97,113.98 L939.19,113.70 L940.43,113.45 L941.67,113.21 L942.92,112.99 L944.18,112.79 L945.45,112.61 L946.73,112.45 L948.02,112.31 L949.31,112.19 L950.62,112.09 L951.94,112.01 L953.27,111.96 L954.61,111.92 L955.96,111.90 L957.33,111.90 L958.71,111.93 L960.10,111.97 L961.50,112.04 L962.92,112.12 L964.35,112.23 L965.79,112.35 L967.25,112.50 L968.72,112.67 L970.20,112.85 L971.70,113.06 L973.22,113.28 L974.75,113.53 L976.29,113.79 L977.85,114.08 L979.42,114.38 L981.01,114.70 L982.62,115.04 L984.24,115.40 L985.87,115.77 L987.52,116.17 L989.19,116.58 L990.87,117.01 L992.56,117.46 L994.27,117.92 L996.00,118.40" fill="none" stroke="#ff2200" stroke-width="1.6" stroke-dasharray="1.39 2.29"/>
<path d="M762.60,271.00 L763.59,269.76 L764.59,268.53 L765.59,267.29 L766.60,266.06 L767.61,264.82 L768.63,263.59 L769.65,262.36 L770.68,261.13 L771.72,259.89 L772.76,258.67 L773.81,257.44 L774.86,256.21 L775.92,254.98 L776.98,253.76 L778.05,252.54 L779.12,251.31 L780.20,250.09 L781.28,248.87 L782.37,247.65 L783.46,246.44 L784.55,245.22 L785.66,244.00 L786.76,242.79 L787.87,241.58 L788.99,240.37 L790.11,239.16 L791.23,237.95 L792.36,236.75 L793.49,235.54 L794.63,234.34 L795.77,233.14 L796.91,231.94 L798.06,230.74 L799.21,229.55 L800.36,228.35 L801.52,227.16 L802.69,225.97 L803.85,224.78 L805.02,223.60 L806.19,222.41 L807.37,221.23 L808.55,220.05 L809.73,218.87 L810.92,217.70 L812.10,216.52 L813.29,215.35 L814.49,214.18 L815.68,213.02 L816.88,211.85 L818.09,210.69 L819.29,209.53 L820.50,208.38 L821.70,207.23 L822.92,206.08 L824.13,204.93 L825.34,203.78 L826.56,202.64 L827.78,201.50 L829.00,200.37 L830.23,199.24 L831.45,198.11 L832.68,196.98 L833.90,195.86 L835.13,194.74 L836.36,193.63 L837.60,192.51 L838.83,191.41 L840.06,190.30 L841.30,189.20 L842.54,188.11 L843.77,187.01 L845.01,185.93 L846.25,184.84 L847.49,183.76 L848.73,182.69 L849.97,181.62 L851.21,180.55 L852.46,179.49 L853.70,178.43 L854.94,177.38 L856.18,176.33 L857.43,175.29 L858.67,174.25 L859.91,173.22 L861.16,172.20 L862.40,171.18 L863.65,170.16 L864.89,169.16 L866.13,168.15 L867.38,167.16 L868.62,166.17 L869.86,165.18 L871.10,164.21 L872.34,163.24 L873.59,162.27 L874.83,161.32 L876.07,160.37 L877.31,159.43 L878.55,158.49 L879.78,157.56 L881.02,156.65 L882.26,155.73 L883.50,154.83 L884.73,153.94 L885.97,153.05 L887.20,152.17 L888.44,151.31 L889.67,150.45 L890.91,149.60 L892.14,148.76 L893.37,147.92 L894.60,147.10 L895.83,146.29 L897.06,145.49 L898.30,144.70 L899.53,143.92 L900.76,143.15 L901.99,142.40 L903.22,141.65 L904.45,140.92 L905.68,140.19 L906.91,139.48 L908.14,138.79 L909.37,138.10 L910.60,137.43 L911.83,136.77 L913.07,136.12 L914.30,135.49 L915.54,134.87 L916.78,134.27 L918.01,133.68 L919.25,133.10 L920.50,132.54 L921.74,131.99 L922.99,131.46 L924.24,130.95 L925.49,130.45 L926.74,129.96 L928.00,129.49 L929.26,129.04 L930.53,128.61 L931.80,128.19 L933.07,127.79 L934.35,127.40 L935.63,127.04 L936.92,126.69 L938.22,126.36 L939.52,126.04 L940.82,125.75 L942.13,125.47 L943.45,125.21 L944.78,124.97 L946.11,124.75 L947.45,124.55 L948.80,124.37 L950.16,124.21 L951.52,124.06 L952.90,123.94 L954.28,123.83 L955.67,123.74 L957.08,123.68 L958.49,123.63 L959.91,123.60 L961.35,123.59 L962.79,123.61 L964.24,123.64 L965.71,123.69 L967.19,123.76 L968.68,123.85 L970.18,123.96 L971.70,124.09 L973.23,124.23 L974.77,124.40 L976.32,124.59 L977.88,124.79 L979.46,125.02 L981.05,125.26 L982.66,125.52 L984.28,125.80 L985.91,126.10 L987.56,126.41 L989.22,126.75 L990.89,127.10 L992.58,127.47 L994.28,127.86 L995.99,128.26 L997.72,128.68 L999.46,129.12 L1001.22,129.57 L1002.99,130.04 L1004.77,130.53 L1006.57,131.03 L1008.38,131.55 L1010.20,132.09 L1012.03,132.64 L1013.88,133.20 L1015.74,133.78 L1017.62,134.37 L1019.50,134.98 L1021.40,135.60" fill="none" stroke="#ff2200" stroke-width="1.6" stroke-dasharray="1.39 2.29"/>
<path d="M888.00,64.00 L888.74,63.87 L889.48,63.76 L890.21,63.66 L890.94,63.57 L891.67,63.49 L892.39,63.43 L893.11,63.38 L893.82,63.35 L894.53,63.33 L895.24,63.32 L895.94,63.33 L896.64,63.35 L897.34,63.38 L898.04,63.43 L898.74,63.49 L899.43,63.57 L900.12,63.66 L900.82,63.76 L901.51,63.87 L902.20,64.00" fill="none" stroke="#ffa500" stroke-width="2.2"/>
<circle cx="902.2" cy="64.0" r="1.6" fill="#ff7f66"/>
<path d="M857.80,110.20 L858.76,109.95 L859.72,109.70 L860.68,109.46 L861.63,109.23 L862.58,109.01 L863.53,108.79 L864.47,108.59 L865.41,108.39 L866.34,108.20 L867.27,108.02 L868.20,107.85 L869.12,107.69 L870.04,107.53 L870.96,107.39 L871.88,107.25 L872.79,107.12 L873.69,107.00 L874.60,106.89 L875.50,106.79 L876.40,106.70" fill="none" stroke="#ffa500" stroke-width="2.2"/>
<circle cx="876.4" cy="106.7" r="1.6" fill="#ff7f66"/>
<path d="M884.40,115.60 L885.03,115.63 L885.66,115.66 L886.29,115.70 L886.92,115.75 L887.55,115.79 L888.17,115.84 L888.80,115.90 L889.43,115.96 L890.05,116.02 L890.68,116.09 L891.30,116.16 L891.92,116.24 L892.55,116.32 L893.17,116.41 L893.79,116.49 L894.41,116.59 L895.04,116.68 L895.66,116.79 L896.28,116.89 L896.90,117.00" fill="none" stroke="#ffa500" stroke-width="2.2"/>
<circle cx="896.9" cy="117.0" r="1.6" fill="#ff7f66"/>
<path d="M853.90,164.70 L854.47,164.70 L855.05,164.69 L855.62,164.70 L856.20,164.70 L856.77,164.70 L857.34,164.71 L857.91,164.72 L858.48,164.73 L859.05,164.74 L859.62,164.75 L860.19,164.77 L860.76,164.79 L861.33,164.81 L861.90,164.83 L862.47,164.85 L863.04,164.88 L863.60,164.91 L864.17,164.93 L864.73,164.97 L865.30,165.00" fill="none" stroke="#ffa500" stroke-width="2.2"/>
<circle cx="865.3" cy="165.0" r="1.6" fill="#ff7f66"/>
<path d="M828.30,190.80 L829.13,190.77 L829.96,190.75 L830.78,190.72 L831.61,190.70 L832.43,190.69 L833.26,190.67 L834.08,190.66 L834.90,190.66 L835.72,190.65 L836.54,190.65 L837.36,190.65 L838.18,190.66 L839.00,190.66 L839.82,190.67 L840.63,190.69 L841.45,190.70 L842.26,190.72 L843.08,190.75 L843.89,190.77 L844.70,190.80" fill="none" stroke="#ffa500" stroke-width="2.2"/>
<circle cx="844.7" cy="190.8" r="1.6" fill="#ff7f66"/>
<path d="M852.80,190.60 L853.38,190.66 L853.97,190.71 L854.55,190.77 L855.13,190.83 L855.71,190.89 L856.29,190.95 L856.87,191.02 L857.45,191.08 L858.03,191.15 L858.62,191.22 L859.19,191.29 L859.77,191.36 L860.35,191.44 L860.93,191.51 L861.51,191.59 L862.09,191.67 L862.67,191.75 L863.25,191.83 L863.82,191.92 L864.40,192.00" fill="none" stroke="#ffa500" stroke-width="2.2"/>
<circle cx="864.4" cy="192.0" r="1.6" fill="#ff7f66"/>
<path d="M966.00,87.60 L967.11,88.52 L968.22,89.43 L969.33,90.35 L970.44,91.27 L971.55,92.19 L972.66,93.10 L973.76,94.02 L974.87,94.94 L975.97,95.86 L977.07,96.78 L978.17,97.70 L979.27,98.62 L980.37,99.54 L981.46,100.47 L982.56,101.39 L983.65,102.31 L984.74,103.23 L985.83,104.15 L986.91,105.08 L988.00,106.00" fill="none" stroke="#dd00ff" stroke-width="2.2"/>
<circle cx="988.0" cy="106.0" r="1.6" fill="#ff7f66"/>
<path d="M872.20,167.80 L872.90,168.14 L873.61,168.47 L874.31,168.81 L875.01,169.16 L875.71,169.51 L876.41,169.86 L877.11,170.21 L877.82,170.57 L878.52,170.93 L879.22,171.30 L879.92,171.66 L880.61,172.03 L881.31,172.41 L882.01,172.78 L882.71,173.16 L883.41,173.54 L884.11,173.93 L884.80,174.32 L885.50,174.71 L886.20,175.10" fill="none" stroke="#dd00ff" stroke-width="2.2"/>
<circle cx="886.2" cy="175.1" r="1.6" fill="#ff7f66"/>
<path d="M959.60,80.60 L960.17,80.74 L960.74,80.88 L961.32,81.03 L961.89,81.18 L962.48,81.34 L963.06,81.49 L963.65,81.65 L964.24,81.82 L964.84,81.98 L965.44,82.15 L966.04,82.32 L966.64,82.50 L967.25,82.68 L967.86,82.86 L968.48,83.04 L969.10,83.23 L969.72,83.42 L970.34,83.61 L970.97,83.80 L971.60,84.00" fill="none" stroke="#ff2200" stroke-width="2.2"/>
<circle cx="971.6" cy="84.0" r="1.6" fill="#ff7f66"/>
<path d="M996.00,118.40 L997.25,118.76 L998.51,119.12 L999.78,119.49 L1001.05,119.87 L1002.33,120.26 L1003.62,120.66 L1004.92,121.07 L1006.22,121.48 L1007.53,121.90 L1008.85,122.33 L1010.17,122.76 L1011.51,123.20 L1012.84,123.65 L1014.19,124.11 L1015.54,124.58 L1016.90,125.05 L1018.27,125.53 L1019.64,126.01 L1021.02,126.50 L1022.40,127.00" fill="none" stroke="#ff2200" stroke-width="2.2"/>
<circle cx="1022.4" cy="127.0" r="1.6" fill="#ff7f66"/>
<path d="M1021.40,135.60 L1022.48,135.95 L1023.56,136.31 L1024.64,136.67 L1025.73,137.03 L1026.82,137.40 L1027.91,137.77 L1029.01,138.15 L1030.11,138.53 L1031.22,138.91 L1032.33,139.30 L1033.44,139.69 L1034.55,140.09 L1035.67,140.49 L1036.80,140.89 L1037.92,141.30 L1039.05,141.71 L1040.18,142.13 L1041.32,142.55 L1042.46,142.97 L1043.60,143.40" fill="none" stroke="#ff2200" stroke-width="2.2"/>
<circle cx="1043.6" cy="143.4" r="1.6" fill="#ff7f66"/>
<path d="M841.80,144.00 L840.41,143.11 L839.01,142.25 L837.59,141.42 L836.17,140.60 L834.73,139.82 L833.28,139.06 L831.82,138.33 L830.34,137.63 L828.85,136.95 L827.34,136.31 L825.81,135.69 L824.27,135.10 L822.70,134.55 L821.12,134.02 L819.52,133.53 L817.89,133.07 L816.24,132.64 L814.57,132.24 L812.87,131.88 L811.15,131.55 L809.41,131.25 L807.63,130.99 L805.83,130.76 L804.00,130.57 L802.14,130.41 L800.24,130.29 L798.32,130.20 L796.37,130.14 L794.38,130.12 L792.36,130.14 L790.31,130.19 L788.22,130.28 L786.10,130.40 L783.94,130.56 L781.74,130.75 L779.51,130.97 L777.25,131.23 L774.95,131.53 L772.61,131.85 L770.23,132.21 L767.82,132.61 L765.37,133.04 L762.88,133.49 L760.36,133.99 L757.80,134.51 L755.21,135.06 L752.58,135.65 L749.91,136.26 L747.21,136.90 L744.48,137.58 L741.71,138.28 L738.91,139.00 L736.08,139.76 L733.21,140.54 L730.31,141.35 L727.39,142.19 L724.43,143.05 L721.44,143.93 L718.43,144.84 L715.39,145.77 L712.32,146.73 L709.23,147.70 L706.11,148.70 L702.97,149.72 L699.81,150.76 L696.62,151.82 L693.41,152.90 L690.19,154.00 L686.94,155.12 L683.68,156.26 L680.40,157.41 L677.11,158.58 L673.80,159.77 L670.47,160.97 L667.14,162.19 L663.79,163.43 L660.43,164.68 L657.06,165.94 L653.68,167.22 L650.30,168.51 L646.91,169.82 L643.51,171.14 L640.11,172.47 L636.70,173.81 L633.29,175.17 L629.88,176.53 L626.46,177.91 L623.05,179.30 L619.64,180.70 L616.23,182.11 L612.82,183.53 L609.41,184.96 L606.01,186.39 L602.62,187.84 L599.23,189.30 L595.84,190.76 L592.47,192.24 L589.10,193.72 L585.74,195.21 L582.39,196.70 L579.06,198.21 L575.73,199.72 L572.42,201.24 L569.12,202.77 L565.83,204.30 L562.56,205.84 L559.30,207.38 L556.06,208.93 L552.83,210.49 L549.63,212.05 L546.44,213.62 L543.26,215.19 L540.11,216.77 L536.98,218.36 L533.87,219.94 L530.78,221.54 L527.71,223.14 L524.66,224.74 L521.64,226.35 L518.64,227.96 L515.67,229.57 L512.71,231.19 L509.79,232.82 L506.89,234.44 L504.02,236.07 L501.17,237.71 L498.35,239.35 L495.56,240.99 L492.79,242.63 L490.06,244.28 L487.35,245.93 L484.68,247.58 L482.03,249.24 L479.42,250.90 L476.84,252.56 L474.28,254.23 L471.77,255.89 L469.28,257.56 L466.82,259.24 L464.40,260.91 L462.01,262.59 L459.66,264.26 L457.34,265.94 L455.06,267.63 L452.81,269.31 L450.59,271.00 L448.42,272.68 L446.27,274.37 L444.17,276.06 L442.10,277.76 L440.07,279.45 L438.07,281.14 L436.12,282.84 L434.20,284.54 L432.32,286.24 L430.48,287.94 L428.67,289.64 L426.91,291.34 L425.18,293.04 L423.50,294.75 L421.85,296.45 L420.25,298.16 L418.68,299.87 L417.15,301.57 L415.67,303.28 L414.22,304.99 L412.82,306.70 L411.46,308.41 L410.14,310.12 L408.86,311.82 L407.62,313.54 L406.42,315.25 L405.26,316.96 L404.15,318.67 L403.08,320.38 L402.05,322.09 L401.06,323.80 L400.11,325.51 L399.21,327.22 L398.35,328.93 L397.53,330.64 L396.75,332.35 L396.02,334.06 L395.33,335.77 L394.68,337.47 L394.07,339.18 L393.50,340.89 L392.98,342.60 L392.50,344.30 L392.06,346.01 L391.67,347.71 L391.32,349.41 L391.00,351.12 L390.74,352.82 L390.51,354.52 L390.32,356.22 L390.18,357.91 L390.08,359.61 L390.02,361.31 L390.00,363.00 M893.30,131.60 L892.47,129.72 L891.64,127.84 L890.81,125.98 L889.98,124.12 L889.15,122.28 L888.32,120.45 L887.50,118.62 L886.67,116.82 L885.84,115.02 L885.00,113.24 L884.17,111.47 L883.34,109.72 L882.50,107.98 L881.66,106.27 L880.82,104.57 L879.97,102.89 L879.13,101.23 L878.27,99.60 L877.41,97.99 L876.54,96.41 L875.66,94.86 L874.78,93.34 L873.88,91.85 L872.97,90.40 L872.04,88.98 L871.10,87.61 L870.13,86.27 L869.15,84.99 L868.13,83.75 L867.09,82.56 L866.01,81.43 L864.90,80.36 L863.74,79.36 L862.54,78.42 L861.28,77.55 L859.97,76.75 L858.59,76.04 L857.13,75.40 L855.60,74.85 L853.99,74.39 L852.28,74.02 L850.48,73.74 L848.57,73.55 L846.55,73.46 L844.42,73.47 L842.17,73.57 L839.80,73.77 L837.30,74.06 L834.68,74.44 L831.94,74.91 L829.06,75.47 L826.06,76.12 L822.94,76.85 L819.69,77.65 L816.33,78.53 L812.86,79.48 L809.28,80.49 L805.59,81.57 L801.80,82.71 L797.92,83.90 L793.95,85.14 L789.90,86.43 L785.77,87.77 L781.57,89.15 L777.29,90.57 L772.96,92.03 L768.56,93.53 L764.11,95.05 L759.62,96.61 L755.07,98.19 L750.48,99.80 L745.86,101.44 L741.20,103.10 L736.51,104.78 L731.80,106.48 L727.06,108.20 L722.30,109.93 L717.52,111.69 L712.72,113.46 L707.92,115.24 L703.10,117.04 L698.27,118.85 L693.44,120.67 L688.60,122.51 L683.77,124.35 L678.93,126.21 L674.10,128.07 L669.27,129.95 L664.44,131.83 L659.63,133.72 L654.82,135.62 L650.02,137.53 L645.24,139.44 L640.47,141.37 L635.72,143.29 L630.98,145.22 L626.26,147.16 L621.56,149.11 L616.88,151.06 L612.22,153.01 L607.58,154.97 L602.97,156.93 L598.38,158.90 L593.82,160.87 L589.29,162.85 L584.78,164.82 L580.31,166.81 L575.86,168.79 L571.45,170.78 L567.06,172.77 L562.71,174.77 L558.39,176.77 L554.11,178.77 L549.87,180.77 L545.66,182.78 L541.48,184.79 L537.35,186.80 L533.25,188.81 L529.19,190.82 L525.18,192.84 L521.20,194.86 L517.27,196.88 L513.37,198.90 L509.52,200.93 L505.72,202.95 L501.96,204.98 L498.24,207.01 L494.57,209.04 L490.95,211.07 L487.37,213.11 L483.84,215.14 L480.36,217.18 L476.92,219.22 L473.54,221.26 L470.20,223.29 L466.92,225.34 L463.68,227.38 L460.50,229.42 L457.37,231.46 L454.29,233.51 L451.27,235.56 L448.29,237.60 L445.38,239.65 L442.51,241.70 L439.70,243.75 L436.95,245.80 L434.25,247.85 L431.60,249.90 L429.01,251.95 L426.48,254.00 L424.01,256.06 L421.59,258.11 L419.23,260.17 L416.93,262.22 L414.69,264.28 L412.51,266.33 L410.38,268.39 L408.32,270.45 L406.32,272.50 L404.37,274.56 L402.49,276.62 L400.66,278.68 L398.90,280.74 L397.20,282.80 L395.56,284.86 L393.98,286.92 L392.46,288.98 L391.01,291.04 L389.61,293.10 L388.28,295.16 L387.01,297.22 L385.81,299.28 L384.67,301.34 L383.59,303.40 L382.57,305.46 L381.62,307.53 L380.73,309.59 L379.91,311.65 L379.15,313.71 L378.45,315.77 L377.82,317.84 L377.25,319.90 L376.74,321.96 L376.30,324.02 L375.93,326.08 L375.62,328.15 L375.37,330.21 L375.19,332.27 L375.07,334.33 L375.01,336.39 L375.02,338.45 L375.10,340.52 L375.23,342.58 L375.44,344.64 L375.70,346.70 L376.04,348.76 L376.43,350.82 L376.89,352.88 L377.41,354.94 L378.00,357.00 M1071.00,112.00 L1070.11,111.39 L1069.22,110.79 L1068.33,110.18 L1067.44,109.57 L1066.54,108.97 L1065.65,108.37 L1064.76,107.76 L1063.86,107.16 L1062.97,106.56 L1062.08,105.96 L1061.18,105.36 L1060.29,104.76 L1059.39,104.16 L1058.50,103.56 L1057.60,102.96 L1056.71,102.37 L1055.82,101.77 L1054.92,101.18 L1054.03,100.58 L1053.13,99.99 L1052.24,99.40 L1051.35,98.81 L1050.46,98.22 L1049.56,97.63 L1048.67,97.04 L1047.78,96.45 L1046.89,95.87 L1046.00,95.28 L1045.12,94.70 L1044.23,94.12 L1043.34,93.54 L1042.46,92.96 L1041.58,92.38 L1040.70,91.80 L1039.82,91.23 L1038.94,90.65 L1038.06,90.08 L1037.19,89.51 L1036.31,88.94 L1035.44,88.37 L1034.57,87.81 L1033.71,87.24 L1032.84,86.68 L1031.98,86.12 L1031.12,85.56 L1030.27,85.00 L1029.41,84.45 L1028.56,83.89 L1027.72,83.34 L1026.87,82.79 L1026.03,82.24 L1025.20,81.70 L1024.37,81.16 L1023.54,80.62 L1022.72,80.08 L1021.90,79.54 L1021.08,79.01 L1020.28,78.48 L1019.47,77.95 L1018.67,77.43 L1017.88,76.90 L1017.10,76.39 L1016.32,75.87 L1015.54,75.36 L1014.78,74.85 L1014.02,74.34 L1013.26,73.84 L1012.52,73.34 L1011.78,72.85 L1011.05,72.36 L1010.34,71.87 L1009.62,71.39 L1008.92,70.91 L1008.23,70.44 L1007.55,69.97 L1006.88,69.50 L1006.23,69.04 L1005.58,68.59 L1004.95,68.14 L1004.33,67.70 L1003.72,67.26 L1003.12,66.83 L1002.55,66.40 L1001.98,65.98 L1001.43,65.57 L1000.90,65.16 L1000.38,64.76 L999.89,64.37 L999.41,63.98 L998.95,63.60 L998.51,63.23 L998.09,62.87 L997.69,62.51 L997.31,62.17 L996.96,61.83 L996.63,61.50 L996.33,61.18 L996.05,60.87 L995.80,60.57 L995.58,60.28 L995.38,60.00 L995.21,59.74 L995.08,59.48 L994.98,59.23 L994.90,58.99 L994.87,58.77 L994.86,58.56 L994.89,58.36 L994.96,58.17 L995.07,58.00 L995.21,57.83 L995.39,57.68 L995.61,57.55 L995.88,57.42 L996.18,57.32 L809.75,57.22 L810.65,57.14 L811.50,57.07 L812.31,57.02 L813.08,56.98 L813.81,56.95 L814.49,56.94 L815.13,56.94 L815.74,56.96 L816.30,56.99 L816.81,57.04 L817.29,57.09 L817.73,57.17 L818.13,57.25 L818.49,57.36 L818.82,57.47 L819.10,57.60 L819.35,57.74 L819.57,57.89 L819.75,58.06 L819.89,58.24 L820.01,58.43 L820.09,58.64 L820.14,58.86 L820.16,59.08 L820.15,59.32 L820.11,59.58 L820.04,59.84 L819.95,60.11 L819.83,60.39 L819.68,60.69 L819.52,60.99 L819.32,61.31 L819.11,61.63 L818.87,61.96 M1142.40,192.40 L1139.10,190.20 L1135.77,188.00 L1132.42,185.81 L1129.04,183.63 L1125.63,181.44 L1122.20,179.27 L1118.74,177.10 L1115.27,174.93 L1111.77,172.77 L1108.24,170.62 L1104.70,168.47 L1101.14,166.33 L1097.57,164.20 L1093.97,162.07 L1090.36,159.95 L1086.74,157.84 L1083.10,155.74 L1079.45,153.65 L1075.79,151.57 L1072.12,149.49 L1068.44,147.43 L1064.75,145.38 L1061.06,143.34 L1057.36,141.31 L1053.66,139.30 L1049.97,137.30 L1046.27,135.32 L1042.57,133.35 L1038.88,131.39 L1035.19,129.46 L1031.51,127.54 L1027.83,125.64 L1024.17,123.76 L1020.52,121.90 L1016.89,120.07 L1013.27,118.26 L1009.68,116.48 L1006.10,114.72 L1002.54,112.99 L999.01,111.30 L995.51,109.64 L992.04,108.01 L988.60,106.42 L985.19,104.87 L981.82,103.36 L978.49,101.89 L975.20,100.47 L971.95,99.11 L968.75,97.79 L965.59,96.53 L962.48,95.33 L959.43,94.19 L956.42,93.12 L953.46,92.11 L950.56,91.18 L947.71,90.32 L944.92,89.54 L942.17,88.85 L939.48,88.23 L936.84,87.70 L934.24,87.26 L931.70,86.91 L929.19,86.66 L926.73,86.49 L924.30,86.42 L921.91,86.45 L919.54,86.57 L917.20,86.78 L914.89,87.09 L912.59,87.49 L910.31,87.98 L908.03,88.55 L905.77,89.21 L903.51,89.96 L901.25,90.78 L898.99,91.68 L896.72,92.65 L894.45,93.69 L892.17,94.80 L889.88,95.97 L887.58,97.21 L885.27,98.50 L882.95,99.84 L880.62,101.24 L878.27,102.68 L875.92,104.17 L873.55,105.70 L871.16,107.27 L868.77,108.89 L866.37,110.53 L863.95,112.21 L861.52,113.93 L859.09,115.67 L856.64,117.44 L854.19,119.24 L851.73,121.06 L849.26,122.91 L846.79,124.77 L844.31,126.66 L841.82,128.57 L839.34,130.50 L836.85,132.45 L834.36,134.41 L831.86,136.39 L829.37,138.38 L826.87,140.39 L824.38,142.41 L821.89,144.44 L819.40,146.49 L816.92,148.55 L814.43,150.61 L811.96,152.69 L809.49,154.78 L807.02,156.88 L804.56,158.98 L802.11,161.10 L799.67,163.22 L797.23,165.35 L794.81,167.49 L792.39,169.63 L789.99,171.78 L787.59,173.94 L785.21,176.10 L782.84,178.27 L780.48,180.44 L778.14,182.62 L775.81,184.81 L773.49,187.00 L771.19,189.19 L768.91,191.39 L766.64,193.59 L764.39,195.80 L762.15,198.01 L759.94,200.22 L757.74,202.44 L755.56,204.66 L753.40,206.89 L751.25,209.11 L749.13,211.34 L747.03,213.58 L744.95,215.81 L742.89,218.05 L740.85,220.29 L738.84,222.54 L736.84,224.78 L734.87,227.03 L732.93,229.28 L731.00,231.53 L729.10,233.79 L727.23,236.04 L725.38,238.30 L723.55,240.56 L721.75,242.82 L719.98,245.09 L718.23,247.35 L716.51,249.62 L714.82,251.88 L713.15,254.15 L711.51,256.42 L709.90,258.69 L708.32,260.96 L706.77,263.24 L705.24,265.51 L703.74,267.79 L702.28,270.06 L700.84,272.34 L699.43,274.62 L698.05,276.90 L696.71,279.18 L695.39,281.46 L694.10,283.74 L692.85,286.02 L691.62,288.30 L690.43,290.59 L689.27,292.87 L688.14,295.15 L687.04,297.44 L685.98,299.72 L684.95,302.01 L683.95,304.29 L682.98,306.58 L682.04,308.86 L681.14,311.15 L680.28,313.43 L679.44,315.72 L678.64,318.01 L677.87,320.29 L677.14,322.58 L676.44,324.87 L675.77,327.15 L675.14,329.44 L674.54,331.72 L673.98,334.01 L673.45,336.29 L672.96,338.58 L672.50,340.86 L672.07,343.15 L671.68,345.43 L671.32,347.72 L671.00,350.00 M980.00,90.00 L980.91,91.46 L981.83,92.94 L982.75,94.42 L983.68,95.91 L984.61,97.41 L985.55,98.91 L986.48,100.42 L987.42,101.94 L988.36,103.47 L989.30,105.00 L990.24,106.54 L991.18,108.08 L992.12,109.63 L993.06,111.18 L993.99,112.73 L994.93,114.29 L995.86,115.86 L996.78,117.43 L997.71,119.00 L998.63,120.57 L999.55,122.15 L1000.46,123.73 L1001.37,125.31 L1002.27,126.90 L1003.17,128.49 L1004.06,130.08 L1004.95,131.67 L1005.83,133.27 L1006.71,134.87 L1007.58,136.47 L1008.45,138.07 L1009.30,139.67 L1010.16,141.28 L1011.00,142.89 L1011.84,144.50 L1012.67,146.11 L1013.50,147.72 L1014.32,149.33 L1015.13,150.95 L1015.93,152.56 L1016.73,154.18 L1017.52,155.80 L1018.30,157.42 L1019.07,159.04 L1019.83,160.66 L1020.59,162.29 L1021.34,163.91 L1022.08,165.54 L1022.81,167.17 L1023.53,168.79 L1024.25,170.42 L1024.96,172.05 L1025.65,173.68 L1026.34,175.31 L1027.02,176.94 L1027.69,178.57 L1028.35,180.21 L1029.00,181.84 L1029.65,183.48 L1030.28,185.11 L1030.90,186.75 L1031.52,188.38 L1032.12,190.02 L1032.72,191.66 L1033.30,193.30 L1033.88,194.93 L1034.45,196.57 L1035.00,198.21 L1035.55,199.85 L1036.08,201.49 L1036.61,203.13 L1037.13,204.78 L1037.63,206.42 L1038.13,208.06 L1038.61,209.70 L1039.09,211.34 L1039.55,212.99 L1040.01,214.63 L1040.45,216.28 L1040.88,217.92 L1041.30,219.57 L1041.72,221.21 L1042.12,222.86 L1042.51,224.50 L1042.89,226.15 L1043.26,227.79 L1043.61,229.44 L1043.96,231.09 L1044.30,232.73 L1044.62,234.38 L1044.94,236.03 L1045.24,237.68 L1045.53,239.33 L1045.81,240.97 L1046.08,242.62 L1046.34,244.27 L1046.59,245.92 L1046.83,247.57 L1047.05,249.22 L1047.26,250.87 L1047.47,252.52 L1047.66,254.17 L1047.84,255.82 L1048.01,257.47 L1048.17,259.12 L1048.31,260.77 L1048.45,262.42 L1048.57,264.07 L1048.68,265.72 L1048.78,267.37 L1048.87,269.02 L1048.95,270.67 L1049.02,272.33 L1049.07,273.98 L1049.12,275.63 L1049.15,277.28 L1049.17,278.93 L1049.18,280.59 L1049.18,282.24 L1049.16,283.89 L1049.14,285.54 L1049.10,287.19 L1049.05,288.85 L1048.99,290.50 L1048.92,292.15 L1048.84,293.80 L1048.74,295.46 L1048.64,297.11 L1048.52,298.76 L1048.39,300.41 L1048.25,302.07 L1048.10,303.72 L1047.94,305.37 L1047.77,307.03 L1047.58,308.68 L1047.38,310.33 L1047.18,311.98 L1046.96,313.64 L1046.72,315.29 L1046.48,316.94 L1046.23,318.60 L1045.96,320.25 L1045.69,321.90 L1045.40,323.56 L1045.10,325.21 L1044.79,326.86 L1044.47,328.52 L1044.14,330.17 L1043.80,331.82 L1043.44,333.47 L1043.08,335.13 L1042.70,336.78 L1042.32,338.43 L1041.92,340.09 L1041.51,341.74 L1041.09,343.39 L1040.66,345.04 L1040.22,346.70 L1039.76,348.35 L1039.30,350.00 L1038.83,351.65 L1038.34,353.31 L1037.85,354.96 L1037.34,356.61 L1036.83,358.26 L1036.30,359.92 L1035.76,361.57 L1035.21,363.22 L1034.66,364.87 L1034.09,366.52 L1033.51,368.17 L1032.92,369.83 L1032.32,371.48 L1031.71,373.13 L1031.09,374.78 L1030.46,376.43 L1029.82,378.08 L1029.17,379.73 L1028.52,381.38 L1027.85,383.03 L1027.17,384.68 L1026.48,386.33 L1025.78,387.98 L1025.07,389.63 L1024.36,391.28 L1023.63,392.93 L1022.89,394.58 L1022.15,396.23 L1021.39,397.88 L1020.63,399.53 L1019.86,401.18 L1019.08,402.82 L1018.28,404.47 L1017.48,406.12 L1016.68,407.77 L1015.86,409.41 L1015.03,411.06 L1014.20,412.71 L1013.35,414.35 L1012.50,416.00" fill="none" stroke="#707070" stroke-width="1.1" stroke-dasharray="1.2 2.2"/>
<path d="M841.8 144.0L848.9 149.3" stroke="#9a9a9a" stroke-width="1.5"/>
<path d="M893.3 131.6L896.9 137.8" stroke="#9a9a9a" stroke-width="1.5"/>
<path d="M1071.0 112.0L1084.0 121.0" stroke="#9a9a9a" stroke-width="1.5"/>
<path d="M1142.4 192.4L1150.0 197.6" stroke="#9a9a9a" stroke-width="1.5"/>
<ellipse cx="597.5" cy="228.8" rx="37.2" ry="16.9" transform="rotate(-32.3 597.5 228.8)" fill="none" stroke="#dd11ff" stroke-width="2.1"/>
<ellipse cx="601.2" cy="268.4" rx="31.0" ry="19.7" transform="rotate(-39.0 601.2 268.4)" fill="none" stroke="#ffaa11" stroke-width="2.1"/>
<ellipse cx="774.0" cy="279.1" rx="26.8" ry="22.5" transform="rotate(-42.5 774.0 279.1)" fill="none" stroke="#ff2200" stroke-width="2.1"/>
<path d="M592.8 227.1h8M596.8 223.1v8M594.0 224.3l5.6 5.6M594.0 229.9l5.6 -5.6" stroke="#ff0000" stroke-width="1.5"/>
<path d="M598.6 270.8h8M602.6 266.8v8M599.8 268.0l5.6 5.6M599.8 273.6l5.6 -5.6" stroke="#ff0000" stroke-width="1.5"/>
<path d="M758.6 271.1h8M762.6 267.1v8M759.8 268.3l5.6 5.6M759.8 273.9l5.6 -5.6" stroke="#ff0000" stroke-width="1.5"/>
<path d="M770 279.1h8M774 275.1v8" stroke="#ff0000" stroke-width="1.2"/>
<text x="597.0" y="232.0" class="ml">EGE</text>
<text x="601.0" y="272.0" class="ml">ORI</text>
<text x="774.0" y="282.0" class="ml">STA</text>
<text class="mo" transform="translate(148.40 643.30) rotate(-90) scale(0.9592 1.1130)" text-anchor="end">APR</text>
<text class="mo" transform="translate(294.30 645.03) rotate(-90) scale(0.9587 1.1130)" text-anchor="end">MAY</text>
<text class="mo" transform="translate(435.10 641.33) rotate(-90) scale(0.9424 1.1130)" text-anchor="end">JUN</text>
<text class="mo" transform="translate(576.20 641.78) rotate(-90) scale(0.9123 1.1130)" text-anchor="end">JUL</text>
<text class="mo" transform="translate(723.20 642.50) rotate(-90) scale(0.9905 1.1130)" text-anchor="end">AUG</text>
<text class="mo" transform="translate(871.50 643.78) rotate(-90) scale(0.9245 1.1130)" text-anchor="end">SEP</text>
<text class="mo" transform="translate(1016.20 643.88) rotate(-90) scale(0.9947 1.1130)" text-anchor="end">OCT</text>
<text class="mo" transform="translate(1169.30 645.48) rotate(-90) scale(1.0040 1.1130)" text-anchor="end">NOV</text>
<text class="mo" transform="translate(1318.40 645.20) rotate(-90) scale(0.9765 1.1130)" text-anchor="end">DEC</text>
<text class="mo" transform="translate(1468.20 641.36) rotate(-90) scale(0.9259 1.1130)" text-anchor="end">JAN</text>
<text class="mo" transform="translate(1627.30 645.94) rotate(-90) scale(0.9556 1.1130)" text-anchor="end">FEB</text>
<text class="mo" transform="translate(1765.40 644.74) rotate(-90) scale(1.0048 1.1130)" text-anchor="end">MAR</text>
<line x1="75.0" y1="641.2" x2="75.0" y2="842.4" stroke="#585858" stroke-width="2.08" stroke-dasharray="2.08 3.44"/>
<line x1="219.0" y1="641.2" x2="219.0" y2="842.4" stroke="#585858" stroke-width="2.08" stroke-dasharray="2.08 3.44"/>
<line x1="365.0" y1="641.2" x2="365.0" y2="842.4" stroke="#585858" stroke-width="2.08" stroke-dasharray="2.08 3.44"/>
<line x1="506.0" y1="641.2" x2="506.0" y2="842.4" stroke="#585858" stroke-width="2.08" stroke-dasharray="2.08 3.44"/>
<line x1="651.0" y1="641.2" x2="651.0" y2="842.4" stroke="#585858" stroke-width="2.08" stroke-dasharray="2.08 3.44"/>
<line x1="797.0" y1="641.2" x2="797.0" y2="842.4" stroke="#585858" stroke-width="2.08" stroke-dasharray="2.08 3.44"/>
<line x1="940.0" y1="641.2" x2="940.0" y2="842.4" stroke="#585858" stroke-width="2.08" stroke-dasharray="2.08 3.44"/>
<line x1="1091.0" y1="641.2" x2="1091.0" y2="842.4" stroke="#585858" stroke-width="2.08" stroke-dasharray="2.08 3.44"/>
<line x1="1239.0" y1="641.2" x2="1239.0" y2="842.4" stroke="#585858" stroke-width="2.08" stroke-dasharray="2.08 3.44"/>
<line x1="1394.0" y1="641.2" x2="1394.0" y2="842.4" stroke="#585858" stroke-width="2.08" stroke-dasharray="2.08 3.44"/>
<line x1="1548.0" y1="641.2" x2="1548.0" y2="842.4" stroke="#585858" stroke-width="2.08" stroke-dasharray="2.08 3.44"/>
<line x1="1687.0" y1="641.2" x2="1687.0" y2="842.4" stroke="#585858" stroke-width="2.08" stroke-dasharray="2.08 3.44"/>
<text x="117.2" y="831.8" class="bl">KSE</text>
<text x="254.9" y="831.8" class="bl">ETA</text>
<text x="495.5" y="831.8" class="bl">NZC</text>
<text x="711.5" y="831.8" class="bl">NDA</text>
<text x="853.5" y="831.8" class="bl">SPE</text>
<text x="946.4" y="831.8" class="bl">ARD</text>
<text x="1024.8" y="831.8" class="bl">EGE</text>
<text x="1143.0" y="831.8" class="bl">NTA</text>
<text x="1285.1" y="831.8" class="bl">MON</text>
<text x="1343.9" y="831.8" class="bl">URS</text>
<text x="1412.5" y="831.8" class="bl">AHY</text>
<text x="1485.5" y="831.8" class="bl">GUM</text>
<text x="1535.0" y="831.8" class="bl">OHY</text>
<text x="1736.1" y="831.8" class="bl">XHE</text>
<text x="1770.0" y="831.8" class="bl">EVI</text>
<text x="176.9" y="815.9" class="bl">AVB</text>
<text x="255.4" y="815.9" class="bl">ELY</text>
<text x="323.8" y="815.9" class="bl">CAM</text>
<text x="432.2" y="815.9" class="bl">SSG</text>
<text x="578.5" y="815.9" class="bl">PCA</text>
<text x="721.0" y="815.9" class="bl">AUD</text>
<text x="809.4" y="815.9" class="bl">AUR</text>
<text x="931.0" y="815.9" class="bl">DSX</text>
<text x="1009.9" y="815.9" class="bl">OCU</text>
<text x="1137.6" y="815.9" class="bl">OER</text>
<text x="1254.6" y="815.9" class="bl">DKD</text>
<text x="1304.5" y="815.9" class="bl">DSV</text>
<text x="1353.5" y="815.9" class="bl">ALY</text>
<text x="1407.5" y="815.9" class="bl">JLE</text>
<text x="1471.0" y="815.9" class="bl">SCC</text>
<text x="1559.5" y="815.9" class="bl">FEV</text>
<text x="176.2" y="799.8" class="bl">LYR</text>
<text x="372.9" y="799.8" class="bl">JMC</text>
<text x="558.8" y="799.8" class="bl">JPE</text>
<text x="672.0" y="799.8" class="bl">PAU</text>
<text x="774.5" y="799.8" class="bl">NIA</text>
<text x="1049.5" y="799.8" class="bl">STA</text>
<text x="1206.5" y="799.8" class="bl">NOO</text>
<text x="1353.3" y="799.8" class="bl">COM</text>
<text x="1471.0" y="799.8" class="bl">NCC</text>
<text x="1564.5" y="799.8" class="bl">FED</text>
<text x="205.9" y="782.9" class="bl">HVI</text>
<text x="412.0" y="782.9" class="bl">ARI</text>
<text x="530.1" y="782.9" class="bl">SZC</text>
<text x="619.1" y="782.9" class="bl">CAP</text>
<text x="818.9" y="782.9" class="bl">NUE</text>
<text x="961.4" y="782.9" class="bl">OCT</text>
<text x="1059.5" y="782.9" class="bl">ORI</text>
<text x="1186.6" y="782.9" class="bl">AMO</text>
<text x="1255.6" y="782.9" class="bl">DPC</text>
<text x="1329.0" y="782.9" class="bl">XVI</text>
<text x="1407.5" y="782.9" class="bl">QUA</text>
<text x="1559.1" y="782.9" class="bl">AAN</text>
<text x="352.9" y="766.6" class="bl">TAH</text>
<text x="431.1" y="766.6" class="bl">JEA</text>
<text x="480.9" y="766.6" class="bl">JIP</text>
<text x="538.9" y="766.6" class="bl">PPS</text>
<text x="578.6" y="766.6" class="bl">ZCS</text>
<text x="632.6" y="766.6" class="bl">GDR</text>
<text x="971.4" y="766.6" class="bl">DRA</text>
<text x="1074.1" y="766.6" class="bl">LUM</text>
<text x="1113.0" y="766.6" class="bl">RPU</text>
<text x="1177.0" y="766.6" class="bl">THA</text>
<text x="1259.1" y="766.6" class="bl">PSU</text>
<text x="1470.4" y="766.6" class="bl">XCB</text>
<text x="431.9" y="749.9" class="bl">IRC</text>
<text x="544.5" y="749.9" class="bl">CAN</text>
<text x="579.0" y="749.9" class="bl">FAN</text>
<text x="682.0" y="749.9" class="bl">PER</text>
<text x="1049.9" y="749.9" class="bl">CTA</text>
<text x="1265.5" y="749.9" class="bl">HYD</text>
<text x="1481.0" y="749.9" class="bl">XUM</text>
<text x="441.4" y="733.8" class="bl">COR</text>
<text x="657.5" y="733.8" class="bl">SDA</text>
<text x="1049.4" y="733.8" class="bl">LMI</text>
<text x="1166.6" y="733.8" class="bl">LEO</text>
<text x="1274.6" y="733.8" class="bl">EHY</text>
<text x="1500.5" y="733.8" class="bl">ECV</text>
<text x="603.5" y="717.7" class="bl">JXA</text>
<text x="715.9" y="717.7" class="bl">KCG</text>
<text x="1156.0" y="717.7" class="bl">AND</text>
<text x="1275.0" y="717.7" class="bl">DAD</text>
<text x="666.5" y="700.9" class="bl">ERI</text>
<text x="1108.3" y="700.9" class="bl">SLD</text>
<text x="1211.5" y="700.9" class="bl">ORS</text>
<text x="1300.5" y="700.9" class="bl">GEM</text>
<text x="1123.0" y="684.8" class="bl">KUM</text>
<line x1="1043.1" y1="642.3" x2="1043.1" y2="842.4" stroke="#ff0000" stroke-width="1.9" stroke-dasharray="5.14 2.22"/>
<rect x="106.2" y="832.0" width="23.8" height="4.1" fill="#ee82ee"/>
<rect x="165.0" y="832.0" width="179.9" height="4.1" fill="#ee82ee"/>
<rect x="366.1" y="832.0" width="258.8" height="4.1" fill="#ee82ee"/>
<rect x="636.2" y="832.0" width="150.7" height="4.1" fill="#ee82ee"/>
<rect x="807.0" y="832.0" width="92.9" height="4.1" fill="#ee82ee"/>
<rect x="920.0" y="832.0" width="52.8" height="4.1" fill="#ee82ee"/>
<rect x="984.0" y="832.0" width="81.7" height="4.1" fill="#ee82ee"/>
<rect x="1082.0" y="832.0" width="122.0" height="4.1" fill="#ee82ee"/>
<rect x="1244.2" y="832.0" width="81.8" height="4.1" fill="#ee82ee"/>
<rect x="1337.0" y="832.0" width="18.8" height="4.1" fill="#ee82ee"/>
<rect x="1381.0" y="832.0" width="63.0" height="4.1" fill="#ee82ee"/>
<rect x="1459.0" y="832.0" width="53.0" height="4.1" fill="#ee82ee"/>
<rect x="1523.0" y="832.0" width="24.0" height="4.1" fill="#ee82ee"/>
<rect x="1724.2" y="832.0" width="23.8" height="4.1" fill="#ee82ee"/>
<rect x="1758.0" y="832.0" width="24.0" height="4.1" fill="#ee82ee"/>
<rect x="164.9" y="816.1" width="24.1" height="4.1" fill="#dd11ee"/>
<rect x="224.0" y="816.1" width="62.8" height="4.1" fill="#dd11ee"/>
<rect x="312.0" y="816.1" width="28.8" height="4.1" fill="#dd11ee"/>
<rect x="366.1" y="816.1" width="126.8" height="4.1" fill="#dd11ee"/>
<rect x="508.0" y="816.1" width="145.9" height="4.1" fill="#dd11ee"/>
<rect x="704.0" y="816.1" width="33.9" height="4.1" fill="#dd11ee"/>
<rect x="773.0" y="816.1" width="72.8" height="4.1" fill="#dd11ee"/>
<rect x="871.0" y="816.1" width="117.0" height="4.1" fill="#dd11ee"/>
<rect x="1003.0" y="816.1" width="13.7" height="4.1" fill="#dd11ee"/>
<rect x="1062.2" y="816.1" width="150.8" height="4.1" fill="#dd11ee"/>
<rect x="1244.2" y="816.1" width="22.8" height="4.1" fill="#dd11ee"/>
<rect x="1293.0" y="816.1" width="23.0" height="4.1" fill="#dd11ee"/>
<rect x="1342.0" y="816.1" width="23.0" height="4.1" fill="#dd11ee"/>
<rect x="1386.0" y="816.1" width="43.0" height="4.1" fill="#dd11ee"/>
<rect x="1459.0" y="816.1" width="24.0" height="4.1" fill="#dd11ee"/>
<rect x="1548.0" y="816.1" width="23.0" height="4.1" fill="#dd11ee"/>
<rect x="164.9" y="800.0" width="24.1" height="4.1" fill="#ff2200"/>
<rect x="257.9" y="800.0" width="230.1" height="4.1" fill="#ff2200"/>
<rect x="508.0" y="800.0" width="107.0" height="4.1" fill="#ff2200"/>
<rect x="626.0" y="800.0" width="91.9" height="4.1" fill="#ff2200"/>
<rect x="729.0" y="800.0" width="97.0" height="4.1" fill="#ff2200"/>
<rect x="949.0" y="800.0" width="201.0" height="4.1" fill="#ff2200"/>
<rect x="1160.0" y="800.0" width="88.0" height="4.1" fill="#ff2200"/>
<rect x="1258.0" y="800.0" width="186.0" height="4.1" fill="#ff2200"/>
<rect x="1459.0" y="800.0" width="24.0" height="4.1" fill="#ff2200"/>
<rect x="1553.0" y="800.0" width="23.0" height="4.1" fill="#ff2200"/>
<rect x="193.9" y="783.1" width="24.1" height="4.1" fill="#ffaa11"/>
<rect x="322.0" y="783.1" width="185.0" height="4.1" fill="#ffaa11"/>
<rect x="518.2" y="783.1" width="23.8" height="4.1" fill="#ffaa11"/>
<rect x="557.2" y="783.1" width="126.8" height="4.1" fill="#ffaa11"/>
<rect x="807.0" y="783.1" width="23.8" height="4.1" fill="#ffaa11"/>
<rect x="954.0" y="783.1" width="19.0" height="4.1" fill="#ffaa11"/>
<rect x="988.9" y="783.1" width="136.1" height="4.1" fill="#ffaa11"/>
<rect x="1155.2" y="783.1" width="62.8" height="4.1" fill="#ffaa11"/>
<rect x="1244.2" y="783.1" width="22.8" height="4.1" fill="#ffaa11"/>
<rect x="1317.0" y="783.1" width="24.0" height="4.1" fill="#ffaa11"/>
<rect x="1396.0" y="783.1" width="23.0" height="4.1" fill="#ffaa11"/>
<rect x="1464.0" y="783.1" width="186.0" height="4.1" fill="#ffaa11"/>
<rect x="341.0" y="766.8" width="29.0" height="4.1" fill="#ffee00"/>
<rect x="410.0" y="766.8" width="37.8" height="4.1" fill="#ffee00"/>
<rect x="469.0" y="766.8" width="23.9" height="4.1" fill="#ffee00"/>
<rect x="528.0" y="766.8" width="18.0" height="4.1" fill="#ffee00"/>
<rect x="562.0" y="766.8" width="29.0" height="4.1" fill="#ffee00"/>
<rect x="616.2" y="766.8" width="32.8" height="4.1" fill="#ffee00"/>
<rect x="959.0" y="766.8" width="29.0" height="4.1" fill="#ffee00"/>
<rect x="1062.2" y="766.8" width="23.8" height="4.1" fill="#ffee00"/>
<rect x="1101.0" y="766.8" width="24.0" height="4.1" fill="#ffee00"/>
<rect x="1160.0" y="766.8" width="33.9" height="4.1" fill="#ffee00"/>
<rect x="1249.0" y="766.8" width="23.0" height="4.1" fill="#ffee00"/>
<rect x="1424.9" y="766.8" width="87.1" height="4.1" fill="#ffee00"/>
<rect x="420.0" y="750.1" width="23.9" height="4.1" fill="#aaee22"/>
<rect x="533.0" y="750.1" width="22.9" height="4.1" fill="#aaee22"/>
<rect x="567.0" y="750.1" width="24.0" height="4.1" fill="#aaee22"/>
<rect x="621.0" y="750.1" width="122.0" height="4.1" fill="#aaee22"/>
<rect x="968.9" y="750.1" width="166.1" height="4.1" fill="#aaee22"/>
<rect x="1185.0" y="750.1" width="161.0" height="4.1" fill="#aaee22"/>
<rect x="1469.0" y="750.1" width="24.0" height="4.1" fill="#aaee22"/>
<rect x="429.9" y="734.0" width="23.1" height="4.1" fill="#55cc00"/>
<rect x="577.0" y="734.0" width="156.0" height="4.1" fill="#55cc00"/>
<rect x="994.0" y="734.0" width="110.8" height="4.1" fill="#55cc00"/>
<rect x="1116.0" y="734.0" width="107.0" height="4.1" fill="#55cc00"/>
<rect x="1263.0" y="734.0" width="29.0" height="4.1" fill="#55cc00"/>
<rect x="1489.0" y="734.0" width="23.0" height="4.1" fill="#55cc00"/>
<rect x="592.0" y="717.9" width="23.0" height="4.1" fill="#00ee77"/>
<rect x="655.0" y="717.9" width="117.0" height="4.1" fill="#00ee77"/>
<rect x="1072.0" y="717.9" width="171.0" height="4.1" fill="#00ee77"/>
<rect x="1263.0" y="717.9" width="24.0" height="4.1" fill="#00ee77"/>
<rect x="596.0" y="701.1" width="137.0" height="4.1" fill="#11ccee"/>
<rect x="1092.0" y="701.1" width="28.0" height="4.1" fill="#11ccee"/>
<rect x="1200.0" y="701.1" width="23.0" height="4.1" fill="#11ccee"/>
<rect x="1273.0" y="701.1" width="53.0" height="4.1" fill="#11ccee"/>
<rect x="1111.0" y="685.0" width="24.0" height="4.1" fill="#0022cc"/>
<path d="M113.9 834.0h7.8M117.8 829.9v8.2" stroke="#fff" stroke-width="2"/>
<path d="M241.1 834.0h7.8M245.0 829.9v8.2" stroke="#fff" stroke-width="2"/>
<path d="M511.0 834.0h7.8M514.9 829.9v8.2" stroke="#fff" stroke-width="2"/>
<path d="M707.0 834.0h7.8M710.9 829.9v8.2" stroke="#fff" stroke-width="2"/>
<path d="M833.9 834.0h7.8M837.8 829.9v8.2" stroke="#fff" stroke-width="2"/>
<path d="M962.1 834.0h7.8M966.0 829.9v8.2" stroke="#fff" stroke-width="2"/>
<path d="M986.8 834.0h7.8M990.7 829.9v8.2" stroke="#fff" stroke-width="2"/>
<path d="M1117.1 834.0h7.8M1121.0 829.9v8.2" stroke="#fff" stroke-width="2"/>
<path d="M1295.9 834.0h7.8M1299.8 829.9v8.2" stroke="#fff" stroke-width="2"/>
<path d="M1341.8 834.0h7.8M1345.7 829.9v8.2" stroke="#fff" stroke-width="2"/>
<path d="M1413.1 834.0h7.8M1417.0 829.9v8.2" stroke="#fff" stroke-width="2"/>
<path d="M1482.1 834.0h7.8M1486.0 829.9v8.2" stroke="#fff" stroke-width="2"/>
<path d="M1531.1 834.0h7.8M1535.0 829.9v8.2" stroke="#fff" stroke-width="2"/>
<path d="M1732.1 834.0h7.8M1736.0 829.9v8.2" stroke="#fff" stroke-width="2"/>
<path d="M1765.9 834.0h7.8M1769.8 829.9v8.2" stroke="#fff" stroke-width="2"/>
<path d="M172.9 818.1h7.8M176.8 814.0v8.2" stroke="#fff" stroke-width="2"/>
<path d="M255.8 818.1h7.8M259.7 814.0v8.2" stroke="#fff" stroke-width="2"/>
<path d="M323.9 818.1h7.8M327.8 814.0v8.2" stroke="#fff" stroke-width="2"/>
<path d="M438.0 818.1h7.8M441.9 814.0v8.2" stroke="#fff" stroke-width="2"/>
<path d="M599.1 818.1h7.8M603.0 814.0v8.2" stroke="#fff" stroke-width="2"/>
<path d="M716.9 818.1h7.8M720.8 814.0v8.2" stroke="#fff" stroke-width="2"/>
<path d="M793.9 818.1h7.8M797.8 814.0v8.2" stroke="#fff" stroke-width="2"/>
<path d="M939.7 818.1h7.8M943.6 814.0v8.2" stroke="#fff" stroke-width="2"/>
<path d="M1005.8 818.1h7.8M1009.7 814.0v8.2" stroke="#fff" stroke-width="2"/>
<path d="M1153.1 818.1h7.8M1157.0 814.0v8.2" stroke="#fff" stroke-width="2"/>
<path d="M1251.1 818.1h7.8M1255.0 814.0v8.2" stroke="#fff" stroke-width="2"/>
<path d="M1300.1 818.1h7.8M1304.0 814.0v8.2" stroke="#fff" stroke-width="2"/>
<path d="M1350.0 818.1h7.8M1353.9 814.0v8.2" stroke="#fff" stroke-width="2"/>
<path d="M1403.1 818.1h7.8M1407.0 814.0v8.2" stroke="#fff" stroke-width="2"/>
<path d="M1467.1 818.1h7.8M1471.0 814.0v8.2" stroke="#fff" stroke-width="2"/>
<path d="M1554.9 818.1h7.8M1558.8 814.0v8.2" stroke="#fff" stroke-width="2"/>
<path d="M174.8 802.0h7.8M178.8 797.9v8.2" stroke="#fff" stroke-width="2"/>
<path d="M379.1 802.0h7.8M383.0 797.9v8.2" stroke="#fff" stroke-width="2"/>
<path d="M545.0 802.0h7.8M548.9 797.9v8.2" stroke="#fff" stroke-width="2"/>
<path d="M682.8 802.0h7.8M686.7 797.9v8.2" stroke="#fff" stroke-width="2"/>
<path d="M741.8 802.0h7.8M745.7 797.9v8.2" stroke="#fff" stroke-width="2"/>
<path d="M1074.8 802.0h7.8M1078.7 797.9v8.2" stroke="#fff" stroke-width="2"/>
<path d="M1217.0 802.0h7.8M1220.9 797.9v8.2" stroke="#fff" stroke-width="2"/>
<path d="M1304.9 802.0h7.8M1308.8 797.9v8.2" stroke="#fff" stroke-width="2"/>
<path d="M1467.1 802.0h7.8M1471.0 797.9v8.2" stroke="#fff" stroke-width="2"/>
<path d="M1560.0 802.0h7.8M1563.9 797.9v8.2" stroke="#fff" stroke-width="2"/>
<path d="M201.9 785.1h7.8M205.8 781.0v8.2" stroke="#fff" stroke-width="2"/>
<path d="M401.1 785.1h7.8M405.0 781.0v8.2" stroke="#fff" stroke-width="2"/>
<path d="M526.1 785.1h7.8M530.0 781.0v8.2" stroke="#fff" stroke-width="2"/>
<path d="M638.9 785.1h7.8M642.8 781.0v8.2" stroke="#fff" stroke-width="2"/>
<path d="M814.9 785.1h7.8M818.8 781.0v8.2" stroke="#fff" stroke-width="2"/>
<path d="M959.9 785.1h7.8M963.8 781.0v8.2" stroke="#fff" stroke-width="2"/>
<path d="M1040.8 785.1h7.8M1044.7 781.0v8.2" stroke="#fff" stroke-width="2"/>
<path d="M1187.8 785.1h7.8M1191.7 781.0v8.2" stroke="#fff" stroke-width="2"/>
<path d="M1251.1 785.1h7.8M1255.0 781.0v8.2" stroke="#fff" stroke-width="2"/>
<path d="M1324.9 785.1h7.8M1328.8 781.0v8.2" stroke="#fff" stroke-width="2"/>
<path d="M1403.1 785.1h7.8M1407.0 781.0v8.2" stroke="#fff" stroke-width="2"/>
<path d="M1545.8 785.1h7.8M1549.7 781.0v8.2" stroke="#fff" stroke-width="2"/>
<path d="M356.0 768.8h7.8M359.9 764.7v8.2" stroke="#fff" stroke-width="2"/>
<path d="M426.8 768.8h7.8M430.7 764.7v8.2" stroke="#fff" stroke-width="2"/>
<path d="M476.9 768.8h7.8M480.8 764.7v8.2" stroke="#fff" stroke-width="2"/>
<path d="M535.8 768.8h7.8M539.7 764.7v8.2" stroke="#fff" stroke-width="2"/>
<path d="M570.8 768.8h7.8M574.7 764.7v8.2" stroke="#fff" stroke-width="2"/>
<path d="M630.9 768.8h7.8M634.8 764.7v8.2" stroke="#fff" stroke-width="2"/>
<path d="M973.7 768.8h7.8M977.6 764.7v8.2" stroke="#fff" stroke-width="2"/>
<path d="M1070.0 768.8h7.8M1073.9 764.7v8.2" stroke="#fff" stroke-width="2"/>
<path d="M1108.9 768.8h7.8M1112.8 764.7v8.2" stroke="#fff" stroke-width="2"/>
<path d="M1177.9 768.8h7.8M1181.8 764.7v8.2" stroke="#fff" stroke-width="2"/>
<path d="M1255.9 768.8h7.8M1259.8 764.7v8.2" stroke="#fff" stroke-width="2"/>
<path d="M1467.1 768.8h7.8M1471.0 764.7v8.2" stroke="#fff" stroke-width="2"/>
<path d="M427.9 752.1h7.8M431.8 748.0v8.2" stroke="#fff" stroke-width="2"/>
<path d="M539.7 752.1h7.8M543.6 748.0v8.2" stroke="#fff" stroke-width="2"/>
<path d="M574.7 752.1h7.8M578.6 748.0v8.2" stroke="#fff" stroke-width="2"/>
<path d="M703.8 752.1h7.8M707.7 748.0v8.2" stroke="#fff" stroke-width="2"/>
<path d="M1094.9 752.1h7.8M1098.8 748.0v8.2" stroke="#fff" stroke-width="2"/>
<path d="M1271.1 752.1h7.8M1275.0 748.0v8.2" stroke="#fff" stroke-width="2"/>
<path d="M1476.8 752.1h7.8M1480.7 748.0v8.2" stroke="#fff" stroke-width="2"/>
<path d="M437.8 736.0h7.8M441.7 731.9v8.2" stroke="#fff" stroke-width="2"/>
<path d="M630.9 736.0h7.8M634.8 731.9v8.2" stroke="#fff" stroke-width="2"/>
<path d="M1038.9 736.0h7.8M1042.8 731.9v8.2" stroke="#fff" stroke-width="2"/>
<path d="M1168.1 736.0h7.8M1172.0 731.9v8.2" stroke="#fff" stroke-width="2"/>
<path d="M1274.7 736.0h7.8M1278.6 731.9v8.2" stroke="#fff" stroke-width="2"/>
<path d="M1496.8 736.0h7.8M1500.7 731.9v8.2" stroke="#fff" stroke-width="2"/>
<path d="M599.1 719.9h7.8M603.0 715.8v8.2" stroke="#fff" stroke-width="2"/>
<path d="M727.0 719.9h7.8M730.9 715.8v8.2" stroke="#fff" stroke-width="2"/>
<path d="M1187.8 719.9h7.8M1191.7 715.8v8.2" stroke="#fff" stroke-width="2"/>
<path d="M1270.8 719.9h7.8M1274.7 715.8v8.2" stroke="#fff" stroke-width="2"/>
<path d="M687.9 703.1h7.8M691.8 699.0v8.2" stroke="#fff" stroke-width="2"/>
<path d="M1102.1 703.1h7.8M1106.0 699.0v8.2" stroke="#fff" stroke-width="2"/>
<path d="M1207.1 703.1h7.8M1211.0 699.0v8.2" stroke="#fff" stroke-width="2"/>
<path d="M1300.1 703.1h7.8M1304.0 699.0v8.2" stroke="#fff" stroke-width="2"/>
<path d="M1119.0 687.0h7.8M1122.9 682.9v8.2" stroke="#fff" stroke-width="2"/>
<rect x="20.5" y="641.5" width="1765" height="201" fill="none" stroke="#fff" stroke-width="1.1"/>
<line x1="20.5" y1="842.4" x2="20.5" y2="847.3" stroke="#fff" stroke-width="1.1"/>
<text transform="translate(20.80 861.8) scale(1.07 1)" class="tk">0</text>
<line x1="265.6" y1="842.4" x2="265.6" y2="847.3" stroke="#fff" stroke-width="1.1"/>
<text transform="translate(265.87 861.8) scale(1.07 1)" class="tk">50</text>
<line x1="510.6" y1="842.4" x2="510.6" y2="847.3" stroke="#fff" stroke-width="1.1"/>
<text transform="translate(510.94 861.8) scale(1.07 1)" class="tk">100</text>
<line x1="755.7" y1="842.4" x2="755.7" y2="847.3" stroke="#fff" stroke-width="1.1"/>
<text transform="translate(756.01 861.8) scale(1.07 1)" class="tk">150</text>
<line x1="1000.8" y1="842.4" x2="1000.8" y2="847.3" stroke="#fff" stroke-width="1.1"/>
<text transform="translate(1001.08 861.8) scale(1.07 1)" class="tk">200</text>
<line x1="1245.8" y1="842.4" x2="1245.8" y2="847.3" stroke="#fff" stroke-width="1.1"/>
<text transform="translate(1246.15 861.8) scale(1.07 1)" class="tk">250</text>
<line x1="1490.9" y1="842.4" x2="1490.9" y2="847.3" stroke="#fff" stroke-width="1.1"/>
<text transform="translate(1491.22 861.8) scale(1.07 1)" class="tk">300</text>
<line x1="1736.0" y1="842.4" x2="1736.0" y2="847.3" stroke="#fff" stroke-width="1.1"/>
<text transform="translate(1736.29 861.8) scale(1.07 1)" class="tk">350</text>
<text transform="translate(902.3 881.9) scale(1.1415 1)" class="tk">Solar longitude (deg)</text>
<text x="316.6" y="30.00" class="hd">DE000X</text>
<text x="316.6" y="43.04" class="hd">Beg: 20251021 21:08:10 (sol = 208.37&#176;)</text>
<text x="316.6" y="56.08" class="hd">End: 20251022 04:37:06 (sol = 208.68&#176;)</text>
<text x="316.6" y="69.12" class="hd">--------------------------------------</text>
<text x="316.6" y="82.16" class="hd">ORI: 6</text>
<text x="316.6" y="95.20" class="hd">...: 5</text>
<text x="316.6" y="108.24" class="hd">STA: 3</text>
<text x="316.6" y="121.28" class="hd">EGE: 2</text>
</svg></body></html>
